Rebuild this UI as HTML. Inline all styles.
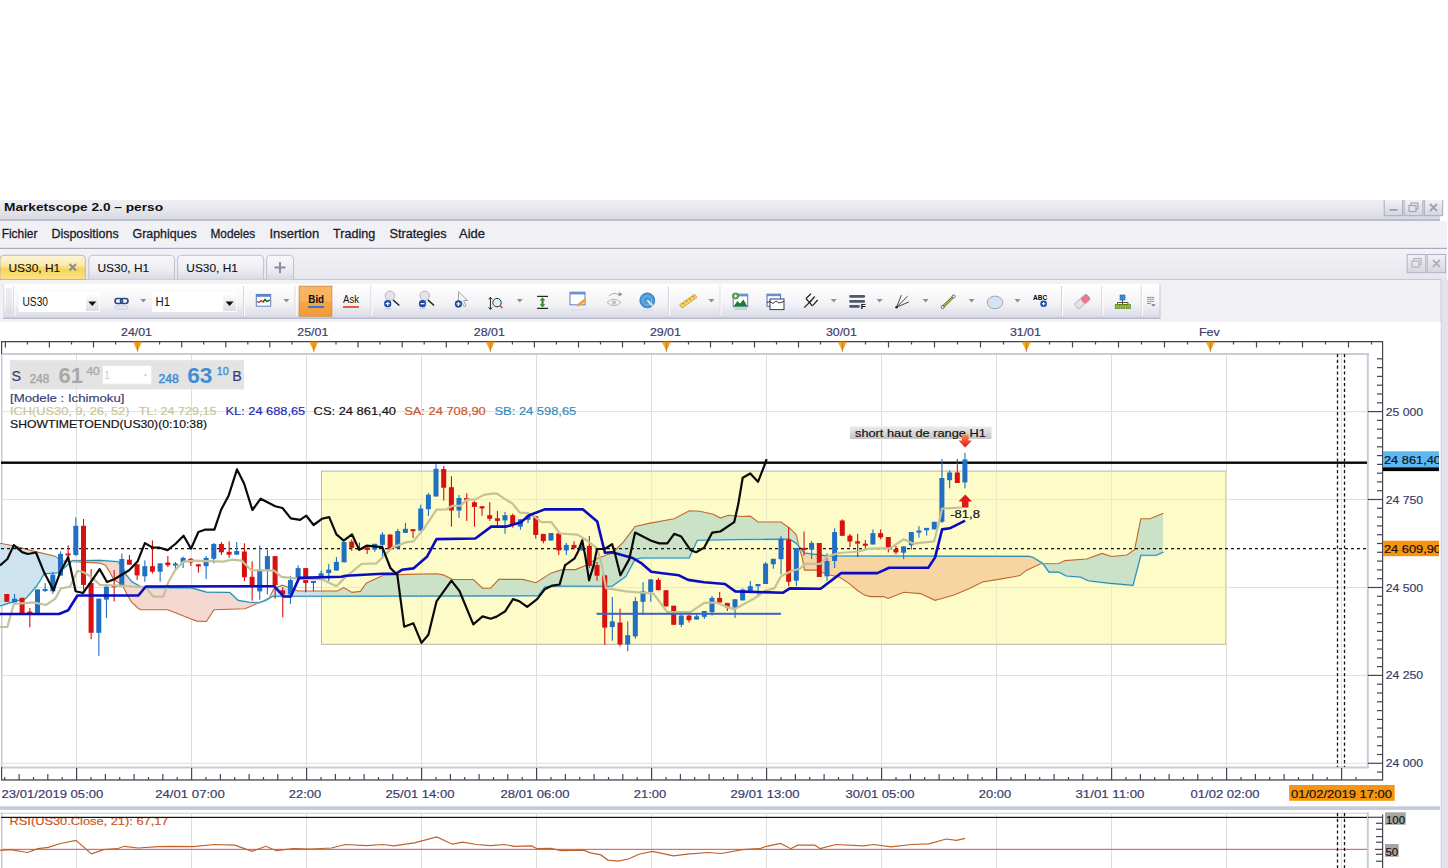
<!DOCTYPE html>
<html><head><meta charset="utf-8"><style>
html,body{margin:0;padding:0;width:1448px;height:868px;overflow:hidden;background:#fff}
svg{display:block}
text{font-family:"Liberation Sans",sans-serif}
</style></head><body>
<svg width="1448" height="868" viewBox="0 0 1448 868" shape-rendering="geometricPrecision">
<defs>
<linearGradient id="gTitle" x1="0" y1="0" x2="0" y2="1"><stop offset="0" stop-color="#efeff3"/><stop offset="0.5" stop-color="#e6e6ec"/><stop offset="1" stop-color="#d6d7e1"/></linearGradient>
<linearGradient id="gTabRow" x1="0" y1="0" x2="0" y2="1"><stop offset="0" stop-color="#f2f2f6"/><stop offset="1" stop-color="#e6e6ee"/></linearGradient>
<linearGradient id="gTab" x1="0" y1="0" x2="0" y2="1"><stop offset="0" stop-color="#f8f8fb"/><stop offset="0.6" stop-color="#ececf2"/><stop offset="1" stop-color="#d8d9e3"/></linearGradient>
<linearGradient id="gTabA" x1="0" y1="0" x2="0" y2="1"><stop offset="0" stop-color="#fdf6de"/><stop offset="0.4" stop-color="#fbeaa8"/><stop offset="0.58" stop-color="#f7d458"/><stop offset="1" stop-color="#fbe38a"/></linearGradient>
<linearGradient id="gTool" x1="0" y1="0" x2="0" y2="1"><stop offset="0" stop-color="#ffffff"/><stop offset="0.55" stop-color="#f4f4f8"/><stop offset="1" stop-color="#d9dae4"/></linearGradient>
<linearGradient id="gBtn" x1="0" y1="0" x2="0" y2="1"><stop offset="0" stop-color="#f2f2f6"/><stop offset="1" stop-color="#d4d5df"/></linearGradient>
<linearGradient id="gBid" x1="0" y1="0" x2="0" y2="1"><stop offset="0" stop-color="#f7b25a"/><stop offset="1" stop-color="#f29a35"/></linearGradient>
<linearGradient id="gDrop" x1="0" y1="0" x2="0" y2="1"><stop offset="0" stop-color="#ffffff"/><stop offset="1" stop-color="#dcdce4"/></linearGradient>
</defs>
<rect x="0" y="0" width="1448" height="868" fill="#ffffff"/>
<rect x="0" y="200" width="1440" height="20" fill="url(#gTitle)"/>
<rect x="0" y="219.5" width="1440" height="1.2" fill="#9fa1b3"/>
<text x="4" y="211" font-size="11.5" fill="#111" font-weight="bold" text-anchor="start" textLength="159" lengthAdjust="spacingAndGlyphs" >Marketscope 2.0 – perso</text>
<rect x="1384.2" y="200" width="18.399999999999864" height="15.699999999999989" fill="url(#gBtn)"/>
<path d="M1384.2,200 L1384.2,215.7 L1402.6,215.7 L1402.6,200" fill="none" stroke="#a9abbb" stroke-width="1"/>
<rect x="1389.4" y="209" width="8" height="1.8" fill="#9fa1b1"/>
<rect x="1404.1" y="200" width="18.800000000000182" height="15.699999999999989" fill="url(#gBtn)"/>
<path d="M1404.1,200 L1404.1,215.7 L1422.9,215.7 L1422.9,200" fill="none" stroke="#a9abbb" stroke-width="1"/>
<rect x="1411.0" y="203" width="7" height="6" fill="none" stroke="#9fa1b1" stroke-width="1.1"/><rect x="1409.0" y="205.5" width="7" height="6" fill="#e2e2ea" stroke="#9fa1b1" stroke-width="1.1"/>
<rect x="1424.3" y="200" width="18.40000000000009" height="15.699999999999989" fill="url(#gBtn)"/>
<path d="M1424.3,200 L1424.3,215.7 L1442.7,215.7 L1442.7,200" fill="none" stroke="#a9abbb" stroke-width="1"/>
<path d="M1430.0,204 L1437.0,211 M1437.0,204 L1430.0,211" stroke="#9fa1b1" stroke-width="1.9"/>
<rect x="0" y="221" width="1447" height="27" fill="#f0f0f5"/>
<rect x="0" y="247.8" width="1447" height="1.2" fill="#a9abbb"/>
<text x="1.7" y="237.5" font-size="12.5" fill="#1a1a2a" font-weight="normal" text-anchor="start" textLength="35.8" lengthAdjust="spacingAndGlyphs" stroke="#1a1a2a" stroke-width="0.28" >Fichier</text>
<text x="51.4" y="237.5" font-size="12.5" fill="#1a1a2a" font-weight="normal" text-anchor="start" textLength="67.3" lengthAdjust="spacingAndGlyphs" stroke="#1a1a2a" stroke-width="0.28" >Dispositions</text>
<text x="132.6" y="237.5" font-size="12.5" fill="#1a1a2a" font-weight="normal" text-anchor="start" textLength="64.0" lengthAdjust="spacingAndGlyphs" stroke="#1a1a2a" stroke-width="0.28" >Graphiques</text>
<text x="210.5" y="237.5" font-size="12.5" fill="#1a1a2a" font-weight="normal" text-anchor="start" textLength="44.7" lengthAdjust="spacingAndGlyphs" stroke="#1a1a2a" stroke-width="0.28" >Modeles</text>
<text x="269.5" y="237.5" font-size="12.5" fill="#1a1a2a" font-weight="normal" text-anchor="start" textLength="49.7" lengthAdjust="spacingAndGlyphs" stroke="#1a1a2a" stroke-width="0.28" >Insertion</text>
<text x="333" y="237.5" font-size="12.5" fill="#1a1a2a" font-weight="normal" text-anchor="start" textLength="42.2" lengthAdjust="spacingAndGlyphs" stroke="#1a1a2a" stroke-width="0.28" >Trading</text>
<text x="389.5" y="237.5" font-size="12.5" fill="#1a1a2a" font-weight="normal" text-anchor="start" textLength="57.0" lengthAdjust="spacingAndGlyphs" stroke="#1a1a2a" stroke-width="0.28" >Strategies</text>
<text x="459" y="237.5" font-size="12.5" fill="#1a1a2a" font-weight="normal" text-anchor="start" textLength="26" lengthAdjust="spacingAndGlyphs" stroke="#1a1a2a" stroke-width="0.28" >Aide</text>
<rect x="0" y="249" width="1447" height="31" fill="url(#gTabRow)"/>
<rect x="0" y="279" width="1441" height="1" fill="#c4c6d2"/>
<rect x="1407.2" y="254.5" width="18.59999999999991" height="18.2" fill="url(#gBtn)" stroke="#b0b2c0" stroke-width="1"/>
<rect x="1414.0" y="258.5" width="7" height="6" fill="none" stroke="#aeb0bc" stroke-width="1.1"/><rect x="1412.0" y="261" width="7" height="6" fill="#e4e4ec" stroke="#aeb0bc" stroke-width="1.1"/>
<rect x="1427.2" y="254.5" width="18.399999999999864" height="18.2" fill="url(#gBtn)" stroke="#b0b2c0" stroke-width="1"/>
<path d="M1432.9,260 L1439.9,267 M1439.9,260 L1432.9,267" stroke="#aeb0bc" stroke-width="1.8"/>
<path d="M0,279.5 L0,259 Q0,255.3 4,255.3 L81,255.3 Q85.3,255.3 85.3,259 L85.3,279.5 Z" fill="url(#gTabA)" stroke="#b4b2ae" stroke-width="0.9"/>
<text x="8.5" y="272" font-size="11.5" fill="#111" font-weight="normal" text-anchor="start" textLength="51.6" lengthAdjust="spacingAndGlyphs" stroke="#111" stroke-width="0.12">US30, H1</text>
<path d="M69.5,264 L76,270.5 M76,264 L69.5,270.5" stroke="#8c8c8c" stroke-width="2"/>
<path d="M88.8,279.5 L88.8,259 Q88.8,255.3 92.8,255.3 L170.5,255.3 Q174.5,255.3 174.5,259 L174.5,279.5" fill="url(#gTab)" stroke="#bfc1cf" stroke-width="1"/>
<text x="97.5" y="272" font-size="11.5" fill="#111" font-weight="normal" text-anchor="start" textLength="51.6" lengthAdjust="spacingAndGlyphs" stroke="#111" stroke-width="0.12">US30, H1</text>
<path d="M177.6,279.5 L177.6,259 Q177.6,255.3 181.6,255.3 L259.6,255.3 Q263.6,255.3 263.6,259 L263.6,279.5" fill="url(#gTab)" stroke="#bfc1cf" stroke-width="1"/>
<text x="186.29999999999998" y="272" font-size="11.5" fill="#111" font-weight="normal" text-anchor="start" textLength="51.6" lengthAdjust="spacingAndGlyphs" stroke="#111" stroke-width="0.12">US30, H1</text>
<path d="M266.6,279.5 L266.6,259 Q266.6,255.3 270.6,255.3 L289.5,255.3 Q293.5,255.3 293.5,259 L293.5,279.5" fill="url(#gTab)" stroke="#bfc1cf" stroke-width="1"/>
<path d="M280,262 L280,273 M274.5,267.5 L285.5,267.5" stroke="#8a8c9c" stroke-width="2"/>
<rect x="0" y="280" width="1441" height="42" fill="#f0f0f5"/>
<rect x="1441" y="280" width="7" height="588" fill="#e2e3eb"/>
<rect x="1440.5" y="280" width="1" height="588" fill="#c8cad6"/>
<rect x="3" y="283.8" width="1157.3" height="34.5" fill="url(#gTool)" rx="1"/>
<rect x="3" y="317.5" width="1157.3" height="1.5" fill="#b9bbca"/>
<rect x="3" y="283.8" width="1" height="34" fill="#dcdde6"/>
<rect x="1159.5" y="283.8" width="1" height="34" fill="#c8cad6"/>
<rect x="6.5" y="288" width="0.8" height="26" fill="#d5d6de"/>
<rect x="8.5" y="288" width="0.8" height="26" fill="#d5d6de"/>
<rect x="10.5" y="288" width="0.8" height="26" fill="#d5d6de"/>
<rect x="13.3" y="286" width="1" height="30" fill="#d2d3dc"/><rect x="14.3" y="286" width="1" height="30" fill="#ffffff"/>
<rect x="18.7" y="292" width="81.1" height="20" fill="#ffffff"/>
<rect x="86" y="293" width="12.8" height="18" fill="url(#gDrop)"/>
<path d="M88.3,301.5 L96.3,301.5 L92.3,306 Z" fill="#111"/>
<text x="22.5" y="305.5" font-size="12" fill="#111" textLength="25.5" lengthAdjust="spacingAndGlyphs">US30</text>
<rect x="115" y="298.5" width="7.5" height="5" rx="2.5" fill="none" stroke="#2a4a88" stroke-width="1.6"/>
<rect x="120.5" y="298.5" width="7.5" height="5" rx="2.5" fill="none" stroke="#2a4a88" stroke-width="1.6"/>
<rect x="115" y="306" width="13" height="3" rx="1.5" fill="none" stroke="#c8cad4" stroke-width="1"/>
<path d="M140.3,299.1 L146.3,299.1 L143.3,302.4 Z" fill="#8e8e98"/>
<rect x="152" y="292" width="84.6" height="20" fill="#ffffff"/>
<rect x="223.2" y="293" width="12.8" height="18" fill="url(#gDrop)"/>
<path d="M225.6,301.5 L233.6,301.5 L229.6,306 Z" fill="#111"/>
<text x="155.5" y="305.5" font-size="12" fill="#111" textLength="14.5" lengthAdjust="spacingAndGlyphs">H1</text>
<rect x="243.0" y="286" width="1" height="30" fill="#d2d3dc"/><rect x="244.0" y="286" width="1" height="30" fill="#ffffff"/>
<rect x="256.3" y="294.4" width="14.4" height="11.8" fill="#ffffff" stroke="#5a7ec0" stroke-width="1"/>
<rect x="256.3" y="294.4" width="14.4" height="2.4" fill="#5a82c8"/>
<polyline points="257,301.5 259,302.5 261,300.5 263,302 265,299.5 267,301.5 270,300" fill="none" stroke="#c03020" stroke-width="1.3"/>
<polyline points="263,302 265,299.5 267,301.5 270,300" fill="none" stroke="#207030" stroke-width="1.3"/>
<rect x="259" y="308.5" width="1.5" height="1.2" fill="#d8d8de"/><rect x="267" y="308.5" width="1.5" height="1.2" fill="#d8d8de"/>
<path d="M283.4,299.1 L289.4,299.1 L286.4,302.4 Z" fill="#8e8e98"/>
<rect x="294.6" y="286" width="1" height="30" fill="#d2d3dc"/><rect x="295.6" y="286" width="1" height="30" fill="#ffffff"/>
<rect x="299.2" y="286.2" width="32.6" height="30" fill="url(#gBid)" stroke="#c89050" stroke-width="1"/>
<rect x="299.7" y="286.7" width="31.6" height="14.5" fill="#fbb768" opacity="0.7"/>
<text x="308.3" y="302.7" font-size="11.5" fill="#111" font-weight="bold" textLength="15.8" lengthAdjust="spacingAndGlyphs">Bid</text>
<rect x="308.2" y="306" width="15.8" height="2" fill="#2a78d8"/>
<text x="343" y="302.7" font-size="11.5" fill="#111" textLength="16" lengthAdjust="spacingAndGlyphs">Ask</text>
<rect x="343" y="306" width="16" height="2" fill="#e86030"/>
<rect x="370.5" y="286" width="1" height="30" fill="#d2d3dc"/><rect x="371.5" y="286" width="1" height="30" fill="#ffffff"/>
<circle cx="389.9" cy="295.8" r="4.8" fill="#e4e4e8" stroke="#b8b8c0" stroke-width="1"/>
<line x1="393.2" y1="300" x2="399.29999999999995" y2="305.5" stroke="#222" stroke-width="1.6"/>
<circle cx="387.7" cy="303.7" r="3.6" fill="#1a4aa0"/>
<path d="M385.7,303.7 L389.7,303.7 M387.7,301.7 L387.7,305.7" stroke="#fff" stroke-width="1.2"/>
<rect x="384.9" y="307.5" width="6" height="2" fill="#b8c4e0" opacity="0.6"/>
<circle cx="424.7" cy="295.8" r="4.8" fill="#e4e4e8" stroke="#b8b8c0" stroke-width="1"/>
<line x1="428.0" y1="300" x2="434.09999999999997" y2="305.5" stroke="#222" stroke-width="1.6"/>
<circle cx="422.5" cy="303.7" r="3.6" fill="#1a4aa0"/>
<path d="M420.5,303.7 L424.5,303.7" stroke="#fff" stroke-width="1.3"/>
<rect x="419.7" y="307.5" width="6" height="2" fill="#b8c4e0" opacity="0.6"/>
<path d="M458.5,291.7 L458.5,304 L461.5,301.5 L464,306.5 L466,305.5 L463.5,300.5 L467.8,300.5 Z" fill="#f4f4f6" stroke="#9a9aa4" stroke-width="0.9"/>
<circle cx="458.4" cy="303.9" r="3.6" fill="#1a4aa0"/><path d="M456.4,303.9 L460.4,303.9 M458.4,301.9 L458.4,305.9" stroke="#fff" stroke-width="1.2"/>
<path d="M490.4,297.5 L490.4,309.2 M488.6,299.3 L490.4,297.3 L492.2,299.3 M488.6,307.4 L490.4,309.4 L492.2,307.4" stroke="#222" stroke-width="1" fill="none"/>
<circle cx="497" cy="302.6" r="4.2" fill="#d8f0f8" stroke="#333" stroke-width="1"/>
<line x1="499.8" y1="305.5" x2="502.3" y2="308" stroke="#d07020" stroke-width="1.8"/>
<path d="M516.7,299.1 L522.7,299.1 L519.7,302.4 Z" fill="#8e8e98"/>
<rect x="537.1" y="295.8" width="10.9" height="1.2" fill="#222"/><rect x="537.1" y="307.8" width="10.9" height="1.2" fill="#222"/>
<path d="M542.5,297.2 L545.3,300.5 L543.6,300.5 L543.6,304.2 L545.3,304.2 L542.5,307.5 L539.7,304.2 L541.4,304.2 L541.4,300.5 L539.7,300.5 Z" fill="#3a8a2a"/>
<rect x="570" y="292.2" width="15" height="12.6" fill="#ffffff" stroke="#5a7ec0" stroke-width="1"/>
<rect x="570" y="292.2" width="15" height="2.2" fill="#6a8ed0"/>
<path d="M584.5,298.5 L586.5,300.5 L580,306 L577,306.5 L577.5,304 Z" fill="#f0a828"/>
<rect x="571" y="309" width="13" height="2" fill="#d8dcec" opacity="0.7"/>
<path d="M607,302.4 Q614,296 621,302.4 Q614,308.8 607,302.4 Z" fill="none" stroke="#b4b4b8" stroke-width="1"/>
<circle cx="614" cy="302.4" r="2.2" fill="#c4c4c8"/>
<path d="M609,296 Q614,291.5 619.5,295" fill="none" stroke="#a8a8ac" stroke-width="1"/>
<path d="M619,292 L622.5,294.5 L618.5,296.5 Z" fill="#909094"/>
<circle cx="647.3" cy="300.4" r="7.4" fill="#4a98d8" stroke="#3a78b8" stroke-width="1"/>
<circle cx="647.3" cy="300.4" r="4.5" fill="none" stroke="#8cc4ec" stroke-width="0.8"/>
<path d="M647.3,300.4 L652.5,305.5" stroke="#d8ecfa" stroke-width="2"/>
<rect x="642" y="309.5" width="11" height="1.5" fill="#c8def0" opacity="0.7"/>
<rect x="667.9" y="286" width="1" height="30" fill="#d2d3dc"/><rect x="668.9" y="286" width="1" height="30" fill="#ffffff"/>
<path d="M679.5,304.8 L694.5,294.2 L697,297.5 L682,308 Z" fill="#f5d060" stroke="#c8a030" stroke-width="0.8"/>
<line x1="683.0" y1="303.0" x2="683.9" y2="304.3" stroke="#6a5020" stroke-width="0.8"/>
<line x1="686.2" y1="300.7" x2="687.1" y2="302.0" stroke="#6a5020" stroke-width="0.8"/>
<line x1="689.4" y1="298.4" x2="690.3" y2="299.7" stroke="#6a5020" stroke-width="0.8"/>
<line x1="692.6" y1="296.1" x2="693.5" y2="297.4" stroke="#6a5020" stroke-width="0.8"/>
<path d="M708.4,299.1 L714.4,299.1 L711.4,302.4 Z" fill="#8e8e98"/>
<rect x="719.6" y="286" width="1" height="30" fill="#d2d3dc"/><rect x="720.6" y="286" width="1" height="30" fill="#ffffff"/>
<rect x="733.2" y="294.2" width="14.5" height="12.5" fill="#ffffff" stroke="#5a7ec0" stroke-width="1"/>
<rect x="733.2" y="294.2" width="14.5" height="2.2" fill="#6a8ed0"/>
<path d="M733.7,306.2 L737.5,301 L740,303.5 L743.5,299.5 L747.2,306.2 Z" fill="#1f7a2a"/>
<circle cx="735.6" cy="296" r="3" fill="#60b040" stroke="#2a7a2a" stroke-width="0.8"/><path d="M734,296 L737.2,296 M735.6,294.4 L735.6,297.6" stroke="#fff" stroke-width="1"/>
<rect x="734" y="308" width="13" height="2" fill="#9ac8a0" opacity="0.5"/>
<rect x="767" y="294.2" width="13.6" height="12" fill="#ffffff" stroke="#4a6aa8" stroke-width="1"/>
<rect x="767" y="294.2" width="13.6" height="2" fill="#6a8ed0"/>
<rect x="770" y="299" width="14" height="10.6" fill="#ffffff" stroke="#2a3a70" stroke-width="1"/>
<polyline points="767,302.5 770,301.5 773,303.5 776,301 779,303 784,301.5" fill="none" stroke="#222" stroke-width="0.9"/>
<path d="M804.2,307.7 L811.9,300" stroke="#222" stroke-width="1.2"/>
<path d="M806,298.5 L811,293.7 M809.5,302.4 L814.8,296.5 M812.4,305.8 L817.7,300" stroke="#222" stroke-width="1.2" fill="none"/>
<path d="M806,298.5 L812.4,305.8" stroke="#222" stroke-width="1.2"/>
<path d="M830.7,299.1 L836.7,299.1 L833.7,302.4 Z" fill="#8e8e98"/>
<rect x="849.2" y="295.09999999999997" width="15.9" height="2.6" rx="1.2" fill="#4c5a6a"/>
<rect x="849.2" y="300.09999999999997" width="15.9" height="2.6" rx="1.2" fill="#4c5a6a"/>
<rect x="849.2" y="305.09999999999997" width="10.6" height="2.6" rx="1.2" fill="#4c5a6a"/>
<text x="860.7" y="309.3" font-size="8" font-weight="bold" fill="#000">F</text>
<path d="M876.6,299.1 L882.6,299.1 L879.6,302.4 Z" fill="#8e8e98"/>
<path d="M896.5,307.2 L901.4,295.1 M896.5,307.2 L907.7,296.1 M896.5,307.2 L909.1,301.9" stroke="#333" stroke-width="0.9" fill="none"/>
<circle cx="896.5" cy="307.2" r="1.2" fill="#222"/>
<path d="M922.6,299.1 L928.6,299.1 L925.6,302.4 Z" fill="#8e8e98"/>
<line x1="942.6" y1="307.2" x2="953.7" y2="296.4" stroke="#4a5a20" stroke-width="2.6"/>
<line x1="942.6" y1="307.2" x2="953.7" y2="296.4" stroke="#a8c838" stroke-width="1.4"/>
<circle cx="942.6" cy="307.2" r="1.5" fill="#fff" stroke="#444" stroke-width="0.8"/><circle cx="953.7" cy="296.4" r="1.5" fill="#fff" stroke="#444" stroke-width="0.8"/>
<path d="M968.6,299.1 L974.6,299.1 L971.6,302.4 Z" fill="#8e8e98"/>
<ellipse cx="995" cy="302.4" rx="7.8" ry="6.3" fill="#d6e4f2" stroke="#9aaabb" stroke-width="1"/>
<path d="M1014.5,299.1 L1020.5,299.1 L1017.5,302.4 Z" fill="#8e8e98"/>
<text x="1033" y="300" font-size="8" font-weight="bold" fill="#000" textLength="14.2" lengthAdjust="spacingAndGlyphs">ABC</text>
<circle cx="1043.6" cy="303.8" r="3.3" fill="#1a4aa0"/><path d="M1041.8,303.8 L1045.4,303.8 M1043.6,302 L1043.6,305.6" stroke="#fff" stroke-width="1.1"/>
<rect x="1061.0" y="286" width="1" height="30" fill="#d2d3dc"/><rect x="1062.0" y="286" width="1" height="30" fill="#ffffff"/>
<g transform="rotate(-40 1082.4 301.5)"><rect x="1074.4" y="298" width="16" height="7" rx="2" fill="#e4e4e6" stroke="#a8a8ac" stroke-width="0.8"/><rect x="1082.4" y="298" width="8" height="7" rx="2" fill="#e87a90"/></g>
<rect x="1101.3" y="286" width="1" height="30" fill="#d2d3dc"/><rect x="1102.3" y="286" width="1" height="30" fill="#ffffff"/>
<rect x="1120" y="295" width="5" height="5" fill="#3a88d8" stroke="#2a68b0" stroke-width="0.6"/>
<path d="M1122.5,300 L1122.5,304.5 M1117.5,304.5 L1128,304.5 M1117.5,302.5 L1117.5,304.5 M1128,302.5 L1128,304.5" stroke="#3a4a20" stroke-width="0.9" fill="none"/>
<path d="M1117.5,302.5 L1128,302.5" stroke="#3a4a20" stroke-width="0.9"/>
<rect x="1115.2" y="304.5" width="4.2" height="4.2" fill="#8ab828" stroke="#5a7a18" stroke-width="0.6"/>
<rect x="1120.8" y="304.5" width="4.2" height="4.2" fill="#8ab828" stroke="#5a7a18" stroke-width="0.6"/>
<rect x="1126.1" y="304.5" width="4.2" height="4.2" fill="#8ab828" stroke="#5a7a18" stroke-width="0.6"/>
<rect x="1140.8" y="286" width="1" height="30" fill="#d2d3dc"/><rect x="1141.8" y="286" width="1" height="30" fill="#ffffff"/>
<rect x="1147" y="296.90000000000003" width="7.2" height="0.9" fill="#8a8a96"/>
<rect x="1147" y="298.8" width="7.2" height="0.9" fill="#8a8a96"/>
<rect x="1147" y="300.90000000000003" width="7.2" height="0.9" fill="#8a8a96"/>
<rect x="1147" y="303.0" width="4" height="0.9" fill="#8a8a96"/>
<path d="M1151.2,304.3 L1155.6,304.3 L1153.4,306.5 Z" fill="#6a6a76"/>
<rect x="0" y="322" width="1440.5" height="546" fill="#ffffff"/>
<rect x="1" y="341" width="1382" height="1.3" fill="#454550"/>
<rect x="1" y="341" width="1.2" height="13.5" fill="#454550"/>
<rect x="1382" y="341" width="1.2" height="439.5" fill="#454550"/>
<rect x="115.0" y="341.5" width="1.2" height="3" fill="#454550"/>
<rect x="92.9" y="341.5" width="1.2" height="6" fill="#454550"/>
<rect x="70.9" y="341.5" width="1.2" height="3" fill="#454550"/>
<rect x="48.8" y="341.5" width="1.2" height="6" fill="#454550"/>
<rect x="26.8" y="341.5" width="1.2" height="3" fill="#454550"/>
<rect x="4.8" y="341.5" width="1.2" height="6" fill="#454550"/>
<rect x="159.0" y="341.5" width="1.2" height="3" fill="#454550"/>
<rect x="181.1" y="341.5" width="1.2" height="6" fill="#454550"/>
<rect x="203.1" y="341.5" width="1.2" height="3" fill="#454550"/>
<rect x="225.2" y="341.5" width="1.2" height="6" fill="#454550"/>
<rect x="247.2" y="341.5" width="1.2" height="3" fill="#454550"/>
<rect x="269.2" y="341.5" width="1.2" height="6" fill="#454550"/>
<rect x="291.3" y="341.5" width="1.2" height="3" fill="#454550"/>
<rect x="335.4" y="341.5" width="1.2" height="3" fill="#454550"/>
<rect x="357.4" y="341.5" width="1.2" height="6" fill="#454550"/>
<rect x="379.5" y="341.5" width="1.2" height="3" fill="#454550"/>
<rect x="401.6" y="341.5" width="1.2" height="6" fill="#454550"/>
<rect x="423.6" y="341.5" width="1.2" height="3" fill="#454550"/>
<rect x="445.7" y="341.5" width="1.2" height="6" fill="#454550"/>
<rect x="467.7" y="341.5" width="1.2" height="3" fill="#454550"/>
<rect x="511.8" y="341.5" width="1.2" height="3" fill="#454550"/>
<rect x="533.8" y="341.5" width="1.2" height="6" fill="#454550"/>
<rect x="555.8" y="341.5" width="1.2" height="3" fill="#454550"/>
<rect x="577.9" y="341.5" width="1.2" height="6" fill="#454550"/>
<rect x="599.9" y="341.5" width="1.2" height="3" fill="#454550"/>
<rect x="621.9" y="341.5" width="1.2" height="6" fill="#454550"/>
<rect x="643.9" y="341.5" width="1.2" height="3" fill="#454550"/>
<rect x="687.9" y="341.5" width="1.2" height="3" fill="#454550"/>
<rect x="709.9" y="341.5" width="1.2" height="6" fill="#454550"/>
<rect x="731.9" y="341.5" width="1.2" height="3" fill="#454550"/>
<rect x="753.9" y="341.5" width="1.2" height="6" fill="#454550"/>
<rect x="775.9" y="341.5" width="1.2" height="3" fill="#454550"/>
<rect x="797.9" y="341.5" width="1.2" height="6" fill="#454550"/>
<rect x="819.9" y="341.5" width="1.2" height="3" fill="#454550"/>
<rect x="864.9" y="341.5" width="1.2" height="3" fill="#454550"/>
<rect x="887.9" y="341.5" width="1.2" height="6" fill="#454550"/>
<rect x="910.9" y="341.5" width="1.2" height="3" fill="#454550"/>
<rect x="933.9" y="341.5" width="1.2" height="6" fill="#454550"/>
<rect x="956.9" y="341.5" width="1.2" height="3" fill="#454550"/>
<rect x="979.9" y="341.5" width="1.2" height="6" fill="#454550"/>
<rect x="1002.9" y="341.5" width="1.2" height="3" fill="#454550"/>
<rect x="1048.9" y="341.5" width="1.2" height="3" fill="#454550"/>
<rect x="1071.9" y="341.5" width="1.2" height="6" fill="#454550"/>
<rect x="1094.9" y="341.5" width="1.2" height="3" fill="#454550"/>
<rect x="1117.9" y="341.5" width="1.2" height="6" fill="#454550"/>
<rect x="1140.9" y="341.5" width="1.2" height="3" fill="#454550"/>
<rect x="1163.9" y="341.5" width="1.2" height="6" fill="#454550"/>
<rect x="1186.9" y="341.5" width="1.2" height="3" fill="#454550"/>
<rect x="1232.9" y="341.5" width="1.2" height="3" fill="#454550"/>
<rect x="1255.9" y="341.5" width="1.2" height="6" fill="#454550"/>
<rect x="1278.9" y="341.5" width="1.2" height="3" fill="#454550"/>
<rect x="1301.9" y="341.5" width="1.2" height="6" fill="#454550"/>
<rect x="1324.9" y="341.5" width="1.2" height="3" fill="#454550"/>
<rect x="1347.9" y="341.5" width="1.2" height="6" fill="#454550"/>
<rect x="1370.9" y="341.5" width="1.2" height="3" fill="#454550"/>
<path d="M133.0,341.8 L142.0,341.8 L137.5,351.5 Z" fill="#f5a21c"/>
<rect x="137.1" y="342" width="0.9" height="10" fill="#a06818" opacity="0.6"/>
<text x="136.5" y="335.6" font-size="11.5" fill="#3a3a6a" font-weight="normal" text-anchor="middle" textLength="31.0" lengthAdjust="spacingAndGlyphs" stroke="#3a3a6a" stroke-width="0.18" >24/01</text>
<path d="M309.3,341.8 L318.3,341.8 L313.8,351.5 Z" fill="#f5a21c"/>
<rect x="313.4" y="342" width="0.9" height="10" fill="#a06818" opacity="0.6"/>
<text x="312.8" y="335.6" font-size="11.5" fill="#3a3a6a" font-weight="normal" text-anchor="middle" textLength="31.0" lengthAdjust="spacingAndGlyphs" stroke="#3a3a6a" stroke-width="0.18" >25/01</text>
<path d="M485.8,341.8 L494.8,341.8 L490.3,351.5 Z" fill="#f5a21c"/>
<rect x="489.9" y="342" width="0.9" height="10" fill="#a06818" opacity="0.6"/>
<text x="489.3" y="335.6" font-size="11.5" fill="#3a3a6a" font-weight="normal" text-anchor="middle" textLength="31.0" lengthAdjust="spacingAndGlyphs" stroke="#3a3a6a" stroke-width="0.18" >28/01</text>
<path d="M661.9,341.8 L670.9,341.8 L666.4,351.5 Z" fill="#f5a21c"/>
<rect x="666.0" y="342" width="0.9" height="10" fill="#a06818" opacity="0.6"/>
<text x="665.4" y="335.6" font-size="11.5" fill="#3a3a6a" font-weight="normal" text-anchor="middle" textLength="31.0" lengthAdjust="spacingAndGlyphs" stroke="#3a3a6a" stroke-width="0.18" >29/01</text>
<path d="M837.9,341.8 L846.9,341.8 L842.4,351.5 Z" fill="#f5a21c"/>
<rect x="842.0" y="342" width="0.9" height="10" fill="#a06818" opacity="0.6"/>
<text x="841.4" y="335.6" font-size="11.5" fill="#3a3a6a" font-weight="normal" text-anchor="middle" textLength="31.0" lengthAdjust="spacingAndGlyphs" stroke="#3a3a6a" stroke-width="0.18" >30/01</text>
<path d="M1021.9,341.8 L1030.9,341.8 L1026.4,351.5 Z" fill="#f5a21c"/>
<rect x="1026.0" y="342" width="0.9" height="10" fill="#a06818" opacity="0.6"/>
<text x="1025.4" y="335.6" font-size="11.5" fill="#3a3a6a" font-weight="normal" text-anchor="middle" textLength="31.0" lengthAdjust="spacingAndGlyphs" stroke="#3a3a6a" stroke-width="0.18" >31/01</text>
<path d="M1205.9,341.8 L1214.9,341.8 L1210.4,351.5 Z" fill="#f5a21c"/>
<rect x="1210.0" y="342" width="0.9" height="10" fill="#a06818" opacity="0.6"/>
<text x="1209.4" y="335.6" font-size="11.5" fill="#3a3a6a" font-weight="normal" text-anchor="middle" textLength="21.0" lengthAdjust="spacingAndGlyphs" stroke="#3a3a6a" stroke-width="0.18" >Fev</text>
<rect x="76.0" y="354" width="1" height="413" fill="#dedede"/>
<rect x="191.0" y="354" width="1" height="413" fill="#dedede"/>
<rect x="306.0" y="354" width="1" height="413" fill="#dedede"/>
<rect x="421.0" y="354" width="1" height="413" fill="#dedede"/>
<rect x="536.0" y="354" width="1" height="413" fill="#dedede"/>
<rect x="651.0" y="354" width="1" height="413" fill="#dedede"/>
<rect x="766.0" y="354" width="1" height="413" fill="#dedede"/>
<rect x="881.0" y="354" width="1" height="413" fill="#dedede"/>
<rect x="996.0" y="354" width="1" height="413" fill="#dedede"/>
<rect x="1111.0" y="354" width="1" height="413" fill="#dedede"/>
<rect x="1226.0" y="354" width="1" height="413" fill="#dedede"/>
<rect x="1341.0" y="354" width="1" height="413" fill="#dedede"/>
<rect x="1" y="411.1" width="1366.5" height="1" fill="#dedede"/>
<rect x="1" y="499.0" width="1366.5" height="1" fill="#dedede"/>
<rect x="1" y="587.0" width="1366.5" height="1" fill="#dedede"/>
<rect x="1" y="674.9" width="1366.5" height="1" fill="#dedede"/>
<rect x="1" y="762.8" width="1366.5" height="1" fill="#dedede"/>
<rect x="321.5" y="471.1" width="904.4" height="173.2" fill="#fdfbc8" stroke="#b6b6b0" stroke-width="1"/>
<rect x="421.0" y="471.6" width="1" height="172.2" fill="#ebe8c4" opacity="0.9"/>
<rect x="536.0" y="471.6" width="1" height="172.2" fill="#ebe8c4" opacity="0.9"/>
<rect x="651.0" y="471.6" width="1" height="172.2" fill="#ebe8c4" opacity="0.9"/>
<rect x="766.0" y="471.6" width="1" height="172.2" fill="#ebe8c4" opacity="0.9"/>
<rect x="881.0" y="471.6" width="1" height="172.2" fill="#ebe8c4" opacity="0.9"/>
<rect x="996.0" y="471.6" width="1" height="172.2" fill="#ebe8c4" opacity="0.9"/>
<rect x="1111.0" y="471.6" width="1" height="172.2" fill="#ebe8c4" opacity="0.9"/>
<rect x="1226.0" y="471.6" width="1" height="172.2" fill="#ebe8c4" opacity="0.9"/>
<rect x="322" y="499.0" width="903.4" height="1" fill="#ebe8c4" opacity="0.9"/>
<rect x="322" y="587.0" width="903.4" height="1" fill="#ebe8c4" opacity="0.9"/>
<rect x="2" y="353" width="1367" height="2" fill="#c9ccd6"/>
<rect x="1366.8" y="353" width="2" height="415" fill="#c9ccd6"/>
<rect x="2" y="766.5" width="1367" height="2" fill="#c9ccd6"/>
<rect x="1" y="354" width="1.5" height="413" fill="#c9ccd6"/>
<clipPath id="cpY"><rect x="321.5" y="471.1" width="904.4" height="173.2"/></clipPath>
<mask id="mW"><rect x="0" y="322" width="1448" height="546" fill="#fff"/><rect x="321.5" y="471.1" width="904.4" height="173.2" fill="#000"/></mask>
<g mask="url(#mW)">
<polygon points="0.0,543.3 0.5,543.4 1.0,543.5 1.5,543.6 2.0,543.7 2.5,543.8 3.0,543.8 3.5,543.9 4.0,544.0 4.5,544.1 5.0,544.2 5.5,544.3 6.0,544.4 6.5,544.5 7.0,544.6 7.5,544.7 8.0,544.8 8.5,544.9 9.0,544.9 9.5,545.0 10.0,545.1 10.5,545.2 11.0,545.3 11.5,545.4 12.0,545.5 12.5,545.6 13.0,545.7 13.5,545.8 14.0,545.9 14.5,545.9 15.0,546.1 15.5,546.2 16.0,546.3 16.5,546.5 17.0,546.6 17.5,546.8 18.0,546.9 18.5,547.0 19.0,547.2 19.5,547.3 20.0,547.4 20.5,547.6 21.0,547.7 21.5,547.9 22.0,548.0 22.5,548.1 23.0,548.3 23.5,548.4 24.0,548.6 24.5,548.7 25.0,548.8 25.5,549.0 26.0,549.1 26.5,549.3 27.0,549.4 27.5,549.5 28.0,549.7 28.5,549.8 29.0,550.0 29.5,550.1 30.0,550.2 30.5,550.4 31.0,550.5 31.5,550.6 32.0,550.8 32.5,550.9 33.0,551.0 33.5,551.1 34.0,551.2 34.5,551.3 35.0,551.5 35.5,551.6 36.0,551.7 36.5,551.8 37.0,551.9 37.5,552.0 38.0,552.2 38.5,552.3 39.0,552.4 39.5,552.5 40.0,552.6 40.5,552.7 41.0,552.9 41.5,553.0 42.0,553.1 42.5,553.2 43.0,553.3 43.5,553.4 44.0,553.6 44.5,553.7 45.0,553.8 45.5,553.9 46.0,554.0 46.5,554.1 47.0,554.3 47.5,554.4 48.0,554.5 48.5,554.6 49.0,554.7 49.5,554.8 50.0,555.0 50.5,555.1 51.0,555.2 51.5,555.3 52.0,555.4 52.5,555.5 53.0,555.7 53.5,555.8 54.0,555.9 54.5,556.0 55.0,556.1 55.5,556.4 56.0,556.8 56.5,557.2 57.0,557.6 57.5,558.0 58.0,558.5 58.5,558.9 59.0,559.3 59.5,559.7 60.0,560.1 60.5,560.5 61.0,560.8 61.5,560.8 62.0,560.9 62.5,560.9 63.0,561.0 63.5,561.0 64.0,561.0 64.5,561.1 65.0,561.1 65.5,561.1 66.0,561.2 66.5,561.2 67.0,561.2 67.5,561.3 68.0,561.3 68.5,561.3 69.0,561.4 69.5,561.4 70.0,561.4 70.5,561.5 71.0,561.5 71.5,561.5 71.5,561.3 71.0,561.7 70.5,562.2 70.0,562.6 69.5,563.1 69.0,563.6 68.5,564.0 68.0,564.5 67.5,565.0 67.0,565.4 66.5,565.9 66.0,566.3 65.5,566.8 65.0,567.3 64.5,567.7 64.0,568.2 63.5,568.6 63.0,569.1 62.5,569.6 62.0,570.0 61.5,570.5 61.0,571.0 60.5,571.4 60.0,571.9 59.5,572.3 59.0,572.8 58.5,572.8 58.0,572.9 57.5,572.9 57.0,572.9 56.5,573.0 56.0,573.0 55.5,573.0 55.0,573.0 54.5,573.1 54.0,573.1 53.5,573.1 53.0,573.2 52.5,573.2 52.0,573.2 51.5,573.3 51.0,573.3 50.5,573.3 50.0,573.4 49.5,573.4 49.0,573.4 48.5,573.4 48.0,573.5 47.5,573.5 47.0,573.5 46.5,573.6 46.0,573.6 45.5,573.6 45.0,573.7 44.5,573.7 44.0,574.2 43.5,575.0 43.0,575.8 42.5,576.6 42.0,577.4 41.5,578.2 41.0,579.1 40.5,579.9 40.0,580.7 39.5,581.5 39.0,582.3 38.5,583.1 38.0,583.9 37.5,584.7 37.0,585.5 36.5,586.2 36.0,586.7 35.5,587.3 35.0,587.9 34.5,588.5 34.0,589.1 33.5,589.7 33.0,590.2 32.5,590.8 32.0,591.4 31.5,592.0 31.0,592.6 30.5,593.1 30.0,593.7 29.5,594.3 29.0,594.9 28.5,595.5 28.0,596.0 27.5,596.6 27.0,597.2 26.5,597.8 26.0,598.4 25.5,598.7 25.0,598.8 24.5,598.9 24.0,599.1 23.5,599.2 23.0,599.3 22.5,599.4 22.0,599.6 21.5,599.7 21.0,599.8 20.5,600.0 20.0,600.1 19.5,600.2 19.0,600.3 18.5,600.5 18.0,600.6 17.5,600.7 17.0,600.9 16.5,601.0 16.0,601.1 15.5,601.2 15.0,601.4 14.5,601.5 14.0,601.6 13.5,601.8 13.0,601.9 12.5,602.0 12.0,602.1 11.5,602.3 11.0,602.4 10.5,602.6 10.0,602.7 9.5,602.9 9.0,603.1 8.5,603.2 8.0,603.4 7.5,603.5 7.0,603.7 6.5,603.9 6.0,604.0 5.5,604.2 5.0,604.4 4.5,604.5 4.0,604.7 3.5,604.9 3.0,605.0 2.5,605.2 2.0,605.3 1.5,605.5 1.0,605.7 0.5,605.8 0.0,606.0" fill="#cde4f0"/>
<polygon points="71.5,561.5 72.0,561.6 72.5,561.6 73.0,561.6 73.5,561.7 74.0,561.7 74.5,561.7 75.0,561.8 75.5,561.8 76.0,561.8 76.5,561.8 77.0,561.9 77.5,561.9 78.0,561.9 78.5,562.0 79.0,562.0 79.5,562.0 80.0,562.0 80.5,562.1 81.0,562.1 81.5,562.1 82.0,562.1 82.5,562.2 83.0,562.2 83.5,562.2 84.0,562.2 84.5,562.3 85.0,562.3 85.5,562.3 86.0,562.4 86.5,562.4 87.0,562.4 87.5,562.4 88.0,562.5 88.5,562.5 89.0,562.5 89.5,562.5 90.0,562.6 90.5,562.6 91.0,562.6 91.5,562.6 92.0,562.7 92.5,562.7 93.0,562.7 93.5,562.8 94.0,562.8 94.5,562.8 95.0,562.8 95.5,562.9 96.0,562.9 96.5,562.9 97.0,562.9 97.5,563.0 98.0,563.0 98.5,563.0 99.0,563.0 99.5,563.1 100.0,563.1 100.5,563.3 101.0,563.5 101.5,563.7 102.0,563.9 102.5,564.1 103.0,564.2 103.5,564.4 104.0,564.6 104.5,564.8 105.0,565.0 105.5,565.2 106.0,566.0 106.5,566.8 107.0,567.7 107.5,568.5 108.0,569.3 108.5,570.1 109.0,571.0 109.5,571.8 110.0,572.7 110.5,573.6 111.0,574.5 111.5,575.4 112.0,576.4 112.5,577.3 113.0,578.2 113.5,579.1 114.0,579.8 114.5,580.1 115.0,580.4 115.5,580.8 116.0,581.1 116.5,581.4 117.0,581.7 117.5,582.0 118.0,582.3 118.5,582.6 119.0,582.9 119.5,583.3 120.0,583.8 120.5,584.3 121.0,584.8 121.5,585.3 122.0,585.8 122.5,586.3 123.0,586.8 123.5,587.3 124.0,588.3 124.5,589.3 125.0,590.3 125.5,591.3 126.0,592.4 126.5,593.4 127.0,594.4 127.5,595.4 128.0,596.3 128.5,597.1 129.0,597.9 129.5,598.7 130.0,599.5 130.5,600.4 131.0,601.2 131.5,602.0 132.0,602.7 132.5,603.1 133.0,603.6 133.5,604.0 134.0,604.5 134.5,604.9 135.0,605.4 135.5,605.8 136.0,606.3 136.5,606.7 137.0,607.2 137.5,607.6 138.0,608.1 138.5,608.5 139.0,608.8 139.5,609.0 140.0,609.2 140.5,609.4 141.0,609.6 141.5,609.7 142.0,609.7 142.5,609.7 143.0,609.7 143.5,609.7 144.0,609.7 144.5,609.7 145.0,609.7 145.5,609.7 146.0,609.7 146.5,609.7 147.0,609.7 147.5,609.7 148.0,609.7 148.5,609.7 149.0,609.7 149.5,609.7 150.0,609.7 150.5,609.7 151.0,609.7 151.5,609.7 152.0,609.7 152.5,609.7 153.0,609.7 153.5,609.7 154.0,609.7 154.5,609.7 155.0,609.7 155.5,609.7 156.0,609.7 156.5,609.7 157.0,609.7 157.5,609.7 158.0,609.7 158.5,609.7 159.0,609.7 159.5,609.7 160.0,609.7 160.5,609.7 161.0,609.7 161.5,609.7 162.0,609.7 162.5,609.7 163.0,609.7 163.5,609.7 164.0,609.7 164.5,609.7 165.0,609.7 165.5,609.7 166.0,609.7 166.5,609.7 167.0,609.7 167.5,609.7 168.0,609.8 168.5,610.0 169.0,610.2 169.5,610.4 170.0,610.6 170.5,610.8 171.0,611.0 171.5,611.2 172.0,611.4 172.5,611.6 173.0,611.8 173.5,612.0 174.0,612.2 174.5,612.4 175.0,612.6 175.5,612.8 176.0,613.0 176.5,613.2 177.0,613.4 177.5,613.6 178.0,613.8 178.5,614.0 179.0,614.2 179.5,614.4 180.0,614.6 180.5,614.8 181.0,615.0 181.5,615.1 182.0,615.3 182.5,615.5 183.0,615.7 183.5,615.9 184.0,616.1 184.5,616.3 185.0,616.5 185.5,616.7 186.0,616.9 186.5,617.1 187.0,617.3 187.5,617.5 188.0,617.7 188.5,617.9 189.0,618.1 189.5,618.3 190.0,618.5 190.5,618.7 191.0,618.9 191.5,619.1 192.0,619.3 192.5,619.5 193.0,619.7 193.5,619.8 194.0,620.0 194.5,620.2 195.0,620.4 195.5,620.6 196.0,620.8 196.5,621.0 197.0,621.1 197.5,621.1 198.0,621.2 198.5,621.2 199.0,621.2 199.5,621.2 200.0,621.2 200.5,621.3 201.0,621.3 201.5,621.3 202.0,621.3 202.5,621.3 203.0,621.4 203.5,621.4 204.0,621.4 204.5,621.4 205.0,621.4 205.5,621.5 206.0,621.5 206.5,621.3 207.0,620.6 207.5,619.8 208.0,619.0 208.5,618.2 209.0,617.5 209.5,616.7 210.0,615.9 210.5,615.1 211.0,614.4 211.5,613.6 212.0,612.8 212.5,612.0 213.0,611.3 213.5,610.5 214.0,609.7 214.5,609.7 215.0,609.7 215.5,609.7 216.0,609.6 216.5,609.6 217.0,609.6 217.5,609.6 218.0,609.6 218.5,609.6 219.0,609.5 219.5,609.5 220.0,609.5 220.5,609.5 221.0,609.5 221.5,609.5 222.0,609.4 222.5,609.4 223.0,609.4 223.5,609.4 224.0,609.4 224.5,609.4 225.0,609.3 225.5,609.3 226.0,609.3 226.5,609.3 227.0,609.3 227.5,609.3 228.0,609.2 228.5,609.2 229.0,609.2 229.5,609.2 230.0,609.2 230.5,609.2 231.0,609.2 231.5,609.1 232.0,609.1 232.5,609.1 233.0,609.1 233.5,609.1 234.0,609.1 234.5,609.0 235.0,609.0 235.5,609.0 236.0,609.0 236.5,609.0 237.0,609.0 237.5,608.9 238.0,608.9 238.5,608.9 239.0,608.9 239.5,608.9 240.0,608.9 240.5,608.8 241.0,608.8 241.5,608.8 242.0,608.8 242.5,608.8 243.0,608.8 243.5,608.7 244.0,608.7 244.5,608.7 245.0,608.7 245.5,608.5 246.0,608.3 246.5,608.1 247.0,607.8 247.5,607.6 248.0,607.4 248.5,607.2 249.0,607.0 249.5,606.8 250.0,606.5 250.5,606.3 251.0,606.1 251.5,605.9 252.0,605.7 252.5,605.5 253.0,605.2 253.5,605.0 254.0,604.8 254.5,604.6 255.0,604.4 255.5,604.2 256.0,603.9 256.5,603.7 257.0,603.5 257.5,603.3 258.0,603.1 258.5,602.9 259.0,602.7 259.0,602.7 258.5,602.8 258.0,602.8 257.5,602.7 257.0,602.7 256.5,602.7 256.0,602.6 255.5,602.6 255.0,602.6 254.5,602.5 254.0,602.5 253.5,602.5 253.0,602.4 252.5,602.4 252.0,602.4 251.5,602.3 251.0,602.3 250.5,602.3 250.0,602.2 249.5,602.2 249.0,602.2 248.5,602.1 248.0,602.0 247.5,601.9 247.0,601.8 246.5,601.8 246.0,601.7 245.5,601.6 245.0,601.5 244.5,601.4 244.0,601.4 243.5,601.3 243.0,601.2 242.5,601.1 242.0,601.0 241.5,601.0 241.0,600.9 240.5,600.8 240.0,600.7 239.5,600.6 239.0,600.5 238.5,600.5 238.0,600.3 237.5,599.8 237.0,599.4 236.5,598.9 236.0,598.4 235.5,597.9 235.0,597.4 234.5,597.0 234.0,596.5 233.5,596.0 233.0,595.5 232.5,595.1 232.0,594.6 231.5,594.1 231.0,593.6 230.5,593.2 230.0,592.7 229.5,592.5 229.0,592.5 228.5,592.5 228.0,592.5 227.5,592.5 227.0,592.5 226.5,592.4 226.0,592.4 225.5,592.4 225.0,592.4 224.5,592.4 224.0,592.4 223.5,592.4 223.0,592.4 222.5,592.4 222.0,592.4 221.5,592.4 221.0,592.3 220.5,592.3 220.0,592.3 219.5,592.3 219.0,592.3 218.5,592.3 218.0,592.3 217.5,592.3 217.0,592.3 216.5,592.3 216.0,592.3 215.5,592.3 215.0,592.2 214.5,592.2 214.0,592.2 213.5,592.2 213.0,592.2 212.5,592.2 212.0,592.2 211.5,592.2 211.0,592.2 210.5,592.2 210.0,592.2 209.5,592.2 209.0,592.1 208.5,592.1 208.0,592.1 207.5,592.1 207.0,592.1 206.5,592.1 206.0,592.0 205.5,591.8 205.0,591.7 204.5,591.6 204.0,591.4 203.5,591.3 203.0,591.2 202.5,591.0 202.0,590.9 201.5,590.7 201.0,590.6 200.5,590.5 200.0,590.3 199.5,590.2 199.0,590.0 198.5,589.9 198.0,589.8 197.5,589.6 197.0,589.5 196.5,589.3 196.0,589.2 195.5,589.1 195.0,589.0 194.5,588.8 194.0,588.7 193.5,588.6 193.0,588.5 192.5,588.3 192.0,588.2 191.5,588.1 191.0,588.0 190.5,588.0 190.0,588.0 189.5,588.0 189.0,588.0 188.5,588.0 188.0,588.0 187.5,588.0 187.0,588.0 186.5,588.0 186.0,588.0 185.5,587.9 185.0,587.9 184.5,587.9 184.0,587.9 183.5,587.9 183.0,587.9 182.5,587.9 182.0,587.9 181.5,587.9 181.0,587.9 180.5,587.9 180.0,587.9 179.5,587.9 179.0,587.9 178.5,587.9 178.0,587.9 177.5,587.9 177.0,587.9 176.5,587.9 176.0,587.9 175.5,587.9 175.0,587.9 174.5,587.8 174.0,587.8 173.5,587.8 173.0,587.8 172.5,587.8 172.0,587.8 171.5,587.8 171.0,587.8 170.5,587.8 170.0,587.8 169.5,587.8 169.0,587.8 168.5,587.8 168.0,587.8 167.5,587.8 167.0,587.8 166.5,587.8 166.0,587.8 165.5,587.8 165.0,587.8 164.5,587.8 164.0,587.8 163.5,587.7 163.0,587.7 162.5,587.7 162.0,587.7 161.5,587.7 161.0,587.7 160.5,587.7 160.0,587.7 159.5,587.7 159.0,587.7 158.5,587.7 158.0,587.7 157.5,587.7 157.0,587.7 156.5,587.7 156.0,587.7 155.5,587.7 155.0,587.7 154.5,587.7 154.0,587.7 153.5,587.7 153.0,587.7 152.5,587.6 152.0,587.6 151.5,587.6 151.0,587.6 150.5,587.6 150.0,587.6 149.5,587.6 149.0,587.6 148.5,587.6 148.0,587.6 147.5,587.6 147.0,587.6 146.5,587.5 146.0,587.4 145.5,587.3 145.0,587.2 144.5,587.1 144.0,587.0 143.5,586.9 143.0,586.8 142.5,586.7 142.0,586.6 141.5,586.5 141.0,586.4 140.5,586.3 140.0,586.2 139.5,585.9 139.0,585.7 138.5,585.4 138.0,585.1 137.5,584.9 137.0,584.6 136.5,584.3 136.0,584.1 135.5,583.8 135.0,583.5 134.5,583.2 134.0,583.0 133.5,582.7 133.0,582.4 132.5,582.2 132.0,581.9 131.5,581.4 131.0,580.8 130.5,580.2 130.0,579.6 129.5,579.0 129.0,578.3 128.5,577.7 128.0,577.1 127.5,576.5 127.0,575.9 126.5,575.3 126.0,574.5 125.5,573.5 125.0,572.5 124.5,571.5 124.0,570.4 123.5,569.4 123.0,568.4 122.5,567.4 122.0,566.5 121.5,565.9 121.0,565.3 120.5,564.7 120.0,564.1 119.5,563.5 119.0,562.9 118.5,562.3 118.0,561.7 117.5,561.7 117.0,561.6 116.5,561.6 116.0,561.6 115.5,561.5 115.0,561.5 114.5,561.4 114.0,561.4 113.5,561.4 113.0,561.3 112.5,561.3 112.0,561.3 111.5,561.2 111.0,561.2 110.5,561.2 110.0,561.1 109.5,561.1 109.0,561.0 108.5,561.0 108.0,561.0 107.5,560.9 107.0,560.9 106.5,560.9 106.0,560.8 105.5,560.8 105.0,560.8 104.5,560.7 104.0,560.7 103.5,560.7 103.0,560.6 102.5,560.6 102.0,560.5 101.5,560.5 101.0,560.5 100.5,560.4 100.0,560.4 99.5,560.4 99.0,560.4 98.5,560.4 98.0,560.4 97.5,560.4 97.0,560.4 96.5,560.4 96.0,560.5 95.5,560.5 95.0,560.5 94.5,560.5 94.0,560.5 93.5,560.5 93.0,560.5 92.5,560.5 92.0,560.5 91.5,560.5 91.0,560.5 90.5,560.5 90.0,560.5 89.5,560.5 89.0,560.6 88.5,560.6 88.0,560.6 87.5,560.6 87.0,560.6 86.5,560.6 86.0,560.6 85.5,560.6 85.0,560.6 84.5,560.6 84.0,560.6 83.5,560.6 83.0,560.6 82.5,560.6 82.0,560.7 81.5,560.7 81.0,560.7 80.5,560.7 80.0,560.7 79.5,560.7 79.0,560.7 78.5,560.7 78.0,560.7 77.5,560.7 77.0,560.7 76.5,560.7 76.0,560.7 75.5,560.8 75.0,560.8 74.5,560.8 74.0,560.8 73.5,560.8 73.0,560.8 72.5,560.8 72.0,560.8 71.5,561.3" fill="#f5d8cf"/>
<polygon points="259.0,602.7 259.5,602.5 260.0,602.3 260.5,602.1 261.0,601.9 261.5,601.7 262.0,601.5 262.5,601.3 263.0,601.1 263.5,600.8 264.0,600.6 264.5,600.3 265.0,600.0 265.5,599.7 266.0,599.5 266.5,599.2 267.0,598.9 267.5,598.6 268.0,598.4 268.5,598.1 269.0,597.8 269.5,597.1 270.0,596.2 270.5,595.3 271.0,594.3 271.5,593.4 272.0,592.5 272.5,591.5 273.0,590.6 273.5,589.6 274.0,588.7 274.5,588.5 275.0,588.3 275.5,588.1 276.0,587.9 276.5,587.6 277.0,587.4 277.5,587.2 278.0,587.0 278.5,586.8 279.0,586.6 279.5,586.4 280.0,586.2 280.5,586.0 281.0,585.7 281.5,585.5 282.0,585.3 282.5,585.3 283.0,585.4 283.5,585.6 284.0,585.8 284.5,585.9 285.0,586.1 285.5,586.3 286.0,586.4 286.5,586.6 287.0,586.8 287.5,587.0 288.0,587.1 288.5,587.3 289.0,587.5 289.5,587.6 290.0,587.8 290.5,588.0 291.0,588.2 291.5,588.4 292.0,588.6 292.5,588.8 293.0,589.0 293.5,589.2 294.0,589.4 294.5,589.6 295.0,589.8 295.5,590.0 296.0,590.2 296.5,590.4 297.0,590.6 297.5,590.8 298.0,591.0 298.5,591.0 299.0,591.0 299.5,591.0 300.0,591.0 300.5,591.0 301.0,591.0 301.5,591.0 302.0,591.0 302.5,591.0 303.0,591.0 303.5,591.0 304.0,591.0 304.5,591.0 305.0,591.0 305.5,591.0 306.0,591.0 306.5,591.0 307.0,591.0 307.5,591.0 308.0,591.0 308.5,591.0 309.0,591.0 309.5,591.0 310.0,591.0 310.5,591.0 311.0,591.0 311.5,591.0 312.0,591.0 312.5,591.0 313.0,591.0 313.5,591.0 314.0,591.0 314.5,591.0 315.0,591.0 315.5,591.0 316.0,591.0 316.5,591.0 317.0,591.0 317.5,591.0 318.0,591.0 318.5,591.0 319.0,591.0 319.5,591.0 320.0,591.0 320.5,591.0 321.0,591.0 321.5,591.0 322.0,591.0 322.5,591.0 323.0,591.0 323.5,591.0 324.0,591.0 324.5,591.0 325.0,591.0 325.5,591.0 326.0,591.0 326.5,591.0 327.0,591.0 327.5,591.0 328.0,591.0 328.5,591.0 329.0,591.0 329.5,591.0 330.0,591.0 330.5,591.0 331.0,591.0 331.5,591.0 332.0,591.0 332.5,591.0 333.0,591.0 333.5,591.0 334.0,591.0 334.5,591.0 335.0,591.0 335.5,591.0 336.0,591.0 336.5,591.0 337.0,591.0 337.5,590.9 338.0,590.7 338.5,590.4 339.0,590.1 339.5,589.9 340.0,589.6 340.5,589.3 341.0,589.1 341.5,588.8 342.0,588.5 342.5,588.2 343.0,588.0 343.5,587.7 344.0,587.8 344.5,588.1 345.0,588.4 345.5,588.6 346.0,588.9 346.5,589.2 347.0,589.5 347.5,589.8 348.0,590.1 348.5,590.4 349.0,590.7 349.5,591.0 350.0,591.2 350.5,591.5 351.0,591.8 351.5,592.1 352.0,592.4 352.5,592.3 353.0,592.3 353.5,592.2 354.0,592.2 354.5,592.1 355.0,592.0 355.5,592.0 356.0,591.9 356.5,591.9 357.0,591.8 357.5,591.7 358.0,591.7 358.5,591.6 359.0,591.6 359.5,591.5 360.0,591.4 360.5,591.1 361.0,590.5 361.5,589.8 362.0,589.1 362.5,588.4 363.0,587.7 363.5,587.1 364.0,586.4 364.5,585.7 365.0,585.0 365.5,584.4 366.0,583.7 366.5,583.0 367.0,582.8 367.5,582.5 368.0,582.3 368.5,582.1 369.0,581.9 369.5,581.6 370.0,581.4 370.5,581.2 371.0,581.0 371.5,580.7 372.0,580.5 372.5,580.3 373.0,580.0 373.5,579.8 374.0,579.6 374.5,579.4 375.0,579.1 375.5,578.9 376.0,578.7 376.5,578.4 377.0,578.2 377.5,578.0 378.0,577.8 378.5,577.5 379.0,577.3 379.5,577.1 380.0,576.9 380.5,576.6 381.0,576.4 381.5,576.2 382.0,575.9 382.5,575.7 383.0,575.5 383.5,575.3 384.0,575.3 384.5,575.3 385.0,575.2 385.5,575.2 386.0,575.2 386.5,575.2 387.0,575.2 387.5,575.1 388.0,575.1 388.5,575.1 389.0,575.1 389.5,575.1 390.0,575.0 390.5,575.0 391.0,575.0 391.5,575.0 392.0,575.0 392.5,574.9 393.0,574.9 393.5,574.9 394.0,574.9 394.5,574.9 395.0,574.8 395.5,574.8 396.0,574.8 396.5,574.8 397.0,574.8 397.5,574.8 398.0,574.7 398.5,574.7 399.0,574.7 399.5,574.7 400.0,574.7 400.5,574.6 401.0,574.6 401.5,574.6 402.0,574.6 402.5,574.6 403.0,574.5 403.5,574.5 404.0,574.5 404.5,574.5 405.0,574.5 405.5,574.4 406.0,574.4 406.5,574.4 407.0,574.4 407.5,574.4 408.0,574.4 408.5,574.4 409.0,574.3 409.5,574.3 410.0,574.3 410.5,574.3 411.0,574.3 411.5,574.3 412.0,574.3 412.5,574.3 413.0,574.2 413.5,574.2 414.0,574.2 414.5,574.2 415.0,574.2 415.5,574.2 416.0,574.2 416.5,574.2 417.0,574.2 417.5,574.1 418.0,574.1 418.5,574.1 419.0,574.1 419.5,574.1 420.0,574.1 420.5,574.1 421.0,574.1 421.5,574.0 422.0,574.0 422.5,574.0 423.0,574.0 423.5,574.0 424.0,574.0 424.5,574.0 425.0,574.0 425.5,574.0 426.0,573.9 426.5,573.9 427.0,573.9 427.5,573.9 428.0,573.9 428.5,573.9 429.0,573.9 429.5,573.9 430.0,573.9 430.5,573.8 431.0,573.8 431.5,573.8 432.0,573.8 432.5,573.8 433.0,573.8 433.5,573.8 434.0,573.8 434.5,573.7 435.0,573.7 435.5,573.7 436.0,573.7 436.5,573.7 437.0,573.8 437.5,573.9 438.0,574.0 438.5,574.0 439.0,574.1 439.5,574.2 440.0,574.3 440.5,574.4 441.0,574.5 441.5,574.6 442.0,574.7 442.5,574.7 443.0,574.8 443.5,575.0 444.0,575.2 444.5,575.5 445.0,575.7 445.5,576.0 446.0,576.2 446.5,576.5 447.0,576.7 447.5,577.0 448.0,577.2 448.5,577.5 449.0,577.7 449.5,578.0 450.0,578.2 450.5,578.5 451.0,578.7 451.5,579.0 452.0,579.2 452.5,579.5 453.0,579.5 453.5,579.5 454.0,579.5 454.5,579.5 455.0,579.5 455.5,579.5 456.0,579.5 456.5,579.5 457.0,579.5 457.5,579.5 458.0,579.5 458.5,579.5 459.0,579.5 459.5,579.5 460.0,579.5 460.5,579.5 461.0,579.5 461.5,579.5 462.0,579.5 462.5,579.5 463.0,579.5 463.5,579.5 464.0,579.5 464.5,579.5 465.0,579.5 465.5,579.5 466.0,579.5 466.5,579.5 467.0,579.5 467.5,579.5 468.0,579.5 468.5,579.5 469.0,579.5 469.5,579.5 470.0,579.5 470.5,579.5 471.0,579.5 471.5,579.5 472.0,579.5 472.5,579.5 473.0,579.5 473.5,579.7 474.0,580.2 474.5,580.6 475.0,581.1 475.5,581.6 476.0,582.0 476.5,582.5 477.0,583.0 477.5,583.4 478.0,583.9 478.5,584.4 479.0,584.8 479.5,585.3 480.0,585.8 480.5,586.2 481.0,586.7 481.5,587.2 482.0,587.6 482.5,588.1 483.0,588.2 483.5,588.2 484.0,588.2 484.5,588.2 485.0,588.2 485.5,588.2 486.0,588.2 486.5,588.2 487.0,588.2 487.5,588.2 488.0,588.2 488.5,588.2 489.0,588.2 489.5,588.2 490.0,588.2 490.5,588.2 491.0,587.8 491.5,587.2 492.0,586.7 492.5,586.2 493.0,585.6 493.5,585.1 494.0,584.6 494.5,584.0 495.0,583.5 495.5,582.9 496.0,582.4 496.5,581.9 497.0,581.3 497.5,580.8 498.0,580.3 498.5,579.7 499.0,579.4 499.5,579.4 500.0,579.4 500.5,579.4 501.0,579.4 501.5,579.4 502.0,579.4 502.5,579.4 503.0,579.4 503.5,579.4 504.0,579.4 504.5,579.4 505.0,579.4 505.5,579.4 506.0,579.4 506.5,579.4 507.0,579.4 507.5,579.4 508.0,579.4 508.5,579.4 509.0,579.4 509.5,579.4 510.0,579.4 510.5,579.4 511.0,579.4 511.5,579.4 512.0,579.4 512.5,579.4 513.0,579.4 513.5,579.4 514.0,579.4 514.5,579.4 515.0,579.4 515.5,579.4 516.0,579.4 516.5,579.4 517.0,579.4 517.5,579.4 518.0,579.4 518.5,579.4 519.0,579.4 519.5,579.4 520.0,579.4 520.5,579.4 521.0,579.4 521.5,579.4 522.0,579.4 522.5,579.4 523.0,579.5 523.5,579.6 524.0,579.7 524.5,579.8 525.0,580.0 525.5,580.1 526.0,580.2 526.5,580.3 527.0,580.5 527.5,580.6 528.0,580.7 528.5,580.8 529.0,581.0 529.5,581.1 530.0,581.2 530.5,581.3 531.0,581.5 531.5,581.6 532.0,581.7 532.5,581.8 533.0,582.0 533.5,582.1 534.0,582.2 534.5,582.3 535.0,582.5 535.5,582.6 536.0,582.7 536.5,582.4 537.0,582.1 537.5,581.7 538.0,581.4 538.5,581.1 539.0,580.8 539.5,580.5 540.0,580.1 540.5,579.8 541.0,579.5 541.5,579.2 542.0,578.9 542.5,578.5 543.0,578.2 543.5,577.9 544.0,577.6 544.5,577.3 545.0,576.9 545.5,576.6 546.0,576.3 546.5,576.0 547.0,575.7 547.5,575.3 548.0,575.0 548.5,574.7 549.0,574.4 549.5,574.1 550.0,573.7 550.5,573.4 551.0,573.1 551.5,572.8 552.0,572.7 552.5,572.5 553.0,572.4 553.5,572.2 554.0,572.1 554.5,571.9 555.0,571.8 555.5,571.6 556.0,571.5 556.5,571.3 557.0,571.2 557.5,571.0 558.0,570.9 558.5,570.7 559.0,570.6 559.5,570.4 560.0,570.3 560.5,570.1 561.0,570.0 561.5,569.8 562.0,569.7 562.5,569.6 563.0,569.6 563.5,569.6 564.0,569.6 564.5,569.6 565.0,569.6 565.5,569.6 566.0,569.6 566.5,569.6 567.0,569.6 567.5,569.6 568.0,569.6 568.5,569.6 569.0,569.6 569.5,569.6 570.0,569.6 570.5,569.6 571.0,569.6 571.5,569.6 572.0,569.6 572.5,569.6 573.0,569.6 573.5,569.6 574.0,569.6 574.5,569.6 575.0,569.6 575.5,569.6 576.0,569.4 576.5,569.2 577.0,569.0 577.5,568.8 578.0,568.6 578.5,568.3 579.0,568.1 579.5,567.9 580.0,567.7 580.5,567.5 581.0,567.3 581.5,567.1 582.0,566.9 582.5,566.7 583.0,566.5 583.5,566.3 584.0,566.1 584.5,565.9 585.0,565.7 585.5,565.5 586.0,565.3 586.5,565.1 587.0,564.8 587.5,564.5 588.0,564.2 588.5,563.9 589.0,563.6 589.5,563.3 590.0,563.0 590.5,562.7 591.0,562.4 591.5,562.1 592.0,561.7 592.5,561.4 593.0,561.1 593.5,560.8 594.0,560.5 594.5,560.2 595.0,559.9 595.5,559.6 596.0,559.3 596.5,559.0 597.0,558.7 597.5,558.5 598.0,558.3 598.5,558.1 599.0,557.9 599.5,557.7 600.0,557.5 600.5,557.3 601.0,557.1 601.5,556.9 602.0,556.7 602.5,556.5 603.0,556.3 603.5,556.1 604.0,555.9 604.5,555.7 605.0,555.6 605.5,555.4 606.0,555.2 606.5,555.0 607.0,554.8 607.5,554.6 608.0,554.4 608.5,554.2 609.0,554.1 609.5,554.0 610.0,553.9 610.5,553.8 611.0,553.6 611.5,553.5 612.0,553.4 612.5,552.9 613.0,552.4 613.5,551.9 614.0,551.4 614.5,550.9 615.0,550.4 615.5,549.9 616.0,549.4 616.5,548.9 617.0,548.4 617.5,547.9 618.0,547.3 618.5,546.8 619.0,546.3 619.5,545.8 620.0,545.3 620.5,544.8 621.0,544.3 621.5,543.8 622.0,543.3 622.5,542.8 623.0,542.3 623.5,541.8 624.0,541.1 624.5,540.5 625.0,539.8 625.5,539.1 626.0,538.5 626.5,537.8 627.0,537.2 627.5,536.5 628.0,535.8 628.5,535.2 629.0,534.5 629.5,533.8 630.0,533.2 630.5,532.5 631.0,531.8 631.5,531.2 632.0,530.5 632.5,529.9 633.0,529.2 633.5,528.5 634.0,527.9 634.5,527.2 635.0,526.5 635.5,526.3 636.0,526.2 636.5,526.1 637.0,526.0 637.5,525.9 638.0,525.8 638.5,525.7 639.0,525.6 639.5,525.4 640.0,525.3 640.5,525.2 641.0,525.1 641.5,525.0 642.0,524.9 642.5,524.8 643.0,524.7 643.5,524.6 644.0,524.5 644.5,524.4 645.0,524.2 645.5,524.1 646.0,524.0 646.5,523.9 647.0,523.8 647.5,523.7 648.0,523.6 648.5,523.5 649.0,523.4 649.5,523.3 650.0,523.2 650.5,523.1 651.0,523.0 651.5,522.9 652.0,522.8 652.5,522.7 653.0,522.7 653.5,522.6 654.0,522.5 654.5,522.4 655.0,522.3 655.5,522.2 656.0,522.1 656.5,522.0 657.0,521.9 657.5,521.8 658.0,521.7 658.5,521.7 659.0,521.6 659.5,521.5 660.0,521.4 660.5,521.3 661.0,521.2 661.5,521.1 662.0,521.0 662.5,520.9 663.0,520.8 663.5,520.7 664.0,520.7 664.5,520.6 665.0,520.5 665.5,520.4 666.0,520.3 666.5,520.2 667.0,520.1 667.5,520.0 668.0,519.9 668.5,519.8 669.0,519.7 669.5,519.7 670.0,519.6 670.5,519.5 671.0,519.4 671.5,519.3 672.0,519.2 672.5,519.1 673.0,519.0 673.5,518.9 674.0,518.8 674.5,518.6 675.0,518.4 675.5,518.1 676.0,517.8 676.5,517.6 677.0,517.3 677.5,517.0 678.0,516.7 678.5,516.5 679.0,516.2 679.5,515.9 680.0,515.7 680.5,515.4 681.0,515.1 681.5,514.9 682.0,514.6 682.5,514.3 683.0,514.0 683.5,513.8 684.0,513.5 684.5,513.2 685.0,513.0 685.5,512.7 686.0,512.4 686.5,512.2 687.0,511.9 687.5,511.6 688.0,511.3 688.5,511.1 689.0,510.8 689.5,510.7 690.0,510.7 690.5,510.8 691.0,510.8 691.5,510.8 692.0,510.8 692.5,510.9 693.0,510.9 693.5,510.9 694.0,510.9 694.5,511.0 695.0,511.0 695.5,511.0 696.0,511.0 696.5,511.1 697.0,511.1 697.5,511.1 698.0,511.1 698.5,511.1 699.0,511.2 699.5,511.2 700.0,511.3 700.5,511.4 701.0,511.5 701.5,511.6 702.0,511.7 702.5,511.8 703.0,511.9 703.5,512.0 704.0,512.2 704.5,512.3 705.0,512.4 705.5,512.5 706.0,512.6 706.5,512.7 707.0,512.8 707.5,512.9 708.0,513.0 708.5,513.1 709.0,513.2 709.5,513.4 710.0,513.5 710.5,513.6 711.0,513.7 711.5,513.8 712.0,513.9 712.5,514.0 713.0,514.1 713.5,514.3 714.0,514.5 714.5,514.8 715.0,515.1 715.5,515.4 716.0,515.7 716.5,516.0 717.0,516.2 717.5,516.5 718.0,516.8 718.5,517.1 719.0,517.4 719.5,517.6 720.0,517.9 720.5,518.0 721.0,517.9 721.5,517.7 722.0,517.5 722.5,517.3 723.0,517.2 723.5,517.0 724.0,516.8 724.5,516.6 725.0,516.5 725.5,516.3 726.0,516.1 726.5,516.0 727.0,515.8 727.5,515.6 728.0,515.4 728.5,515.3 729.0,515.4 729.5,515.4 730.0,515.4 730.5,515.5 731.0,515.5 731.5,515.6 732.0,515.6 732.5,515.7 733.0,515.7 733.5,515.8 734.0,515.8 734.5,515.8 735.0,515.9 735.5,515.9 736.0,516.0 736.5,516.0 737.0,516.1 737.5,516.1 738.0,516.1 738.5,516.2 739.0,516.2 739.5,516.3 740.0,516.3 740.5,516.4 741.0,516.4 741.5,516.5 742.0,516.5 742.5,516.5 743.0,516.5 743.5,516.4 744.0,516.4 744.5,516.4 745.0,516.4 745.5,516.3 746.0,516.3 746.5,516.3 747.0,516.3 747.5,516.2 748.0,516.2 748.5,516.2 749.0,516.2 749.5,516.1 750.0,516.1 750.5,516.3 751.0,516.6 751.5,517.0 752.0,517.4 752.5,517.8 753.0,518.2 753.5,518.6 754.0,518.9 754.5,519.3 755.0,519.7 755.5,520.1 756.0,520.5 756.5,520.9 757.0,521.2 757.5,521.6 758.0,522.0 758.5,522.0 759.0,522.0 759.5,522.0 760.0,522.0 760.5,522.0 761.0,522.0 761.5,522.0 762.0,522.0 762.5,522.0 763.0,522.0 763.5,522.0 764.0,522.0 764.5,522.0 765.0,522.0 765.5,522.0 766.0,522.0 766.5,522.0 767.0,522.0 767.5,522.0 768.0,522.0 768.5,522.0 769.0,522.0 769.5,522.0 770.0,522.0 770.5,522.0 771.0,522.0 771.5,522.0 772.0,522.0 772.5,522.0 773.0,522.0 773.5,522.0 774.0,522.0 774.5,522.0 775.0,522.0 775.5,522.0 776.0,522.0 776.5,522.0 777.0,522.0 777.5,522.0 778.0,522.0 778.5,522.0 779.0,522.0 779.5,522.0 780.0,522.0 780.5,522.0 781.0,522.0 781.5,522.4 782.0,522.7 782.5,523.1 783.0,523.4 783.5,523.8 784.0,524.1 784.5,524.5 785.0,524.9 785.5,525.2 786.0,525.6 786.5,525.9 787.0,526.3 787.5,526.6 788.0,527.0 788.5,527.3 789.0,527.7 789.5,528.1 790.0,528.5 790.5,529.0 791.0,529.5 791.5,530.0 792.0,530.5 792.5,531.0 793.0,531.5 793.5,531.9 794.0,532.4 794.5,532.9 795.0,533.4 795.5,533.9 796.0,534.4 796.5,535.6 797.0,537.8 797.5,540.0 798.0,542.2 798.5,544.4 799.0,546.6 799.0,546.5 798.5,545.9 798.0,545.4 797.5,544.8 797.0,544.3 796.5,543.7 796.0,543.3 795.5,543.0 795.0,542.6 794.5,542.3 794.0,542.0 793.5,541.6 793.0,541.3 792.5,541.0 792.0,540.6 791.5,540.3 791.0,540.0 790.5,539.6 790.0,539.3 789.5,539.1 789.0,539.1 788.5,539.1 788.0,539.1 787.5,539.1 787.0,539.1 786.5,539.1 786.0,539.1 785.5,539.1 785.0,539.1 784.5,539.1 784.0,539.1 783.5,539.2 783.0,539.2 782.5,539.2 782.0,539.2 781.5,539.2 781.0,539.2 780.5,539.2 780.0,539.2 779.5,539.2 779.0,539.2 778.5,539.2 778.0,539.2 777.5,539.2 777.0,539.2 776.5,539.2 776.0,539.2 775.5,539.2 775.0,539.2 774.5,539.2 774.0,539.2 773.5,539.2 773.0,539.2 772.5,539.2 772.0,539.2 771.5,539.3 771.0,539.3 770.5,539.3 770.0,539.3 769.5,539.3 769.0,539.3 768.5,539.3 768.0,539.3 767.5,539.3 767.0,539.3 766.5,539.3 766.0,539.3 765.5,539.3 765.0,539.3 764.5,539.3 764.0,539.3 763.5,539.3 763.0,539.3 762.5,539.3 762.0,539.3 761.5,539.3 761.0,539.3 760.5,539.3 760.0,539.3 759.5,539.4 759.0,539.4 758.5,539.4 758.0,539.4 757.5,539.4 757.0,539.4 756.5,539.4 756.0,539.4 755.5,539.4 755.0,539.4 754.5,539.4 754.0,539.4 753.5,539.4 753.0,539.4 752.5,539.4 752.0,539.4 751.5,539.4 751.0,539.4 750.5,539.4 750.0,539.4 749.5,539.4 749.0,539.4 748.5,539.4 748.0,539.4 747.5,539.5 747.0,539.5 746.5,539.5 746.0,539.5 745.5,539.5 745.0,539.5 744.5,539.5 744.0,539.5 743.5,539.5 743.0,539.5 742.5,539.5 742.0,539.5 741.5,539.5 741.0,539.5 740.5,539.5 740.0,539.5 739.5,539.5 739.0,539.5 738.5,539.6 738.0,539.6 737.5,539.6 737.0,539.6 736.5,539.6 736.0,539.6 735.5,539.6 735.0,539.6 734.5,539.6 734.0,539.6 733.5,539.6 733.0,539.6 732.5,539.6 732.0,539.7 731.5,539.7 731.0,539.7 730.5,539.7 730.0,539.7 729.5,539.7 729.0,539.7 728.5,539.7 728.0,539.7 727.5,539.7 727.0,539.7 726.5,539.7 726.0,539.8 725.5,539.8 725.0,539.8 724.5,539.8 724.0,539.8 723.5,539.8 723.0,539.8 722.5,539.8 722.0,539.8 721.5,539.8 721.0,539.8 720.5,539.8 720.0,539.8 719.5,539.9 719.0,539.9 718.5,539.9 718.0,539.9 717.5,539.9 717.0,539.9 716.5,539.9 716.0,539.9 715.5,539.9 715.0,539.9 714.5,539.9 714.0,539.9 713.5,539.9 713.0,540.0 712.5,540.0 712.0,540.0 711.5,540.0 711.0,540.0 710.5,540.0 710.0,540.0 709.5,540.0 709.0,540.0 708.5,540.0 708.0,540.0 707.5,540.0 707.0,540.0 706.5,540.1 706.0,540.1 705.5,540.1 705.0,540.1 704.5,540.1 704.0,540.1 703.5,540.1 703.0,540.1 702.5,540.1 702.0,540.1 701.5,540.1 701.0,540.1 700.5,540.1 700.0,540.2 699.5,540.2 699.0,540.2 698.5,540.2 698.0,540.2 697.5,540.2 697.0,540.9 696.5,542.0 696.0,543.1 695.5,544.2 695.0,545.3 694.5,546.4 694.0,547.5 693.5,548.6 693.0,549.6 692.5,550.7 692.0,551.8 691.5,552.9 691.0,554.0 690.5,555.1 690.0,556.2 689.5,557.3 689.0,558.0 688.5,558.0 688.0,558.0 687.5,558.0 687.0,558.0 686.5,558.0 686.0,558.0 685.5,558.0 685.0,558.0 684.5,558.0 684.0,558.0 683.5,558.0 683.0,558.0 682.5,558.0 682.0,558.0 681.5,558.0 681.0,558.0 680.5,558.0 680.0,558.0 679.5,558.0 679.0,558.0 678.5,558.0 678.0,558.0 677.5,558.0 677.0,558.0 676.5,558.0 676.0,558.0 675.5,558.0 675.0,558.0 674.5,558.0 674.0,558.0 673.5,558.0 673.0,558.0 672.5,558.0 672.0,558.0 671.5,558.0 671.0,558.0 670.5,558.0 670.0,558.0 669.5,558.0 669.0,558.0 668.5,558.0 668.0,558.0 667.5,558.0 667.0,558.0 666.5,558.0 666.0,558.0 665.5,558.0 665.0,558.0 664.5,558.0 664.0,558.0 663.5,558.0 663.0,558.0 662.5,558.0 662.0,558.0 661.5,558.0 661.0,558.0 660.5,558.0 660.0,558.0 659.5,558.0 659.0,558.0 658.5,558.0 658.0,558.0 657.5,558.0 657.0,558.0 656.5,558.0 656.0,558.0 655.5,558.0 655.0,558.0 654.5,558.0 654.0,558.0 653.5,558.0 653.0,558.0 652.5,558.0 652.0,558.0 651.5,558.0 651.0,558.0 650.5,558.0 650.0,558.0 649.5,558.0 649.0,558.0 648.5,558.0 648.0,558.0 647.5,558.0 647.0,558.0 646.5,558.0 646.0,558.0 645.5,558.0 645.0,558.0 644.5,558.0 644.0,558.0 643.5,558.0 643.0,558.0 642.5,558.0 642.0,558.0 641.5,558.1 641.0,558.2 640.5,558.2 640.0,558.3 639.5,558.4 639.0,558.5 638.5,558.6 638.0,558.6 637.5,558.7 637.0,558.8 636.5,558.9 636.0,559.0 635.5,559.0 635.0,559.3 634.5,560.2 634.0,561.1 633.5,562.1 633.0,563.0 632.5,563.9 632.0,564.9 631.5,565.8 631.0,566.7 630.5,567.7 630.0,568.6 629.5,569.5 629.0,570.4 628.5,571.4 628.0,572.3 627.5,573.2 627.0,574.2 626.5,575.1 626.0,576.0 625.5,576.6 625.0,577.0 624.5,577.3 624.0,577.7 623.5,578.1 623.0,578.4 622.5,578.8 622.0,579.1 621.5,579.5 621.0,579.9 620.5,580.2 620.0,580.6 619.5,581.0 619.0,581.3 618.5,581.7 618.0,582.0 617.5,582.4 617.0,582.8 616.5,583.1 616.0,583.5 615.5,583.8 615.0,584.2 614.5,584.6 614.0,584.9 613.5,585.3 613.0,585.6 612.5,586.0 612.0,586.3 611.5,586.3 611.0,586.3 610.5,586.3 610.0,586.3 609.5,586.3 609.0,586.3 608.5,586.3 608.0,586.3 607.5,586.3 607.0,586.3 606.5,586.3 606.0,586.3 605.5,586.3 605.0,586.3 604.5,586.3 604.0,586.3 603.5,586.3 603.0,586.3 602.5,586.3 602.0,586.3 601.5,586.2 601.0,586.2 600.5,586.2 600.0,586.2 599.5,586.2 599.0,586.2 598.5,586.2 598.0,586.2 597.5,586.2 597.0,586.2 596.5,586.2 596.0,586.2 595.5,586.2 595.0,586.2 594.5,586.2 594.0,586.2 593.5,586.2 593.0,586.2 592.5,586.2 592.0,586.2 591.5,586.2 591.0,586.2 590.5,586.2 590.0,586.2 589.5,586.2 589.0,586.2 588.5,586.2 588.0,586.2 587.5,586.2 587.0,586.2 586.5,586.2 586.0,586.2 585.5,586.2 585.0,586.2 584.5,586.2 584.0,586.2 583.5,586.2 583.0,586.2 582.5,586.2 582.0,586.2 581.5,586.1 581.0,586.1 580.5,586.1 580.0,586.1 579.5,586.1 579.0,586.1 578.5,586.1 578.0,586.1 577.5,586.1 577.0,586.1 576.5,586.1 576.0,586.1 575.5,586.1 575.0,586.1 574.5,586.1 574.0,586.1 573.5,586.1 573.0,586.1 572.5,586.1 572.0,586.1 571.5,586.1 571.0,586.1 570.5,586.1 570.0,586.1 569.5,586.1 569.0,586.1 568.5,586.1 568.0,586.1 567.5,586.1 567.0,586.1 566.5,586.1 566.0,586.1 565.5,586.1 565.0,586.1 564.5,586.1 564.0,586.1 563.5,586.1 563.0,586.1 562.5,586.1 562.0,586.1 561.5,586.1 561.0,586.0 560.5,586.0 560.0,586.0 559.5,586.0 559.0,586.0 558.5,586.0 558.0,586.0 557.5,586.0 557.0,586.0 556.5,586.0 556.0,586.0 555.5,586.0 555.0,586.0 554.5,586.0 554.0,586.0 553.5,586.0 553.0,586.0 552.5,586.0 552.0,586.0 551.5,586.0 551.0,586.0 550.5,586.1 550.0,586.2 549.5,586.3 549.0,586.4 548.5,586.5 548.0,586.5 547.5,586.6 547.0,586.7 546.5,586.8 546.0,586.9 545.5,587.0 545.0,587.1 544.5,587.4 544.0,588.0 543.5,588.7 543.0,589.4 542.5,590.0 542.0,590.7 541.5,591.4 541.0,592.1 540.5,592.7 540.0,593.4 539.5,594.1 539.0,594.7 538.5,595.4 538.0,595.8 537.5,595.8 537.0,595.8 536.5,595.8 536.0,595.8 535.5,595.8 535.0,595.8 534.5,595.8 534.0,595.8 533.5,595.8 533.0,595.8 532.5,595.8 532.0,595.8 531.5,595.8 531.0,595.8 530.5,595.8 530.0,595.8 529.5,595.8 529.0,595.8 528.5,595.8 528.0,595.8 527.5,595.8 527.0,595.8 526.5,595.8 526.0,595.8 525.5,595.8 525.0,595.8 524.5,595.8 524.0,595.8 523.5,595.8 523.0,595.8 522.5,595.8 522.0,595.8 521.5,595.8 521.0,595.8 520.5,595.8 520.0,595.8 519.5,595.8 519.0,595.8 518.5,595.8 518.0,595.8 517.5,595.8 517.0,595.8 516.5,595.8 516.0,595.8 515.5,595.8 515.0,595.8 514.5,595.8 514.0,595.8 513.5,595.8 513.0,595.8 512.5,595.8 512.0,595.8 511.5,595.8 511.0,595.8 510.5,595.8 510.0,595.9 509.5,595.9 509.0,595.9 508.5,595.9 508.0,595.9 507.5,595.9 507.0,595.9 506.5,595.9 506.0,595.9 505.5,595.9 505.0,595.9 504.5,595.9 504.0,595.9 503.5,595.9 503.0,595.9 502.5,595.9 502.0,595.9 501.5,595.9 501.0,595.9 500.5,595.9 500.0,595.9 499.5,595.9 499.0,595.9 498.5,595.9 498.0,595.9 497.5,595.9 497.0,595.9 496.5,595.9 496.0,595.9 495.5,595.9 495.0,595.9 494.5,595.9 494.0,595.9 493.5,595.9 493.0,595.9 492.5,595.9 492.0,595.9 491.5,595.9 491.0,595.9 490.5,595.9 490.0,595.9 489.5,595.9 489.0,595.9 488.5,595.9 488.0,595.9 487.5,595.9 487.0,595.9 486.5,595.9 486.0,595.9 485.5,595.9 485.0,595.9 484.5,595.9 484.0,595.9 483.5,595.9 483.0,595.9 482.5,595.9 482.0,595.9 481.5,595.9 481.0,595.9 480.5,595.9 480.0,595.9 479.5,595.9 479.0,595.9 478.5,595.9 478.0,595.9 477.5,595.9 477.0,595.9 476.5,595.9 476.0,595.9 475.5,595.9 475.0,595.9 474.5,595.9 474.0,595.9 473.5,595.9 473.0,595.9 472.5,595.9 472.0,595.9 471.5,595.9 471.0,595.9 470.5,595.9 470.0,595.9 469.5,595.9 469.0,595.9 468.5,595.9 468.0,595.9 467.5,595.9 467.0,595.9 466.5,595.9 466.0,595.9 465.5,595.9 465.0,595.9 464.5,595.9 464.0,595.9 463.5,595.9 463.0,595.9 462.5,595.9 462.0,595.9 461.5,595.9 461.0,595.9 460.5,595.9 460.0,595.9 459.5,595.9 459.0,595.9 458.5,595.9 458.0,595.9 457.5,595.9 457.0,595.9 456.5,595.9 456.0,595.9 455.5,595.9 455.0,595.9 454.5,595.9 454.0,596.0 453.5,596.0 453.0,596.0 452.5,596.0 452.0,596.0 451.5,596.0 451.0,596.0 450.5,596.0 450.0,596.0 449.5,596.0 449.0,596.0 448.5,596.0 448.0,596.0 447.5,596.0 447.0,596.0 446.5,596.0 446.0,596.0 445.5,596.0 445.0,596.0 444.5,596.0 444.0,596.0 443.5,596.0 443.0,596.0 442.5,596.0 442.0,596.0 441.5,596.0 441.0,596.0 440.5,596.0 440.0,596.0 439.5,596.0 439.0,596.0 438.5,596.0 438.0,596.0 437.5,596.0 437.0,596.0 436.5,596.0 436.0,596.0 435.5,596.0 435.0,596.0 434.5,596.0 434.0,596.0 433.5,596.0 433.0,596.0 432.5,596.0 432.0,596.0 431.5,596.0 431.0,596.0 430.5,596.0 430.0,596.0 429.5,596.0 429.0,596.0 428.5,596.0 428.0,596.0 427.5,596.0 427.0,596.0 426.5,596.0 426.0,596.0 425.5,596.0 425.0,596.0 424.5,596.0 424.0,596.0 423.5,596.0 423.0,596.0 422.5,596.0 422.0,596.0 421.5,596.0 421.0,596.0 420.5,596.0 420.0,596.0 419.5,596.0 419.0,596.0 418.5,596.0 418.0,596.0 417.5,596.0 417.0,596.0 416.5,596.0 416.0,596.0 415.5,596.0 415.0,596.0 414.5,596.0 414.0,596.0 413.5,596.0 413.0,596.0 412.5,596.0 412.0,596.0 411.5,596.0 411.0,596.0 410.5,596.0 410.0,596.0 409.5,596.0 409.0,596.0 408.5,596.0 408.0,596.0 407.5,596.0 407.0,596.0 406.5,596.0 406.0,596.0 405.5,596.0 405.0,596.0 404.5,596.0 404.0,596.0 403.5,596.0 403.0,596.0 402.5,596.0 402.0,596.0 401.5,596.0 401.0,596.0 400.5,596.0 400.0,596.0 399.5,596.0 399.0,596.0 398.5,596.0 398.0,596.1 397.5,596.1 397.0,596.1 396.5,596.1 396.0,596.1 395.5,596.1 395.0,596.1 394.5,596.1 394.0,596.1 393.5,596.1 393.0,596.1 392.5,596.1 392.0,596.1 391.5,596.1 391.0,596.1 390.5,596.1 390.0,596.1 389.5,596.1 389.0,596.1 388.5,596.1 388.0,596.1 387.5,596.1 387.0,596.1 386.5,596.1 386.0,596.1 385.5,596.1 385.0,596.1 384.5,596.1 384.0,596.1 383.5,596.1 383.0,596.1 382.5,596.1 382.0,596.1 381.5,596.1 381.0,596.1 380.5,596.1 380.0,596.1 379.5,596.1 379.0,596.1 378.5,596.1 378.0,596.1 377.5,596.1 377.0,596.1 376.5,596.1 376.0,596.1 375.5,596.1 375.0,596.1 374.5,596.1 374.0,596.1 373.5,596.1 373.0,596.1 372.5,596.1 372.0,596.1 371.5,596.1 371.0,596.1 370.5,596.1 370.0,596.1 369.5,596.1 369.0,596.1 368.5,596.1 368.0,596.1 367.5,596.1 367.0,596.1 366.5,596.1 366.0,596.1 365.5,596.1 365.0,596.1 364.5,596.1 364.0,596.1 363.5,596.1 363.0,596.1 362.5,596.1 362.0,596.1 361.5,596.1 361.0,596.1 360.5,596.1 360.0,596.1 359.5,596.1 359.0,596.1 358.5,596.1 358.0,596.1 357.5,596.1 357.0,596.1 356.5,596.1 356.0,596.1 355.5,596.1 355.0,596.1 354.5,596.1 354.0,596.1 353.5,596.1 353.0,596.1 352.5,596.1 352.0,596.1 351.5,596.1 351.0,596.1 350.5,596.1 350.0,596.1 349.5,596.1 349.0,596.1 348.5,596.1 348.0,596.1 347.5,596.1 347.0,596.1 346.5,596.1 346.0,596.1 345.5,596.2 345.0,596.2 344.5,596.2 344.0,596.2 343.5,596.2 343.0,596.2 342.5,596.2 342.0,596.2 341.5,596.2 341.0,596.2 340.5,596.2 340.0,596.2 339.5,596.2 339.0,596.2 338.5,596.2 338.0,596.2 337.5,596.2 337.0,596.2 336.5,596.2 336.0,596.2 335.5,596.2 335.0,596.2 334.5,596.2 334.0,596.2 333.5,596.2 333.0,596.2 332.5,596.2 332.0,596.2 331.5,596.2 331.0,596.2 330.5,596.2 330.0,596.2 329.5,596.2 329.0,596.2 328.5,596.2 328.0,596.2 327.5,596.2 327.0,596.2 326.5,596.2 326.0,596.2 325.5,596.2 325.0,596.2 324.5,596.2 324.0,596.2 323.5,596.2 323.0,596.2 322.5,596.2 322.0,596.2 321.5,596.2 321.0,596.2 320.5,596.2 320.0,596.2 319.5,596.2 319.0,596.2 318.5,596.2 318.0,596.2 317.5,596.2 317.0,596.2 316.5,596.2 316.0,596.2 315.5,596.2 315.0,596.2 314.5,596.2 314.0,596.2 313.5,596.2 313.0,596.2 312.5,596.2 312.0,596.2 311.5,596.2 311.0,596.2 310.5,596.2 310.0,596.2 309.5,596.2 309.0,596.2 308.5,596.2 308.0,596.2 307.5,596.2 307.0,596.2 306.5,596.2 306.0,596.2 305.5,596.2 305.0,596.2 304.5,596.2 304.0,596.2 303.5,596.2 303.0,596.2 302.5,596.2 302.0,596.2 301.5,596.2 301.0,596.2 300.5,596.2 300.0,596.2 299.5,596.2 299.0,596.2 298.5,596.2 298.0,596.2 297.5,596.2 297.0,596.3 296.5,596.3 296.0,596.3 295.5,596.3 295.0,596.3 294.5,596.3 294.0,596.3 293.5,596.3 293.0,596.3 292.5,596.3 292.0,596.3 291.5,596.3 291.0,596.3 290.5,596.3 290.0,596.3 289.5,596.3 289.0,596.3 288.5,596.3 288.0,596.3 287.5,596.3 287.0,596.3 286.5,596.3 286.0,596.3 285.5,596.3 285.0,596.3 284.5,596.3 284.0,596.3 283.5,596.3 283.0,596.3 282.5,596.3 282.0,596.3 281.5,596.3 281.0,596.3 280.5,596.3 280.0,596.3 279.5,596.3 279.0,596.3 278.5,596.3 278.0,596.3 277.5,596.3 277.0,596.3 276.5,596.3 276.0,596.3 275.5,596.3 275.0,596.3 274.5,596.3 274.0,596.3 273.5,596.3 273.0,596.3 272.5,596.4 272.0,596.7 271.5,597.0 271.0,597.3 270.5,597.6 270.0,597.9 269.5,598.2 269.0,598.5 268.5,598.8 268.0,599.1 267.5,599.3 267.0,599.6 266.5,599.9 266.0,600.2 265.5,600.5 265.0,600.6 264.5,600.8 264.0,601.0 263.5,601.2 263.0,601.3 262.5,601.5 262.0,601.7 261.5,601.9 261.0,602.0 260.5,602.2 260.0,602.4 259.5,602.6 259.0,602.7" fill="#cde4f0"/>
<polygon points="799.0,546.6 799.5,548.8 800.0,551.0 800.5,552.4 801.0,553.7 801.5,555.0 802.0,556.4 802.5,559.3 803.0,562.1 803.5,565.0 804.0,567.8 804.5,570.1 805.0,570.1 805.5,570.1 806.0,570.1 806.5,570.1 807.0,570.1 807.5,570.1 808.0,570.1 808.5,570.1 809.0,570.1 809.5,570.1 810.0,570.1 810.5,570.1 811.0,570.1 811.5,570.1 812.0,570.1 812.5,570.1 813.0,570.1 813.5,570.1 814.0,570.1 814.5,570.1 815.0,570.1 815.5,570.1 816.0,570.1 816.5,570.2 817.0,570.4 817.5,570.6 818.0,570.8 818.5,571.0 819.0,571.3 819.5,571.5 820.0,571.7 820.5,571.9 821.0,572.1 821.5,572.3 822.0,572.5 822.5,572.7 823.0,572.9 823.5,573.1 824.0,573.3 824.5,573.4 825.0,573.6 825.5,573.7 826.0,573.9 826.5,574.1 827.0,574.2 827.5,574.4 828.0,574.5 828.5,574.7 829.0,574.9 829.5,575.0 830.0,575.1 830.5,575.2 831.0,575.3 831.5,575.4 832.0,575.5 832.5,575.6 833.0,575.7 833.5,575.8 834.0,575.9 834.5,576.0 835.0,576.1 835.5,576.2 836.0,576.3 836.5,576.4 837.0,576.6 837.5,576.7 838.0,576.8 838.5,576.9 839.0,577.0 839.5,577.2 840.0,577.5 840.5,577.8 841.0,578.2 841.5,578.5 842.0,578.8 842.5,579.2 843.0,579.5 843.5,579.8 844.0,580.1 844.5,580.5 845.0,580.8 845.5,581.1 846.0,581.4 846.5,581.8 847.0,582.1 847.5,582.4 848.0,582.7 848.5,583.1 849.0,583.4 849.5,583.8 850.0,584.2 850.5,584.6 851.0,585.1 851.5,585.5 852.0,585.9 852.5,586.3 853.0,586.7 853.5,587.1 854.0,587.5 854.5,588.0 855.0,588.4 855.5,588.8 856.0,589.2 856.5,589.6 857.0,590.0 857.5,590.5 858.0,590.8 858.5,591.2 859.0,591.5 859.5,591.8 860.0,592.1 860.5,592.4 861.0,592.8 861.5,593.1 862.0,593.4 862.5,593.7 863.0,594.1 863.5,594.4 864.0,594.7 864.5,595.0 865.0,595.2 865.5,595.3 866.0,595.5 866.5,595.6 867.0,595.7 867.5,595.8 868.0,596.0 868.5,596.1 869.0,596.2 869.5,596.3 870.0,596.5 870.5,596.6 871.0,596.6 871.5,596.6 872.0,596.6 872.5,596.6 873.0,596.6 873.5,596.6 874.0,596.6 874.5,596.6 875.0,596.6 875.5,596.6 876.0,596.6 876.5,596.6 877.0,596.6 877.5,596.6 878.0,596.6 878.5,596.6 879.0,596.6 879.5,596.6 880.0,596.6 880.5,596.6 881.0,596.6 881.5,596.6 882.0,596.6 882.5,596.6 883.0,596.6 883.5,596.7 884.0,596.9 884.5,597.1 885.0,597.3 885.5,597.5 886.0,597.7 886.5,597.9 887.0,598.1 887.5,598.3 888.0,598.5 888.5,598.3 889.0,598.1 889.5,597.9 890.0,597.7 890.5,597.5 891.0,597.3 891.5,597.1 892.0,596.9 892.5,596.7 893.0,596.5 893.5,596.3 894.0,596.1 894.5,595.9 895.0,595.7 895.5,595.5 896.0,595.3 896.5,595.1 897.0,594.9 897.5,594.7 898.0,594.5 898.5,594.3 899.0,594.1 899.5,593.9 900.0,593.7 900.5,593.5 901.0,593.3 901.5,593.1 902.0,592.9 902.5,592.7 903.0,592.5 903.5,592.3 904.0,592.2 904.5,592.3 905.0,592.3 905.5,592.3 906.0,592.4 906.5,592.4 907.0,592.5 907.5,592.5 908.0,592.6 908.5,592.6 909.0,592.6 909.5,592.7 910.0,592.7 910.5,592.8 911.0,592.8 911.5,592.8 912.0,592.9 912.5,592.9 913.0,593.0 913.5,593.0 914.0,593.1 914.5,593.1 915.0,593.1 915.5,593.2 916.0,593.2 916.5,593.3 917.0,593.3 917.5,593.4 918.0,593.4 918.5,593.4 919.0,593.5 919.5,593.5 920.0,593.6 920.5,593.6 921.0,593.9 921.5,594.1 922.0,594.3 922.5,594.6 923.0,594.8 923.5,595.0 924.0,595.2 924.5,595.5 925.0,595.7 925.5,595.9 926.0,596.2 926.5,596.4 927.0,596.6 927.5,596.8 928.0,597.1 928.5,597.3 929.0,597.5 929.5,597.7 930.0,598.0 930.5,598.2 931.0,598.4 931.5,598.7 932.0,598.9 932.5,599.1 933.0,599.3 933.5,599.6 934.0,599.8 934.5,600.0 935.0,600.3 935.5,600.2 936.0,600.1 936.5,599.9 937.0,599.8 937.5,599.7 938.0,599.5 938.5,599.4 939.0,599.3 939.5,599.1 940.0,599.0 940.5,598.9 941.0,598.7 941.5,598.6 942.0,598.4 942.5,598.3 943.0,598.2 943.5,598.0 944.0,597.9 944.5,597.8 945.0,597.6 945.5,597.5 946.0,597.3 946.5,597.2 947.0,597.1 947.5,596.9 948.0,596.8 948.5,596.6 949.0,596.5 949.5,596.4 950.0,596.2 950.5,596.1 951.0,596.0 951.5,595.8 952.0,595.7 952.5,595.5 953.0,595.4 953.5,595.3 954.0,595.1 954.5,594.9 955.0,594.7 955.5,594.5 956.0,594.3 956.5,594.1 957.0,593.8 957.5,593.6 958.0,593.4 958.5,593.2 959.0,593.0 959.5,592.8 960.0,592.6 960.5,592.3 961.0,592.1 961.5,591.9 962.0,591.7 962.5,591.5 963.0,591.3 963.5,591.0 964.0,590.8 964.5,590.6 965.0,590.4 965.5,590.2 966.0,590.0 966.5,589.8 967.0,589.5 967.5,589.3 968.0,589.1 968.5,588.9 969.0,588.7 969.5,588.5 970.0,588.2 970.5,588.0 971.0,587.7 971.5,587.5 972.0,587.2 972.5,587.0 973.0,586.7 973.5,586.5 974.0,586.2 974.5,586.0 975.0,585.7 975.5,585.5 976.0,585.2 976.5,585.0 977.0,584.8 977.5,584.5 978.0,584.3 978.5,584.0 979.0,583.8 979.5,583.5 980.0,583.3 980.5,583.0 981.0,582.8 981.5,582.5 982.0,582.3 982.5,582.0 983.0,581.9 983.5,581.9 984.0,581.8 984.5,581.7 985.0,581.6 985.5,581.5 986.0,581.4 986.5,581.4 987.0,581.3 987.5,581.2 988.0,581.1 988.5,581.0 989.0,580.9 989.5,580.9 990.0,580.8 990.5,580.7 991.0,580.6 991.5,580.5 992.0,580.4 992.5,580.4 993.0,580.3 993.5,580.2 994.0,580.1 994.5,580.0 995.0,579.9 995.5,579.9 996.0,579.8 996.5,579.7 997.0,579.6 997.5,579.5 998.0,579.4 998.5,579.4 999.0,579.3 999.5,579.2 1000.0,579.1 1000.5,579.0 1001.0,578.9 1001.5,578.8 1002.0,578.8 1002.5,578.7 1003.0,578.6 1003.5,578.5 1004.0,578.4 1004.5,578.3 1005.0,578.2 1005.5,578.1 1006.0,578.1 1006.5,578.0 1007.0,577.9 1007.5,577.8 1008.0,577.7 1008.5,577.6 1009.0,577.5 1009.5,577.4 1010.0,577.4 1010.5,577.3 1011.0,577.2 1011.5,577.1 1012.0,577.0 1012.5,576.9 1013.0,576.8 1013.5,576.7 1014.0,576.6 1014.5,576.6 1015.0,576.5 1015.5,576.4 1016.0,576.3 1016.5,576.2 1017.0,576.1 1017.5,576.0 1018.0,576.0 1018.5,575.9 1019.0,575.8 1019.5,575.7 1020.0,575.6 1020.5,575.2 1021.0,574.8 1021.5,574.3 1022.0,573.9 1022.5,573.5 1023.0,573.1 1023.5,572.7 1024.0,572.2 1024.5,571.8 1025.0,571.4 1025.5,571.0 1026.0,570.6 1026.5,570.3 1027.0,570.0 1027.5,569.8 1028.0,569.6 1028.5,569.4 1029.0,569.1 1029.5,568.9 1030.0,568.7 1030.5,568.4 1031.0,568.2 1031.5,568.0 1032.0,567.8 1032.5,567.5 1033.0,567.3 1033.5,567.1 1034.0,566.8 1034.5,566.6 1035.0,566.4 1035.5,566.2 1036.0,565.9 1036.5,565.7 1037.0,565.5 1037.5,565.3 1038.0,565.0 1038.5,564.8 1039.0,564.6 1039.5,564.3 1040.0,564.1 1040.5,563.9 1041.0,563.8 1041.5,563.8 1042.0,563.8 1042.5,563.8 1043.0,563.8 1043.0,563.8 1042.5,563.3 1042.0,563.0 1041.5,562.7 1041.0,562.4 1040.5,562.1 1040.0,561.8 1039.5,561.5 1039.0,561.1 1038.5,560.8 1038.0,560.5 1037.5,560.2 1037.0,559.9 1036.5,559.6 1036.0,559.3 1035.5,559.0 1035.0,558.7 1034.5,558.4 1034.0,558.0 1033.5,557.7 1033.0,557.4 1032.5,557.2 1032.0,557.1 1031.5,557.0 1031.0,556.9 1030.5,556.8 1030.0,556.7 1029.5,556.6 1029.0,556.5 1028.5,556.4 1028.0,556.4 1027.5,556.4 1027.0,556.4 1026.5,556.4 1026.0,556.4 1025.5,556.4 1025.0,556.4 1024.5,556.4 1024.0,556.4 1023.5,556.4 1023.0,556.4 1022.5,556.4 1022.0,556.4 1021.5,556.4 1021.0,556.4 1020.5,556.4 1020.0,556.4 1019.5,556.4 1019.0,556.4 1018.5,556.4 1018.0,556.4 1017.5,556.4 1017.0,556.4 1016.5,556.4 1016.0,556.4 1015.5,556.4 1015.0,556.4 1014.5,556.4 1014.0,556.4 1013.5,556.4 1013.0,556.4 1012.5,556.4 1012.0,556.4 1011.5,556.4 1011.0,556.4 1010.5,556.4 1010.0,556.4 1009.5,556.4 1009.0,556.4 1008.5,556.4 1008.0,556.3 1007.5,556.3 1007.0,556.3 1006.5,556.3 1006.0,556.3 1005.5,556.3 1005.0,556.3 1004.5,556.3 1004.0,556.3 1003.5,556.3 1003.0,556.3 1002.5,556.3 1002.0,556.3 1001.5,556.3 1001.0,556.3 1000.5,556.3 1000.0,556.3 999.5,556.3 999.0,556.3 998.5,556.3 998.0,556.3 997.5,556.3 997.0,556.3 996.5,556.3 996.0,556.3 995.5,556.3 995.0,556.3 994.5,556.3 994.0,556.3 993.5,556.3 993.0,556.3 992.5,556.3 992.0,556.3 991.5,556.3 991.0,556.3 990.5,556.3 990.0,556.3 989.5,556.3 989.0,556.3 988.5,556.3 988.0,556.3 987.5,556.3 987.0,556.3 986.5,556.3 986.0,556.3 985.5,556.3 985.0,556.3 984.5,556.3 984.0,556.3 983.5,556.3 983.0,556.3 982.5,556.3 982.0,556.3 981.5,556.3 981.0,556.3 980.5,556.3 980.0,556.3 979.5,556.3 979.0,556.3 978.5,556.3 978.0,556.3 977.5,556.3 977.0,556.3 976.5,556.3 976.0,556.3 975.5,556.3 975.0,556.3 974.5,556.3 974.0,556.3 973.5,556.3 973.0,556.3 972.5,556.3 972.0,556.3 971.5,556.3 971.0,556.3 970.5,556.3 970.0,556.3 969.5,556.3 969.0,556.3 968.5,556.3 968.0,556.3 967.5,556.2 967.0,556.2 966.5,556.2 966.0,556.2 965.5,556.2 965.0,556.2 964.5,556.2 964.0,556.2 963.5,556.2 963.0,556.2 962.5,556.2 962.0,556.2 961.5,556.2 961.0,556.2 960.5,556.2 960.0,556.2 959.5,556.2 959.0,556.2 958.5,556.2 958.0,556.2 957.5,556.2 957.0,556.2 956.5,556.2 956.0,556.2 955.5,556.2 955.0,556.2 954.5,556.2 954.0,556.2 953.5,556.2 953.0,556.2 952.5,556.2 952.0,556.2 951.5,556.2 951.0,556.2 950.5,556.2 950.0,556.2 949.5,556.2 949.0,556.2 948.5,556.2 948.0,556.2 947.5,556.2 947.0,556.2 946.5,556.2 946.0,556.2 945.5,556.2 945.0,556.2 944.5,556.2 944.0,556.2 943.5,556.2 943.0,556.2 942.5,556.2 942.0,556.2 941.5,556.2 941.0,556.2 940.5,556.2 940.0,556.2 939.5,556.2 939.0,556.2 938.5,556.2 938.0,556.2 937.5,556.2 937.0,556.2 936.5,556.2 936.0,556.2 935.5,556.2 935.0,556.2 934.5,556.2 934.0,556.2 933.5,556.2 933.0,556.2 932.5,556.2 932.0,556.2 931.5,556.2 931.0,556.2 930.5,556.2 930.0,556.2 929.5,556.2 929.0,556.2 928.5,556.2 928.0,556.2 927.5,556.1 927.0,556.1 926.5,556.1 926.0,556.1 925.5,556.1 925.0,556.1 924.5,556.1 924.0,556.1 923.5,556.1 923.0,556.1 922.5,556.1 922.0,556.1 921.5,556.1 921.0,556.1 920.5,556.1 920.0,556.1 919.5,556.1 919.0,556.1 918.5,556.1 918.0,556.1 917.5,556.1 917.0,556.1 916.5,556.1 916.0,556.1 915.5,556.1 915.0,556.1 914.5,556.1 914.0,556.1 913.5,556.1 913.0,556.1 912.5,556.1 912.0,556.1 911.5,556.1 911.0,556.1 910.5,556.1 910.0,556.1 909.5,556.1 909.0,556.1 908.5,556.1 908.0,556.1 907.5,556.1 907.0,556.1 906.5,556.1 906.0,556.1 905.5,556.1 905.0,556.1 904.5,556.1 904.0,556.1 903.5,556.1 903.0,556.1 902.5,556.1 902.0,556.1 901.5,556.1 901.0,556.1 900.5,556.1 900.0,556.1 899.5,556.1 899.0,556.1 898.5,556.1 898.0,556.1 897.5,556.1 897.0,556.1 896.5,556.1 896.0,556.1 895.5,556.1 895.0,556.1 894.5,556.1 894.0,556.1 893.5,556.1 893.0,556.1 892.5,556.1 892.0,556.1 891.5,556.1 891.0,556.1 890.5,556.1 890.0,556.1 889.5,556.1 889.0,556.1 888.5,556.1 888.0,556.1 887.5,556.1 887.0,556.0 886.5,556.0 886.0,556.0 885.5,556.0 885.0,556.0 884.5,556.0 884.0,556.0 883.5,556.0 883.0,556.0 882.5,556.0 882.0,556.0 881.5,556.0 881.0,556.0 880.5,556.0 880.0,556.0 879.5,556.0 879.0,556.0 878.5,556.0 878.0,556.0 877.5,556.0 877.0,556.0 876.5,556.0 876.0,556.0 875.5,556.0 875.0,556.0 874.5,556.0 874.0,556.0 873.5,556.0 873.0,556.0 872.5,556.0 872.0,556.0 871.5,556.0 871.0,556.0 870.5,556.0 870.0,556.0 869.5,556.0 869.0,556.0 868.5,556.0 868.0,556.0 867.5,556.0 867.0,556.0 866.5,556.0 866.0,556.0 865.5,556.0 865.0,556.0 864.5,556.0 864.0,556.0 863.5,556.0 863.0,556.0 862.5,556.0 862.0,556.0 861.5,556.0 861.0,556.0 860.5,556.0 860.0,556.0 859.5,556.0 859.0,556.0 858.5,556.0 858.0,556.0 857.5,556.0 857.0,556.0 856.5,556.0 856.0,556.0 855.5,556.0 855.0,556.0 854.5,556.0 854.0,556.0 853.5,556.0 853.0,556.0 852.5,556.0 852.0,556.0 851.5,556.0 851.0,556.0 850.5,556.0 850.0,556.0 849.5,556.0 849.0,556.0 848.5,556.0 848.0,556.0 847.5,556.0 847.0,556.0 846.5,555.9 846.0,555.9 845.5,555.9 845.0,555.9 844.5,555.9 844.0,555.9 843.5,555.9 843.0,555.9 842.5,555.9 842.0,555.9 841.5,555.9 841.0,555.9 840.5,555.9 840.0,555.9 839.5,555.9 839.0,555.9 838.5,555.9 838.0,555.9 837.5,555.9 837.0,555.9 836.5,555.9 836.0,555.9 835.5,555.9 835.0,555.9 834.5,555.9 834.0,555.9 833.5,555.9 833.0,555.9 832.5,555.9 832.0,555.9 831.5,555.9 831.0,555.9 830.5,555.9 830.0,555.9 829.5,555.9 829.0,555.9 828.5,555.9 828.0,555.9 827.5,555.9 827.0,555.9 826.5,555.9 826.0,555.8 825.5,555.8 825.0,555.7 824.5,555.6 824.0,555.6 823.5,555.5 823.0,555.5 822.5,555.4 822.0,555.3 821.5,555.3 821.0,555.2 820.5,555.1 820.0,555.1 819.5,555.0 819.0,554.9 818.5,554.9 818.0,554.8 817.5,554.7 817.0,554.7 816.5,554.6 816.0,554.5 815.5,554.5 815.0,554.4 814.5,554.3 814.0,554.3 813.5,554.2 813.0,554.1 812.5,554.1 812.0,554.0 811.5,553.9 811.0,553.9 810.5,553.8 810.0,553.7 809.5,553.7 809.0,553.6 808.5,553.5 808.0,553.5 807.5,553.4 807.0,553.3 806.5,553.3 806.0,553.2 805.5,553.1 805.0,553.1 804.5,553.0 804.0,552.5 803.5,551.9 803.0,551.3 802.5,550.7 802.0,550.1 801.5,549.4 801.0,548.8 800.5,548.2 800.0,547.6 799.5,547.0 799.0,546.5" fill="#f5d8cf"/>
<polygon points="1043.0,563.8 1043.5,563.8 1044.0,563.7 1044.5,563.7 1045.0,563.7 1045.5,563.7 1046.0,563.7 1046.5,563.7 1047.0,563.7 1047.5,563.7 1048.0,563.7 1048.5,563.7 1049.0,563.7 1049.5,563.7 1050.0,563.6 1050.5,563.6 1051.0,563.6 1051.5,563.6 1052.0,563.6 1052.5,563.6 1053.0,563.6 1053.5,563.6 1054.0,563.6 1054.5,563.6 1055.0,563.6 1055.5,563.6 1056.0,563.5 1056.5,563.5 1057.0,563.5 1057.5,563.5 1058.0,563.5 1058.5,563.5 1059.0,563.4 1059.5,563.1 1060.0,562.9 1060.5,562.7 1061.0,562.4 1061.5,562.2 1062.0,562.0 1062.5,561.8 1063.0,561.5 1063.5,561.3 1064.0,561.1 1064.5,560.8 1065.0,560.6 1065.5,560.6 1066.0,560.5 1066.5,560.5 1067.0,560.5 1067.5,560.4 1068.0,560.4 1068.5,560.3 1069.0,560.3 1069.5,560.3 1070.0,560.2 1070.5,560.2 1071.0,560.2 1071.5,560.1 1072.0,560.1 1072.5,560.0 1073.0,560.0 1073.5,560.0 1074.0,559.9 1074.5,559.9 1075.0,559.9 1075.5,559.8 1076.0,559.8 1076.5,559.7 1077.0,559.7 1077.5,559.7 1078.0,559.6 1078.5,559.6 1079.0,559.6 1079.5,559.5 1080.0,559.5 1080.5,559.5 1081.0,559.4 1081.5,559.4 1082.0,559.3 1082.5,559.3 1083.0,559.3 1083.5,559.2 1084.0,559.2 1084.5,559.2 1085.0,559.1 1085.5,559.1 1086.0,559.0 1086.5,559.0 1087.0,558.9 1087.5,558.7 1088.0,558.5 1088.5,558.3 1089.0,558.1 1089.5,558.0 1090.0,557.8 1090.5,557.6 1091.0,557.4 1091.5,557.2 1092.0,557.0 1092.5,556.9 1093.0,556.7 1093.5,556.5 1094.0,556.3 1094.5,556.1 1095.0,556.0 1095.5,555.8 1096.0,555.6 1096.5,555.4 1097.0,555.2 1097.5,555.1 1098.0,554.9 1098.5,554.7 1099.0,554.5 1099.5,554.3 1100.0,554.2 1100.5,554.0 1101.0,553.8 1101.5,553.6 1102.0,553.4 1102.5,553.5 1103.0,553.7 1103.5,553.9 1104.0,554.0 1104.5,554.2 1105.0,554.4 1105.5,554.5 1106.0,554.7 1106.5,554.9 1107.0,555.0 1107.5,555.2 1108.0,555.4 1108.5,555.5 1109.0,555.7 1109.5,555.9 1110.0,556.0 1110.5,556.2 1111.0,556.4 1111.5,556.5 1112.0,556.4 1112.5,556.4 1113.0,556.3 1113.5,556.3 1114.0,556.2 1114.5,556.2 1115.0,556.2 1115.5,556.1 1116.0,556.1 1116.5,556.0 1117.0,556.0 1117.5,555.9 1118.0,555.9 1118.5,555.8 1119.0,555.8 1119.5,555.7 1120.0,555.7 1120.5,555.6 1121.0,555.6 1121.5,555.5 1122.0,555.5 1122.5,555.4 1123.0,555.4 1123.5,555.3 1124.0,555.3 1124.5,555.2 1125.0,555.2 1125.5,555.1 1126.0,555.1 1126.5,555.0 1127.0,554.9 1127.5,554.6 1128.0,554.2 1128.5,553.9 1129.0,553.6 1129.5,553.2 1130.0,552.9 1130.5,552.5 1131.0,552.2 1131.5,551.8 1132.0,551.5 1132.5,551.1 1133.0,550.8 1133.5,550.5 1134.0,550.1 1134.5,549.8 1135.0,547.7 1135.5,545.2 1136.0,542.7 1136.5,540.2 1137.0,537.7 1137.5,535.2 1138.0,532.8 1138.5,530.3 1139.0,527.8 1139.5,525.3 1140.0,522.8 1140.5,520.3 1141.0,518.8 1141.5,518.8 1142.0,518.8 1142.5,518.8 1143.0,518.8 1143.5,518.8 1144.0,518.8 1144.5,518.8 1145.0,518.8 1145.5,518.8 1146.0,518.8 1146.5,518.8 1147.0,518.8 1147.5,518.8 1148.0,518.8 1148.5,518.8 1149.0,518.8 1149.5,518.8 1150.0,518.8 1150.5,518.6 1151.0,518.4 1151.5,518.2 1152.0,518.0 1152.5,517.8 1153.0,517.6 1153.5,517.4 1154.0,517.2 1154.5,516.9 1155.0,516.7 1155.5,516.5 1156.0,516.3 1156.5,516.1 1157.0,515.9 1157.5,515.7 1158.0,515.5 1158.5,515.3 1159.0,515.1 1159.5,514.8 1160.0,514.6 1160.5,514.4 1161.0,514.2 1161.5,514.0 1162.0,513.8 1162.5,513.6 1163.0,513.4 1163.0,552.1 1162.5,552.3 1162.0,552.6 1161.5,552.8 1161.0,553.0 1160.5,553.3 1160.0,553.5 1159.5,553.7 1159.0,554.0 1158.5,554.2 1158.0,554.4 1157.5,554.7 1157.0,554.9 1156.5,555.2 1156.0,555.3 1155.5,555.3 1155.0,555.3 1154.5,555.3 1154.0,555.3 1153.5,555.3 1153.0,555.3 1152.5,555.3 1152.0,555.3 1151.5,555.3 1151.0,555.3 1150.5,555.3 1150.0,555.3 1149.5,555.3 1149.0,555.3 1148.5,555.3 1148.0,555.3 1147.5,555.3 1147.0,555.3 1146.5,555.3 1146.0,555.3 1145.5,555.3 1145.0,555.3 1144.5,555.3 1144.0,555.3 1143.5,555.3 1143.0,555.3 1142.5,555.3 1142.0,555.3 1141.5,555.3 1141.0,555.3 1140.5,556.5 1140.0,558.4 1139.5,560.3 1139.0,562.2 1138.5,564.1 1138.0,566.1 1137.5,568.0 1137.0,569.9 1136.5,571.8 1136.0,573.8 1135.5,575.7 1135.0,577.6 1134.5,579.5 1134.0,581.5 1133.5,583.4 1133.0,585.3 1132.5,585.3 1132.0,585.2 1131.5,585.2 1131.0,585.1 1130.5,585.1 1130.0,585.0 1129.5,585.0 1129.0,584.9 1128.5,584.9 1128.0,584.9 1127.5,584.8 1127.0,584.8 1126.5,584.7 1126.0,584.7 1125.5,584.6 1125.0,584.6 1124.5,584.5 1124.0,584.5 1123.5,584.5 1123.0,584.4 1122.5,584.4 1122.0,584.3 1121.5,584.3 1121.0,584.2 1120.5,584.2 1120.0,584.1 1119.5,584.1 1119.0,584.1 1118.5,584.0 1118.0,584.0 1117.5,583.9 1117.0,583.9 1116.5,583.8 1116.0,583.8 1115.5,583.7 1115.0,583.7 1114.5,583.7 1114.0,583.6 1113.5,583.6 1113.0,583.5 1112.5,583.5 1112.0,583.4 1111.5,583.4 1111.0,583.3 1110.5,583.3 1110.0,583.3 1109.5,583.2 1109.0,583.2 1108.5,583.1 1108.0,583.1 1107.5,583.0 1107.0,582.9 1106.5,582.9 1106.0,582.8 1105.5,582.8 1105.0,582.7 1104.5,582.6 1104.0,582.6 1103.5,582.5 1103.0,582.5 1102.5,582.4 1102.0,582.3 1101.5,582.3 1101.0,582.2 1100.5,582.2 1100.0,582.1 1099.5,582.0 1099.0,582.0 1098.5,581.9 1098.0,581.9 1097.5,581.8 1097.0,581.8 1096.5,581.7 1096.0,581.6 1095.5,581.6 1095.0,581.5 1094.5,581.5 1094.0,581.4 1093.5,581.3 1093.0,581.3 1092.5,581.2 1092.0,581.2 1091.5,581.1 1091.0,581.0 1090.5,581.0 1090.0,580.9 1089.5,580.9 1089.0,580.8 1088.5,580.7 1088.0,580.6 1087.5,580.4 1087.0,580.1 1086.5,579.9 1086.0,579.7 1085.5,579.4 1085.0,579.2 1084.5,578.9 1084.0,578.7 1083.5,578.5 1083.0,578.2 1082.5,578.0 1082.0,577.8 1081.5,577.5 1081.0,577.3 1080.5,577.0 1080.0,577.0 1079.5,576.9 1079.0,576.9 1078.5,576.9 1078.0,576.8 1077.5,576.8 1077.0,576.8 1076.5,576.7 1076.0,576.7 1075.5,576.6 1075.0,576.6 1074.5,576.6 1074.0,576.5 1073.5,576.5 1073.0,576.5 1072.5,576.4 1072.0,576.4 1071.5,576.4 1071.0,576.3 1070.5,576.3 1070.0,576.3 1069.5,576.2 1069.0,576.2 1068.5,576.1 1068.0,576.1 1067.5,576.1 1067.0,576.0 1066.5,576.0 1066.0,575.8 1065.5,575.5 1065.0,575.2 1064.5,575.0 1064.0,574.8 1063.5,574.5 1063.0,574.2 1062.5,574.0 1062.0,573.8 1061.5,573.5 1061.0,573.2 1060.5,573.0 1060.0,572.8 1059.5,572.5 1059.0,572.2 1058.5,572.1 1058.0,572.1 1057.5,572.1 1057.0,572.1 1056.5,572.1 1056.0,572.1 1055.5,572.1 1055.0,572.1 1054.5,572.1 1054.0,572.1 1053.5,572.1 1053.0,572.1 1052.5,572.1 1052.0,572.1 1051.5,572.1 1051.0,572.1 1050.5,572.1 1050.0,572.1 1049.5,572.1 1049.0,572.1 1048.5,571.4 1048.0,570.7 1047.5,570.0 1047.0,569.3 1046.5,568.6 1046.0,567.9 1045.5,567.2 1045.0,566.6 1044.5,565.9 1044.0,565.2 1043.5,564.5 1043.0,563.8" fill="#cde4f0"/>
</g><g clip-path="url(#cpY)">
<polygon points="0.0,543.3 0.5,543.4 1.0,543.5 1.5,543.6 2.0,543.7 2.5,543.8 3.0,543.8 3.5,543.9 4.0,544.0 4.5,544.1 5.0,544.2 5.5,544.3 6.0,544.4 6.5,544.5 7.0,544.6 7.5,544.7 8.0,544.8 8.5,544.9 9.0,544.9 9.5,545.0 10.0,545.1 10.5,545.2 11.0,545.3 11.5,545.4 12.0,545.5 12.5,545.6 13.0,545.7 13.5,545.8 14.0,545.9 14.5,545.9 15.0,546.1 15.5,546.2 16.0,546.3 16.5,546.5 17.0,546.6 17.5,546.8 18.0,546.9 18.5,547.0 19.0,547.2 19.5,547.3 20.0,547.4 20.5,547.6 21.0,547.7 21.5,547.9 22.0,548.0 22.5,548.1 23.0,548.3 23.5,548.4 24.0,548.6 24.5,548.7 25.0,548.8 25.5,549.0 26.0,549.1 26.5,549.3 27.0,549.4 27.5,549.5 28.0,549.7 28.5,549.8 29.0,550.0 29.5,550.1 30.0,550.2 30.5,550.4 31.0,550.5 31.5,550.6 32.0,550.8 32.5,550.9 33.0,551.0 33.5,551.1 34.0,551.2 34.5,551.3 35.0,551.5 35.5,551.6 36.0,551.7 36.5,551.8 37.0,551.9 37.5,552.0 38.0,552.2 38.5,552.3 39.0,552.4 39.5,552.5 40.0,552.6 40.5,552.7 41.0,552.9 41.5,553.0 42.0,553.1 42.5,553.2 43.0,553.3 43.5,553.4 44.0,553.6 44.5,553.7 45.0,553.8 45.5,553.9 46.0,554.0 46.5,554.1 47.0,554.3 47.5,554.4 48.0,554.5 48.5,554.6 49.0,554.7 49.5,554.8 50.0,555.0 50.5,555.1 51.0,555.2 51.5,555.3 52.0,555.4 52.5,555.5 53.0,555.7 53.5,555.8 54.0,555.9 54.5,556.0 55.0,556.1 55.5,556.4 56.0,556.8 56.5,557.2 57.0,557.6 57.5,558.0 58.0,558.5 58.5,558.9 59.0,559.3 59.5,559.7 60.0,560.1 60.5,560.5 61.0,560.8 61.5,560.8 62.0,560.9 62.5,560.9 63.0,561.0 63.5,561.0 64.0,561.0 64.5,561.1 65.0,561.1 65.5,561.1 66.0,561.2 66.5,561.2 67.0,561.2 67.5,561.3 68.0,561.3 68.5,561.3 69.0,561.4 69.5,561.4 70.0,561.4 70.5,561.5 71.0,561.5 71.5,561.5 71.5,561.3 71.0,561.7 70.5,562.2 70.0,562.6 69.5,563.1 69.0,563.6 68.5,564.0 68.0,564.5 67.5,565.0 67.0,565.4 66.5,565.9 66.0,566.3 65.5,566.8 65.0,567.3 64.5,567.7 64.0,568.2 63.5,568.6 63.0,569.1 62.5,569.6 62.0,570.0 61.5,570.5 61.0,571.0 60.5,571.4 60.0,571.9 59.5,572.3 59.0,572.8 58.5,572.8 58.0,572.9 57.5,572.9 57.0,572.9 56.5,573.0 56.0,573.0 55.5,573.0 55.0,573.0 54.5,573.1 54.0,573.1 53.5,573.1 53.0,573.2 52.5,573.2 52.0,573.2 51.5,573.3 51.0,573.3 50.5,573.3 50.0,573.4 49.5,573.4 49.0,573.4 48.5,573.4 48.0,573.5 47.5,573.5 47.0,573.5 46.5,573.6 46.0,573.6 45.5,573.6 45.0,573.7 44.5,573.7 44.0,574.2 43.5,575.0 43.0,575.8 42.5,576.6 42.0,577.4 41.5,578.2 41.0,579.1 40.5,579.9 40.0,580.7 39.5,581.5 39.0,582.3 38.5,583.1 38.0,583.9 37.5,584.7 37.0,585.5 36.5,586.2 36.0,586.7 35.5,587.3 35.0,587.9 34.5,588.5 34.0,589.1 33.5,589.7 33.0,590.2 32.5,590.8 32.0,591.4 31.5,592.0 31.0,592.6 30.5,593.1 30.0,593.7 29.5,594.3 29.0,594.9 28.5,595.5 28.0,596.0 27.5,596.6 27.0,597.2 26.5,597.8 26.0,598.4 25.5,598.7 25.0,598.8 24.5,598.9 24.0,599.1 23.5,599.2 23.0,599.3 22.5,599.4 22.0,599.6 21.5,599.7 21.0,599.8 20.5,600.0 20.0,600.1 19.5,600.2 19.0,600.3 18.5,600.5 18.0,600.6 17.5,600.7 17.0,600.9 16.5,601.0 16.0,601.1 15.5,601.2 15.0,601.4 14.5,601.5 14.0,601.6 13.5,601.8 13.0,601.9 12.5,602.0 12.0,602.1 11.5,602.3 11.0,602.4 10.5,602.6 10.0,602.7 9.5,602.9 9.0,603.1 8.5,603.2 8.0,603.4 7.5,603.5 7.0,603.7 6.5,603.9 6.0,604.0 5.5,604.2 5.0,604.4 4.5,604.5 4.0,604.7 3.5,604.9 3.0,605.0 2.5,605.2 2.0,605.3 1.5,605.5 1.0,605.7 0.5,605.8 0.0,606.0" fill="#cce2c6"/>
<polygon points="71.5,561.5 72.0,561.6 72.5,561.6 73.0,561.6 73.5,561.7 74.0,561.7 74.5,561.7 75.0,561.8 75.5,561.8 76.0,561.8 76.5,561.8 77.0,561.9 77.5,561.9 78.0,561.9 78.5,562.0 79.0,562.0 79.5,562.0 80.0,562.0 80.5,562.1 81.0,562.1 81.5,562.1 82.0,562.1 82.5,562.2 83.0,562.2 83.5,562.2 84.0,562.2 84.5,562.3 85.0,562.3 85.5,562.3 86.0,562.4 86.5,562.4 87.0,562.4 87.5,562.4 88.0,562.5 88.5,562.5 89.0,562.5 89.5,562.5 90.0,562.6 90.5,562.6 91.0,562.6 91.5,562.6 92.0,562.7 92.5,562.7 93.0,562.7 93.5,562.8 94.0,562.8 94.5,562.8 95.0,562.8 95.5,562.9 96.0,562.9 96.5,562.9 97.0,562.9 97.5,563.0 98.0,563.0 98.5,563.0 99.0,563.0 99.5,563.1 100.0,563.1 100.5,563.3 101.0,563.5 101.5,563.7 102.0,563.9 102.5,564.1 103.0,564.2 103.5,564.4 104.0,564.6 104.5,564.8 105.0,565.0 105.5,565.2 106.0,566.0 106.5,566.8 107.0,567.7 107.5,568.5 108.0,569.3 108.5,570.1 109.0,571.0 109.5,571.8 110.0,572.7 110.5,573.6 111.0,574.5 111.5,575.4 112.0,576.4 112.5,577.3 113.0,578.2 113.5,579.1 114.0,579.8 114.5,580.1 115.0,580.4 115.5,580.8 116.0,581.1 116.5,581.4 117.0,581.7 117.5,582.0 118.0,582.3 118.5,582.6 119.0,582.9 119.5,583.3 120.0,583.8 120.5,584.3 121.0,584.8 121.5,585.3 122.0,585.8 122.5,586.3 123.0,586.8 123.5,587.3 124.0,588.3 124.5,589.3 125.0,590.3 125.5,591.3 126.0,592.4 126.5,593.4 127.0,594.4 127.5,595.4 128.0,596.3 128.5,597.1 129.0,597.9 129.5,598.7 130.0,599.5 130.5,600.4 131.0,601.2 131.5,602.0 132.0,602.7 132.5,603.1 133.0,603.6 133.5,604.0 134.0,604.5 134.5,604.9 135.0,605.4 135.5,605.8 136.0,606.3 136.5,606.7 137.0,607.2 137.5,607.6 138.0,608.1 138.5,608.5 139.0,608.8 139.5,609.0 140.0,609.2 140.5,609.4 141.0,609.6 141.5,609.7 142.0,609.7 142.5,609.7 143.0,609.7 143.5,609.7 144.0,609.7 144.5,609.7 145.0,609.7 145.5,609.7 146.0,609.7 146.5,609.7 147.0,609.7 147.5,609.7 148.0,609.7 148.5,609.7 149.0,609.7 149.5,609.7 150.0,609.7 150.5,609.7 151.0,609.7 151.5,609.7 152.0,609.7 152.5,609.7 153.0,609.7 153.5,609.7 154.0,609.7 154.5,609.7 155.0,609.7 155.5,609.7 156.0,609.7 156.5,609.7 157.0,609.7 157.5,609.7 158.0,609.7 158.5,609.7 159.0,609.7 159.5,609.7 160.0,609.7 160.5,609.7 161.0,609.7 161.5,609.7 162.0,609.7 162.5,609.7 163.0,609.7 163.5,609.7 164.0,609.7 164.5,609.7 165.0,609.7 165.5,609.7 166.0,609.7 166.5,609.7 167.0,609.7 167.5,609.7 168.0,609.8 168.5,610.0 169.0,610.2 169.5,610.4 170.0,610.6 170.5,610.8 171.0,611.0 171.5,611.2 172.0,611.4 172.5,611.6 173.0,611.8 173.5,612.0 174.0,612.2 174.5,612.4 175.0,612.6 175.5,612.8 176.0,613.0 176.5,613.2 177.0,613.4 177.5,613.6 178.0,613.8 178.5,614.0 179.0,614.2 179.5,614.4 180.0,614.6 180.5,614.8 181.0,615.0 181.5,615.1 182.0,615.3 182.5,615.5 183.0,615.7 183.5,615.9 184.0,616.1 184.5,616.3 185.0,616.5 185.5,616.7 186.0,616.9 186.5,617.1 187.0,617.3 187.5,617.5 188.0,617.7 188.5,617.9 189.0,618.1 189.5,618.3 190.0,618.5 190.5,618.7 191.0,618.9 191.5,619.1 192.0,619.3 192.5,619.5 193.0,619.7 193.5,619.8 194.0,620.0 194.5,620.2 195.0,620.4 195.5,620.6 196.0,620.8 196.5,621.0 197.0,621.1 197.5,621.1 198.0,621.2 198.5,621.2 199.0,621.2 199.5,621.2 200.0,621.2 200.5,621.3 201.0,621.3 201.5,621.3 202.0,621.3 202.5,621.3 203.0,621.4 203.5,621.4 204.0,621.4 204.5,621.4 205.0,621.4 205.5,621.5 206.0,621.5 206.5,621.3 207.0,620.6 207.5,619.8 208.0,619.0 208.5,618.2 209.0,617.5 209.5,616.7 210.0,615.9 210.5,615.1 211.0,614.4 211.5,613.6 212.0,612.8 212.5,612.0 213.0,611.3 213.5,610.5 214.0,609.7 214.5,609.7 215.0,609.7 215.5,609.7 216.0,609.6 216.5,609.6 217.0,609.6 217.5,609.6 218.0,609.6 218.5,609.6 219.0,609.5 219.5,609.5 220.0,609.5 220.5,609.5 221.0,609.5 221.5,609.5 222.0,609.4 222.5,609.4 223.0,609.4 223.5,609.4 224.0,609.4 224.5,609.4 225.0,609.3 225.5,609.3 226.0,609.3 226.5,609.3 227.0,609.3 227.5,609.3 228.0,609.2 228.5,609.2 229.0,609.2 229.5,609.2 230.0,609.2 230.5,609.2 231.0,609.2 231.5,609.1 232.0,609.1 232.5,609.1 233.0,609.1 233.5,609.1 234.0,609.1 234.5,609.0 235.0,609.0 235.5,609.0 236.0,609.0 236.5,609.0 237.0,609.0 237.5,608.9 238.0,608.9 238.5,608.9 239.0,608.9 239.5,608.9 240.0,608.9 240.5,608.8 241.0,608.8 241.5,608.8 242.0,608.8 242.5,608.8 243.0,608.8 243.5,608.7 244.0,608.7 244.5,608.7 245.0,608.7 245.5,608.5 246.0,608.3 246.5,608.1 247.0,607.8 247.5,607.6 248.0,607.4 248.5,607.2 249.0,607.0 249.5,606.8 250.0,606.5 250.5,606.3 251.0,606.1 251.5,605.9 252.0,605.7 252.5,605.5 253.0,605.2 253.5,605.0 254.0,604.8 254.5,604.6 255.0,604.4 255.5,604.2 256.0,603.9 256.5,603.7 257.0,603.5 257.5,603.3 258.0,603.1 258.5,602.9 259.0,602.7 259.0,602.7 258.5,602.8 258.0,602.8 257.5,602.7 257.0,602.7 256.5,602.7 256.0,602.6 255.5,602.6 255.0,602.6 254.5,602.5 254.0,602.5 253.5,602.5 253.0,602.4 252.5,602.4 252.0,602.4 251.5,602.3 251.0,602.3 250.5,602.3 250.0,602.2 249.5,602.2 249.0,602.2 248.5,602.1 248.0,602.0 247.5,601.9 247.0,601.8 246.5,601.8 246.0,601.7 245.5,601.6 245.0,601.5 244.5,601.4 244.0,601.4 243.5,601.3 243.0,601.2 242.5,601.1 242.0,601.0 241.5,601.0 241.0,600.9 240.5,600.8 240.0,600.7 239.5,600.6 239.0,600.5 238.5,600.5 238.0,600.3 237.5,599.8 237.0,599.4 236.5,598.9 236.0,598.4 235.5,597.9 235.0,597.4 234.5,597.0 234.0,596.5 233.5,596.0 233.0,595.5 232.5,595.1 232.0,594.6 231.5,594.1 231.0,593.6 230.5,593.2 230.0,592.7 229.5,592.5 229.0,592.5 228.5,592.5 228.0,592.5 227.5,592.5 227.0,592.5 226.5,592.4 226.0,592.4 225.5,592.4 225.0,592.4 224.5,592.4 224.0,592.4 223.5,592.4 223.0,592.4 222.5,592.4 222.0,592.4 221.5,592.4 221.0,592.3 220.5,592.3 220.0,592.3 219.5,592.3 219.0,592.3 218.5,592.3 218.0,592.3 217.5,592.3 217.0,592.3 216.5,592.3 216.0,592.3 215.5,592.3 215.0,592.2 214.5,592.2 214.0,592.2 213.5,592.2 213.0,592.2 212.5,592.2 212.0,592.2 211.5,592.2 211.0,592.2 210.5,592.2 210.0,592.2 209.5,592.2 209.0,592.1 208.5,592.1 208.0,592.1 207.5,592.1 207.0,592.1 206.5,592.1 206.0,592.0 205.5,591.8 205.0,591.7 204.5,591.6 204.0,591.4 203.5,591.3 203.0,591.2 202.5,591.0 202.0,590.9 201.5,590.7 201.0,590.6 200.5,590.5 200.0,590.3 199.5,590.2 199.0,590.0 198.5,589.9 198.0,589.8 197.5,589.6 197.0,589.5 196.5,589.3 196.0,589.2 195.5,589.1 195.0,589.0 194.5,588.8 194.0,588.7 193.5,588.6 193.0,588.5 192.5,588.3 192.0,588.2 191.5,588.1 191.0,588.0 190.5,588.0 190.0,588.0 189.5,588.0 189.0,588.0 188.5,588.0 188.0,588.0 187.5,588.0 187.0,588.0 186.5,588.0 186.0,588.0 185.5,587.9 185.0,587.9 184.5,587.9 184.0,587.9 183.5,587.9 183.0,587.9 182.5,587.9 182.0,587.9 181.5,587.9 181.0,587.9 180.5,587.9 180.0,587.9 179.5,587.9 179.0,587.9 178.5,587.9 178.0,587.9 177.5,587.9 177.0,587.9 176.5,587.9 176.0,587.9 175.5,587.9 175.0,587.9 174.5,587.8 174.0,587.8 173.5,587.8 173.0,587.8 172.5,587.8 172.0,587.8 171.5,587.8 171.0,587.8 170.5,587.8 170.0,587.8 169.5,587.8 169.0,587.8 168.5,587.8 168.0,587.8 167.5,587.8 167.0,587.8 166.5,587.8 166.0,587.8 165.5,587.8 165.0,587.8 164.5,587.8 164.0,587.8 163.5,587.7 163.0,587.7 162.5,587.7 162.0,587.7 161.5,587.7 161.0,587.7 160.5,587.7 160.0,587.7 159.5,587.7 159.0,587.7 158.5,587.7 158.0,587.7 157.5,587.7 157.0,587.7 156.5,587.7 156.0,587.7 155.5,587.7 155.0,587.7 154.5,587.7 154.0,587.7 153.5,587.7 153.0,587.7 152.5,587.6 152.0,587.6 151.5,587.6 151.0,587.6 150.5,587.6 150.0,587.6 149.5,587.6 149.0,587.6 148.5,587.6 148.0,587.6 147.5,587.6 147.0,587.6 146.5,587.5 146.0,587.4 145.5,587.3 145.0,587.2 144.5,587.1 144.0,587.0 143.5,586.9 143.0,586.8 142.5,586.7 142.0,586.6 141.5,586.5 141.0,586.4 140.5,586.3 140.0,586.2 139.5,585.9 139.0,585.7 138.5,585.4 138.0,585.1 137.5,584.9 137.0,584.6 136.5,584.3 136.0,584.1 135.5,583.8 135.0,583.5 134.5,583.2 134.0,583.0 133.5,582.7 133.0,582.4 132.5,582.2 132.0,581.9 131.5,581.4 131.0,580.8 130.5,580.2 130.0,579.6 129.5,579.0 129.0,578.3 128.5,577.7 128.0,577.1 127.5,576.5 127.0,575.9 126.5,575.3 126.0,574.5 125.5,573.5 125.0,572.5 124.5,571.5 124.0,570.4 123.5,569.4 123.0,568.4 122.5,567.4 122.0,566.5 121.5,565.9 121.0,565.3 120.5,564.7 120.0,564.1 119.5,563.5 119.0,562.9 118.5,562.3 118.0,561.7 117.5,561.7 117.0,561.6 116.5,561.6 116.0,561.6 115.5,561.5 115.0,561.5 114.5,561.4 114.0,561.4 113.5,561.4 113.0,561.3 112.5,561.3 112.0,561.3 111.5,561.2 111.0,561.2 110.5,561.2 110.0,561.1 109.5,561.1 109.0,561.0 108.5,561.0 108.0,561.0 107.5,560.9 107.0,560.9 106.5,560.9 106.0,560.8 105.5,560.8 105.0,560.8 104.5,560.7 104.0,560.7 103.5,560.7 103.0,560.6 102.5,560.6 102.0,560.5 101.5,560.5 101.0,560.5 100.5,560.4 100.0,560.4 99.5,560.4 99.0,560.4 98.5,560.4 98.0,560.4 97.5,560.4 97.0,560.4 96.5,560.4 96.0,560.5 95.5,560.5 95.0,560.5 94.5,560.5 94.0,560.5 93.5,560.5 93.0,560.5 92.5,560.5 92.0,560.5 91.5,560.5 91.0,560.5 90.5,560.5 90.0,560.5 89.5,560.5 89.0,560.6 88.5,560.6 88.0,560.6 87.5,560.6 87.0,560.6 86.5,560.6 86.0,560.6 85.5,560.6 85.0,560.6 84.5,560.6 84.0,560.6 83.5,560.6 83.0,560.6 82.5,560.6 82.0,560.7 81.5,560.7 81.0,560.7 80.5,560.7 80.0,560.7 79.5,560.7 79.0,560.7 78.5,560.7 78.0,560.7 77.5,560.7 77.0,560.7 76.5,560.7 76.0,560.7 75.5,560.8 75.0,560.8 74.5,560.8 74.0,560.8 73.5,560.8 73.0,560.8 72.5,560.8 72.0,560.8 71.5,561.3" fill="#f6d5a2"/>
<polygon points="259.0,602.7 259.5,602.5 260.0,602.3 260.5,602.1 261.0,601.9 261.5,601.7 262.0,601.5 262.5,601.3 263.0,601.1 263.5,600.8 264.0,600.6 264.5,600.3 265.0,600.0 265.5,599.7 266.0,599.5 266.5,599.2 267.0,598.9 267.5,598.6 268.0,598.4 268.5,598.1 269.0,597.8 269.5,597.1 270.0,596.2 270.5,595.3 271.0,594.3 271.5,593.4 272.0,592.5 272.5,591.5 273.0,590.6 273.5,589.6 274.0,588.7 274.5,588.5 275.0,588.3 275.5,588.1 276.0,587.9 276.5,587.6 277.0,587.4 277.5,587.2 278.0,587.0 278.5,586.8 279.0,586.6 279.5,586.4 280.0,586.2 280.5,586.0 281.0,585.7 281.5,585.5 282.0,585.3 282.5,585.3 283.0,585.4 283.5,585.6 284.0,585.8 284.5,585.9 285.0,586.1 285.5,586.3 286.0,586.4 286.5,586.6 287.0,586.8 287.5,587.0 288.0,587.1 288.5,587.3 289.0,587.5 289.5,587.6 290.0,587.8 290.5,588.0 291.0,588.2 291.5,588.4 292.0,588.6 292.5,588.8 293.0,589.0 293.5,589.2 294.0,589.4 294.5,589.6 295.0,589.8 295.5,590.0 296.0,590.2 296.5,590.4 297.0,590.6 297.5,590.8 298.0,591.0 298.5,591.0 299.0,591.0 299.5,591.0 300.0,591.0 300.5,591.0 301.0,591.0 301.5,591.0 302.0,591.0 302.5,591.0 303.0,591.0 303.5,591.0 304.0,591.0 304.5,591.0 305.0,591.0 305.5,591.0 306.0,591.0 306.5,591.0 307.0,591.0 307.5,591.0 308.0,591.0 308.5,591.0 309.0,591.0 309.5,591.0 310.0,591.0 310.5,591.0 311.0,591.0 311.5,591.0 312.0,591.0 312.5,591.0 313.0,591.0 313.5,591.0 314.0,591.0 314.5,591.0 315.0,591.0 315.5,591.0 316.0,591.0 316.5,591.0 317.0,591.0 317.5,591.0 318.0,591.0 318.5,591.0 319.0,591.0 319.5,591.0 320.0,591.0 320.5,591.0 321.0,591.0 321.5,591.0 322.0,591.0 322.5,591.0 323.0,591.0 323.5,591.0 324.0,591.0 324.5,591.0 325.0,591.0 325.5,591.0 326.0,591.0 326.5,591.0 327.0,591.0 327.5,591.0 328.0,591.0 328.5,591.0 329.0,591.0 329.5,591.0 330.0,591.0 330.5,591.0 331.0,591.0 331.5,591.0 332.0,591.0 332.5,591.0 333.0,591.0 333.5,591.0 334.0,591.0 334.5,591.0 335.0,591.0 335.5,591.0 336.0,591.0 336.5,591.0 337.0,591.0 337.5,590.9 338.0,590.7 338.5,590.4 339.0,590.1 339.5,589.9 340.0,589.6 340.5,589.3 341.0,589.1 341.5,588.8 342.0,588.5 342.5,588.2 343.0,588.0 343.5,587.7 344.0,587.8 344.5,588.1 345.0,588.4 345.5,588.6 346.0,588.9 346.5,589.2 347.0,589.5 347.5,589.8 348.0,590.1 348.5,590.4 349.0,590.7 349.5,591.0 350.0,591.2 350.5,591.5 351.0,591.8 351.5,592.1 352.0,592.4 352.5,592.3 353.0,592.3 353.5,592.2 354.0,592.2 354.5,592.1 355.0,592.0 355.5,592.0 356.0,591.9 356.5,591.9 357.0,591.8 357.5,591.7 358.0,591.7 358.5,591.6 359.0,591.6 359.5,591.5 360.0,591.4 360.5,591.1 361.0,590.5 361.5,589.8 362.0,589.1 362.5,588.4 363.0,587.7 363.5,587.1 364.0,586.4 364.5,585.7 365.0,585.0 365.5,584.4 366.0,583.7 366.5,583.0 367.0,582.8 367.5,582.5 368.0,582.3 368.5,582.1 369.0,581.9 369.5,581.6 370.0,581.4 370.5,581.2 371.0,581.0 371.5,580.7 372.0,580.5 372.5,580.3 373.0,580.0 373.5,579.8 374.0,579.6 374.5,579.4 375.0,579.1 375.5,578.9 376.0,578.7 376.5,578.4 377.0,578.2 377.5,578.0 378.0,577.8 378.5,577.5 379.0,577.3 379.5,577.1 380.0,576.9 380.5,576.6 381.0,576.4 381.5,576.2 382.0,575.9 382.5,575.7 383.0,575.5 383.5,575.3 384.0,575.3 384.5,575.3 385.0,575.2 385.5,575.2 386.0,575.2 386.5,575.2 387.0,575.2 387.5,575.1 388.0,575.1 388.5,575.1 389.0,575.1 389.5,575.1 390.0,575.0 390.5,575.0 391.0,575.0 391.5,575.0 392.0,575.0 392.5,574.9 393.0,574.9 393.5,574.9 394.0,574.9 394.5,574.9 395.0,574.8 395.5,574.8 396.0,574.8 396.5,574.8 397.0,574.8 397.5,574.8 398.0,574.7 398.5,574.7 399.0,574.7 399.5,574.7 400.0,574.7 400.5,574.6 401.0,574.6 401.5,574.6 402.0,574.6 402.5,574.6 403.0,574.5 403.5,574.5 404.0,574.5 404.5,574.5 405.0,574.5 405.5,574.4 406.0,574.4 406.5,574.4 407.0,574.4 407.5,574.4 408.0,574.4 408.5,574.4 409.0,574.3 409.5,574.3 410.0,574.3 410.5,574.3 411.0,574.3 411.5,574.3 412.0,574.3 412.5,574.3 413.0,574.2 413.5,574.2 414.0,574.2 414.5,574.2 415.0,574.2 415.5,574.2 416.0,574.2 416.5,574.2 417.0,574.2 417.5,574.1 418.0,574.1 418.5,574.1 419.0,574.1 419.5,574.1 420.0,574.1 420.5,574.1 421.0,574.1 421.5,574.0 422.0,574.0 422.5,574.0 423.0,574.0 423.5,574.0 424.0,574.0 424.5,574.0 425.0,574.0 425.5,574.0 426.0,573.9 426.5,573.9 427.0,573.9 427.5,573.9 428.0,573.9 428.5,573.9 429.0,573.9 429.5,573.9 430.0,573.9 430.5,573.8 431.0,573.8 431.5,573.8 432.0,573.8 432.5,573.8 433.0,573.8 433.5,573.8 434.0,573.8 434.5,573.7 435.0,573.7 435.5,573.7 436.0,573.7 436.5,573.7 437.0,573.8 437.5,573.9 438.0,574.0 438.5,574.0 439.0,574.1 439.5,574.2 440.0,574.3 440.5,574.4 441.0,574.5 441.5,574.6 442.0,574.7 442.5,574.7 443.0,574.8 443.5,575.0 444.0,575.2 444.5,575.5 445.0,575.7 445.5,576.0 446.0,576.2 446.5,576.5 447.0,576.7 447.5,577.0 448.0,577.2 448.5,577.5 449.0,577.7 449.5,578.0 450.0,578.2 450.5,578.5 451.0,578.7 451.5,579.0 452.0,579.2 452.5,579.5 453.0,579.5 453.5,579.5 454.0,579.5 454.5,579.5 455.0,579.5 455.5,579.5 456.0,579.5 456.5,579.5 457.0,579.5 457.5,579.5 458.0,579.5 458.5,579.5 459.0,579.5 459.5,579.5 460.0,579.5 460.5,579.5 461.0,579.5 461.5,579.5 462.0,579.5 462.5,579.5 463.0,579.5 463.5,579.5 464.0,579.5 464.5,579.5 465.0,579.5 465.5,579.5 466.0,579.5 466.5,579.5 467.0,579.5 467.5,579.5 468.0,579.5 468.5,579.5 469.0,579.5 469.5,579.5 470.0,579.5 470.5,579.5 471.0,579.5 471.5,579.5 472.0,579.5 472.5,579.5 473.0,579.5 473.5,579.7 474.0,580.2 474.5,580.6 475.0,581.1 475.5,581.6 476.0,582.0 476.5,582.5 477.0,583.0 477.5,583.4 478.0,583.9 478.5,584.4 479.0,584.8 479.5,585.3 480.0,585.8 480.5,586.2 481.0,586.7 481.5,587.2 482.0,587.6 482.5,588.1 483.0,588.2 483.5,588.2 484.0,588.2 484.5,588.2 485.0,588.2 485.5,588.2 486.0,588.2 486.5,588.2 487.0,588.2 487.5,588.2 488.0,588.2 488.5,588.2 489.0,588.2 489.5,588.2 490.0,588.2 490.5,588.2 491.0,587.8 491.5,587.2 492.0,586.7 492.5,586.2 493.0,585.6 493.5,585.1 494.0,584.6 494.5,584.0 495.0,583.5 495.5,582.9 496.0,582.4 496.5,581.9 497.0,581.3 497.5,580.8 498.0,580.3 498.5,579.7 499.0,579.4 499.5,579.4 500.0,579.4 500.5,579.4 501.0,579.4 501.5,579.4 502.0,579.4 502.5,579.4 503.0,579.4 503.5,579.4 504.0,579.4 504.5,579.4 505.0,579.4 505.5,579.4 506.0,579.4 506.5,579.4 507.0,579.4 507.5,579.4 508.0,579.4 508.5,579.4 509.0,579.4 509.5,579.4 510.0,579.4 510.5,579.4 511.0,579.4 511.5,579.4 512.0,579.4 512.5,579.4 513.0,579.4 513.5,579.4 514.0,579.4 514.5,579.4 515.0,579.4 515.5,579.4 516.0,579.4 516.5,579.4 517.0,579.4 517.5,579.4 518.0,579.4 518.5,579.4 519.0,579.4 519.5,579.4 520.0,579.4 520.5,579.4 521.0,579.4 521.5,579.4 522.0,579.4 522.5,579.4 523.0,579.5 523.5,579.6 524.0,579.7 524.5,579.8 525.0,580.0 525.5,580.1 526.0,580.2 526.5,580.3 527.0,580.5 527.5,580.6 528.0,580.7 528.5,580.8 529.0,581.0 529.5,581.1 530.0,581.2 530.5,581.3 531.0,581.5 531.5,581.6 532.0,581.7 532.5,581.8 533.0,582.0 533.5,582.1 534.0,582.2 534.5,582.3 535.0,582.5 535.5,582.6 536.0,582.7 536.5,582.4 537.0,582.1 537.5,581.7 538.0,581.4 538.5,581.1 539.0,580.8 539.5,580.5 540.0,580.1 540.5,579.8 541.0,579.5 541.5,579.2 542.0,578.9 542.5,578.5 543.0,578.2 543.5,577.9 544.0,577.6 544.5,577.3 545.0,576.9 545.5,576.6 546.0,576.3 546.5,576.0 547.0,575.7 547.5,575.3 548.0,575.0 548.5,574.7 549.0,574.4 549.5,574.1 550.0,573.7 550.5,573.4 551.0,573.1 551.5,572.8 552.0,572.7 552.5,572.5 553.0,572.4 553.5,572.2 554.0,572.1 554.5,571.9 555.0,571.8 555.5,571.6 556.0,571.5 556.5,571.3 557.0,571.2 557.5,571.0 558.0,570.9 558.5,570.7 559.0,570.6 559.5,570.4 560.0,570.3 560.5,570.1 561.0,570.0 561.5,569.8 562.0,569.7 562.5,569.6 563.0,569.6 563.5,569.6 564.0,569.6 564.5,569.6 565.0,569.6 565.5,569.6 566.0,569.6 566.5,569.6 567.0,569.6 567.5,569.6 568.0,569.6 568.5,569.6 569.0,569.6 569.5,569.6 570.0,569.6 570.5,569.6 571.0,569.6 571.5,569.6 572.0,569.6 572.5,569.6 573.0,569.6 573.5,569.6 574.0,569.6 574.5,569.6 575.0,569.6 575.5,569.6 576.0,569.4 576.5,569.2 577.0,569.0 577.5,568.8 578.0,568.6 578.5,568.3 579.0,568.1 579.5,567.9 580.0,567.7 580.5,567.5 581.0,567.3 581.5,567.1 582.0,566.9 582.5,566.7 583.0,566.5 583.5,566.3 584.0,566.1 584.5,565.9 585.0,565.7 585.5,565.5 586.0,565.3 586.5,565.1 587.0,564.8 587.5,564.5 588.0,564.2 588.5,563.9 589.0,563.6 589.5,563.3 590.0,563.0 590.5,562.7 591.0,562.4 591.5,562.1 592.0,561.7 592.5,561.4 593.0,561.1 593.5,560.8 594.0,560.5 594.5,560.2 595.0,559.9 595.5,559.6 596.0,559.3 596.5,559.0 597.0,558.7 597.5,558.5 598.0,558.3 598.5,558.1 599.0,557.9 599.5,557.7 600.0,557.5 600.5,557.3 601.0,557.1 601.5,556.9 602.0,556.7 602.5,556.5 603.0,556.3 603.5,556.1 604.0,555.9 604.5,555.7 605.0,555.6 605.5,555.4 606.0,555.2 606.5,555.0 607.0,554.8 607.5,554.6 608.0,554.4 608.5,554.2 609.0,554.1 609.5,554.0 610.0,553.9 610.5,553.8 611.0,553.6 611.5,553.5 612.0,553.4 612.5,552.9 613.0,552.4 613.5,551.9 614.0,551.4 614.5,550.9 615.0,550.4 615.5,549.9 616.0,549.4 616.5,548.9 617.0,548.4 617.5,547.9 618.0,547.3 618.5,546.8 619.0,546.3 619.5,545.8 620.0,545.3 620.5,544.8 621.0,544.3 621.5,543.8 622.0,543.3 622.5,542.8 623.0,542.3 623.5,541.8 624.0,541.1 624.5,540.5 625.0,539.8 625.5,539.1 626.0,538.5 626.5,537.8 627.0,537.2 627.5,536.5 628.0,535.8 628.5,535.2 629.0,534.5 629.5,533.8 630.0,533.2 630.5,532.5 631.0,531.8 631.5,531.2 632.0,530.5 632.5,529.9 633.0,529.2 633.5,528.5 634.0,527.9 634.5,527.2 635.0,526.5 635.5,526.3 636.0,526.2 636.5,526.1 637.0,526.0 637.5,525.9 638.0,525.8 638.5,525.7 639.0,525.6 639.5,525.4 640.0,525.3 640.5,525.2 641.0,525.1 641.5,525.0 642.0,524.9 642.5,524.8 643.0,524.7 643.5,524.6 644.0,524.5 644.5,524.4 645.0,524.2 645.5,524.1 646.0,524.0 646.5,523.9 647.0,523.8 647.5,523.7 648.0,523.6 648.5,523.5 649.0,523.4 649.5,523.3 650.0,523.2 650.5,523.1 651.0,523.0 651.5,522.9 652.0,522.8 652.5,522.7 653.0,522.7 653.5,522.6 654.0,522.5 654.5,522.4 655.0,522.3 655.5,522.2 656.0,522.1 656.5,522.0 657.0,521.9 657.5,521.8 658.0,521.7 658.5,521.7 659.0,521.6 659.5,521.5 660.0,521.4 660.5,521.3 661.0,521.2 661.5,521.1 662.0,521.0 662.5,520.9 663.0,520.8 663.5,520.7 664.0,520.7 664.5,520.6 665.0,520.5 665.5,520.4 666.0,520.3 666.5,520.2 667.0,520.1 667.5,520.0 668.0,519.9 668.5,519.8 669.0,519.7 669.5,519.7 670.0,519.6 670.5,519.5 671.0,519.4 671.5,519.3 672.0,519.2 672.5,519.1 673.0,519.0 673.5,518.9 674.0,518.8 674.5,518.6 675.0,518.4 675.5,518.1 676.0,517.8 676.5,517.6 677.0,517.3 677.5,517.0 678.0,516.7 678.5,516.5 679.0,516.2 679.5,515.9 680.0,515.7 680.5,515.4 681.0,515.1 681.5,514.9 682.0,514.6 682.5,514.3 683.0,514.0 683.5,513.8 684.0,513.5 684.5,513.2 685.0,513.0 685.5,512.7 686.0,512.4 686.5,512.2 687.0,511.9 687.5,511.6 688.0,511.3 688.5,511.1 689.0,510.8 689.5,510.7 690.0,510.7 690.5,510.8 691.0,510.8 691.5,510.8 692.0,510.8 692.5,510.9 693.0,510.9 693.5,510.9 694.0,510.9 694.5,511.0 695.0,511.0 695.5,511.0 696.0,511.0 696.5,511.1 697.0,511.1 697.5,511.1 698.0,511.1 698.5,511.1 699.0,511.2 699.5,511.2 700.0,511.3 700.5,511.4 701.0,511.5 701.5,511.6 702.0,511.7 702.5,511.8 703.0,511.9 703.5,512.0 704.0,512.2 704.5,512.3 705.0,512.4 705.5,512.5 706.0,512.6 706.5,512.7 707.0,512.8 707.5,512.9 708.0,513.0 708.5,513.1 709.0,513.2 709.5,513.4 710.0,513.5 710.5,513.6 711.0,513.7 711.5,513.8 712.0,513.9 712.5,514.0 713.0,514.1 713.5,514.3 714.0,514.5 714.5,514.8 715.0,515.1 715.5,515.4 716.0,515.7 716.5,516.0 717.0,516.2 717.5,516.5 718.0,516.8 718.5,517.1 719.0,517.4 719.5,517.6 720.0,517.9 720.5,518.0 721.0,517.9 721.5,517.7 722.0,517.5 722.5,517.3 723.0,517.2 723.5,517.0 724.0,516.8 724.5,516.6 725.0,516.5 725.5,516.3 726.0,516.1 726.5,516.0 727.0,515.8 727.5,515.6 728.0,515.4 728.5,515.3 729.0,515.4 729.5,515.4 730.0,515.4 730.5,515.5 731.0,515.5 731.5,515.6 732.0,515.6 732.5,515.7 733.0,515.7 733.5,515.8 734.0,515.8 734.5,515.8 735.0,515.9 735.5,515.9 736.0,516.0 736.5,516.0 737.0,516.1 737.5,516.1 738.0,516.1 738.5,516.2 739.0,516.2 739.5,516.3 740.0,516.3 740.5,516.4 741.0,516.4 741.5,516.5 742.0,516.5 742.5,516.5 743.0,516.5 743.5,516.4 744.0,516.4 744.5,516.4 745.0,516.4 745.5,516.3 746.0,516.3 746.5,516.3 747.0,516.3 747.5,516.2 748.0,516.2 748.5,516.2 749.0,516.2 749.5,516.1 750.0,516.1 750.5,516.3 751.0,516.6 751.5,517.0 752.0,517.4 752.5,517.8 753.0,518.2 753.5,518.6 754.0,518.9 754.5,519.3 755.0,519.7 755.5,520.1 756.0,520.5 756.5,520.9 757.0,521.2 757.5,521.6 758.0,522.0 758.5,522.0 759.0,522.0 759.5,522.0 760.0,522.0 760.5,522.0 761.0,522.0 761.5,522.0 762.0,522.0 762.5,522.0 763.0,522.0 763.5,522.0 764.0,522.0 764.5,522.0 765.0,522.0 765.5,522.0 766.0,522.0 766.5,522.0 767.0,522.0 767.5,522.0 768.0,522.0 768.5,522.0 769.0,522.0 769.5,522.0 770.0,522.0 770.5,522.0 771.0,522.0 771.5,522.0 772.0,522.0 772.5,522.0 773.0,522.0 773.5,522.0 774.0,522.0 774.5,522.0 775.0,522.0 775.5,522.0 776.0,522.0 776.5,522.0 777.0,522.0 777.5,522.0 778.0,522.0 778.5,522.0 779.0,522.0 779.5,522.0 780.0,522.0 780.5,522.0 781.0,522.0 781.5,522.4 782.0,522.7 782.5,523.1 783.0,523.4 783.5,523.8 784.0,524.1 784.5,524.5 785.0,524.9 785.5,525.2 786.0,525.6 786.5,525.9 787.0,526.3 787.5,526.6 788.0,527.0 788.5,527.3 789.0,527.7 789.5,528.1 790.0,528.5 790.5,529.0 791.0,529.5 791.5,530.0 792.0,530.5 792.5,531.0 793.0,531.5 793.5,531.9 794.0,532.4 794.5,532.9 795.0,533.4 795.5,533.9 796.0,534.4 796.5,535.6 797.0,537.8 797.5,540.0 798.0,542.2 798.5,544.4 799.0,546.6 799.0,546.5 798.5,545.9 798.0,545.4 797.5,544.8 797.0,544.3 796.5,543.7 796.0,543.3 795.5,543.0 795.0,542.6 794.5,542.3 794.0,542.0 793.5,541.6 793.0,541.3 792.5,541.0 792.0,540.6 791.5,540.3 791.0,540.0 790.5,539.6 790.0,539.3 789.5,539.1 789.0,539.1 788.5,539.1 788.0,539.1 787.5,539.1 787.0,539.1 786.5,539.1 786.0,539.1 785.5,539.1 785.0,539.1 784.5,539.1 784.0,539.1 783.5,539.2 783.0,539.2 782.5,539.2 782.0,539.2 781.5,539.2 781.0,539.2 780.5,539.2 780.0,539.2 779.5,539.2 779.0,539.2 778.5,539.2 778.0,539.2 777.5,539.2 777.0,539.2 776.5,539.2 776.0,539.2 775.5,539.2 775.0,539.2 774.5,539.2 774.0,539.2 773.5,539.2 773.0,539.2 772.5,539.2 772.0,539.2 771.5,539.3 771.0,539.3 770.5,539.3 770.0,539.3 769.5,539.3 769.0,539.3 768.5,539.3 768.0,539.3 767.5,539.3 767.0,539.3 766.5,539.3 766.0,539.3 765.5,539.3 765.0,539.3 764.5,539.3 764.0,539.3 763.5,539.3 763.0,539.3 762.5,539.3 762.0,539.3 761.5,539.3 761.0,539.3 760.5,539.3 760.0,539.3 759.5,539.4 759.0,539.4 758.5,539.4 758.0,539.4 757.5,539.4 757.0,539.4 756.5,539.4 756.0,539.4 755.5,539.4 755.0,539.4 754.5,539.4 754.0,539.4 753.5,539.4 753.0,539.4 752.5,539.4 752.0,539.4 751.5,539.4 751.0,539.4 750.5,539.4 750.0,539.4 749.5,539.4 749.0,539.4 748.5,539.4 748.0,539.4 747.5,539.5 747.0,539.5 746.5,539.5 746.0,539.5 745.5,539.5 745.0,539.5 744.5,539.5 744.0,539.5 743.5,539.5 743.0,539.5 742.5,539.5 742.0,539.5 741.5,539.5 741.0,539.5 740.5,539.5 740.0,539.5 739.5,539.5 739.0,539.5 738.5,539.6 738.0,539.6 737.5,539.6 737.0,539.6 736.5,539.6 736.0,539.6 735.5,539.6 735.0,539.6 734.5,539.6 734.0,539.6 733.5,539.6 733.0,539.6 732.5,539.6 732.0,539.7 731.5,539.7 731.0,539.7 730.5,539.7 730.0,539.7 729.5,539.7 729.0,539.7 728.5,539.7 728.0,539.7 727.5,539.7 727.0,539.7 726.5,539.7 726.0,539.8 725.5,539.8 725.0,539.8 724.5,539.8 724.0,539.8 723.5,539.8 723.0,539.8 722.5,539.8 722.0,539.8 721.5,539.8 721.0,539.8 720.5,539.8 720.0,539.8 719.5,539.9 719.0,539.9 718.5,539.9 718.0,539.9 717.5,539.9 717.0,539.9 716.5,539.9 716.0,539.9 715.5,539.9 715.0,539.9 714.5,539.9 714.0,539.9 713.5,539.9 713.0,540.0 712.5,540.0 712.0,540.0 711.5,540.0 711.0,540.0 710.5,540.0 710.0,540.0 709.5,540.0 709.0,540.0 708.5,540.0 708.0,540.0 707.5,540.0 707.0,540.0 706.5,540.1 706.0,540.1 705.5,540.1 705.0,540.1 704.5,540.1 704.0,540.1 703.5,540.1 703.0,540.1 702.5,540.1 702.0,540.1 701.5,540.1 701.0,540.1 700.5,540.1 700.0,540.2 699.5,540.2 699.0,540.2 698.5,540.2 698.0,540.2 697.5,540.2 697.0,540.9 696.5,542.0 696.0,543.1 695.5,544.2 695.0,545.3 694.5,546.4 694.0,547.5 693.5,548.6 693.0,549.6 692.5,550.7 692.0,551.8 691.5,552.9 691.0,554.0 690.5,555.1 690.0,556.2 689.5,557.3 689.0,558.0 688.5,558.0 688.0,558.0 687.5,558.0 687.0,558.0 686.5,558.0 686.0,558.0 685.5,558.0 685.0,558.0 684.5,558.0 684.0,558.0 683.5,558.0 683.0,558.0 682.5,558.0 682.0,558.0 681.5,558.0 681.0,558.0 680.5,558.0 680.0,558.0 679.5,558.0 679.0,558.0 678.5,558.0 678.0,558.0 677.5,558.0 677.0,558.0 676.5,558.0 676.0,558.0 675.5,558.0 675.0,558.0 674.5,558.0 674.0,558.0 673.5,558.0 673.0,558.0 672.5,558.0 672.0,558.0 671.5,558.0 671.0,558.0 670.5,558.0 670.0,558.0 669.5,558.0 669.0,558.0 668.5,558.0 668.0,558.0 667.5,558.0 667.0,558.0 666.5,558.0 666.0,558.0 665.5,558.0 665.0,558.0 664.5,558.0 664.0,558.0 663.5,558.0 663.0,558.0 662.5,558.0 662.0,558.0 661.5,558.0 661.0,558.0 660.5,558.0 660.0,558.0 659.5,558.0 659.0,558.0 658.5,558.0 658.0,558.0 657.5,558.0 657.0,558.0 656.5,558.0 656.0,558.0 655.5,558.0 655.0,558.0 654.5,558.0 654.0,558.0 653.5,558.0 653.0,558.0 652.5,558.0 652.0,558.0 651.5,558.0 651.0,558.0 650.5,558.0 650.0,558.0 649.5,558.0 649.0,558.0 648.5,558.0 648.0,558.0 647.5,558.0 647.0,558.0 646.5,558.0 646.0,558.0 645.5,558.0 645.0,558.0 644.5,558.0 644.0,558.0 643.5,558.0 643.0,558.0 642.5,558.0 642.0,558.0 641.5,558.1 641.0,558.2 640.5,558.2 640.0,558.3 639.5,558.4 639.0,558.5 638.5,558.6 638.0,558.6 637.5,558.7 637.0,558.8 636.5,558.9 636.0,559.0 635.5,559.0 635.0,559.3 634.5,560.2 634.0,561.1 633.5,562.1 633.0,563.0 632.5,563.9 632.0,564.9 631.5,565.8 631.0,566.7 630.5,567.7 630.0,568.6 629.5,569.5 629.0,570.4 628.5,571.4 628.0,572.3 627.5,573.2 627.0,574.2 626.5,575.1 626.0,576.0 625.5,576.6 625.0,577.0 624.5,577.3 624.0,577.7 623.5,578.1 623.0,578.4 622.5,578.8 622.0,579.1 621.5,579.5 621.0,579.9 620.5,580.2 620.0,580.6 619.5,581.0 619.0,581.3 618.5,581.7 618.0,582.0 617.5,582.4 617.0,582.8 616.5,583.1 616.0,583.5 615.5,583.8 615.0,584.2 614.5,584.6 614.0,584.9 613.5,585.3 613.0,585.6 612.5,586.0 612.0,586.3 611.5,586.3 611.0,586.3 610.5,586.3 610.0,586.3 609.5,586.3 609.0,586.3 608.5,586.3 608.0,586.3 607.5,586.3 607.0,586.3 606.5,586.3 606.0,586.3 605.5,586.3 605.0,586.3 604.5,586.3 604.0,586.3 603.5,586.3 603.0,586.3 602.5,586.3 602.0,586.3 601.5,586.2 601.0,586.2 600.5,586.2 600.0,586.2 599.5,586.2 599.0,586.2 598.5,586.2 598.0,586.2 597.5,586.2 597.0,586.2 596.5,586.2 596.0,586.2 595.5,586.2 595.0,586.2 594.5,586.2 594.0,586.2 593.5,586.2 593.0,586.2 592.5,586.2 592.0,586.2 591.5,586.2 591.0,586.2 590.5,586.2 590.0,586.2 589.5,586.2 589.0,586.2 588.5,586.2 588.0,586.2 587.5,586.2 587.0,586.2 586.5,586.2 586.0,586.2 585.5,586.2 585.0,586.2 584.5,586.2 584.0,586.2 583.5,586.2 583.0,586.2 582.5,586.2 582.0,586.2 581.5,586.1 581.0,586.1 580.5,586.1 580.0,586.1 579.5,586.1 579.0,586.1 578.5,586.1 578.0,586.1 577.5,586.1 577.0,586.1 576.5,586.1 576.0,586.1 575.5,586.1 575.0,586.1 574.5,586.1 574.0,586.1 573.5,586.1 573.0,586.1 572.5,586.1 572.0,586.1 571.5,586.1 571.0,586.1 570.5,586.1 570.0,586.1 569.5,586.1 569.0,586.1 568.5,586.1 568.0,586.1 567.5,586.1 567.0,586.1 566.5,586.1 566.0,586.1 565.5,586.1 565.0,586.1 564.5,586.1 564.0,586.1 563.5,586.1 563.0,586.1 562.5,586.1 562.0,586.1 561.5,586.1 561.0,586.0 560.5,586.0 560.0,586.0 559.5,586.0 559.0,586.0 558.5,586.0 558.0,586.0 557.5,586.0 557.0,586.0 556.5,586.0 556.0,586.0 555.5,586.0 555.0,586.0 554.5,586.0 554.0,586.0 553.5,586.0 553.0,586.0 552.5,586.0 552.0,586.0 551.5,586.0 551.0,586.0 550.5,586.1 550.0,586.2 549.5,586.3 549.0,586.4 548.5,586.5 548.0,586.5 547.5,586.6 547.0,586.7 546.5,586.8 546.0,586.9 545.5,587.0 545.0,587.1 544.5,587.4 544.0,588.0 543.5,588.7 543.0,589.4 542.5,590.0 542.0,590.7 541.5,591.4 541.0,592.1 540.5,592.7 540.0,593.4 539.5,594.1 539.0,594.7 538.5,595.4 538.0,595.8 537.5,595.8 537.0,595.8 536.5,595.8 536.0,595.8 535.5,595.8 535.0,595.8 534.5,595.8 534.0,595.8 533.5,595.8 533.0,595.8 532.5,595.8 532.0,595.8 531.5,595.8 531.0,595.8 530.5,595.8 530.0,595.8 529.5,595.8 529.0,595.8 528.5,595.8 528.0,595.8 527.5,595.8 527.0,595.8 526.5,595.8 526.0,595.8 525.5,595.8 525.0,595.8 524.5,595.8 524.0,595.8 523.5,595.8 523.0,595.8 522.5,595.8 522.0,595.8 521.5,595.8 521.0,595.8 520.5,595.8 520.0,595.8 519.5,595.8 519.0,595.8 518.5,595.8 518.0,595.8 517.5,595.8 517.0,595.8 516.5,595.8 516.0,595.8 515.5,595.8 515.0,595.8 514.5,595.8 514.0,595.8 513.5,595.8 513.0,595.8 512.5,595.8 512.0,595.8 511.5,595.8 511.0,595.8 510.5,595.8 510.0,595.9 509.5,595.9 509.0,595.9 508.5,595.9 508.0,595.9 507.5,595.9 507.0,595.9 506.5,595.9 506.0,595.9 505.5,595.9 505.0,595.9 504.5,595.9 504.0,595.9 503.5,595.9 503.0,595.9 502.5,595.9 502.0,595.9 501.5,595.9 501.0,595.9 500.5,595.9 500.0,595.9 499.5,595.9 499.0,595.9 498.5,595.9 498.0,595.9 497.5,595.9 497.0,595.9 496.5,595.9 496.0,595.9 495.5,595.9 495.0,595.9 494.5,595.9 494.0,595.9 493.5,595.9 493.0,595.9 492.5,595.9 492.0,595.9 491.5,595.9 491.0,595.9 490.5,595.9 490.0,595.9 489.5,595.9 489.0,595.9 488.5,595.9 488.0,595.9 487.5,595.9 487.0,595.9 486.5,595.9 486.0,595.9 485.5,595.9 485.0,595.9 484.5,595.9 484.0,595.9 483.5,595.9 483.0,595.9 482.5,595.9 482.0,595.9 481.5,595.9 481.0,595.9 480.5,595.9 480.0,595.9 479.5,595.9 479.0,595.9 478.5,595.9 478.0,595.9 477.5,595.9 477.0,595.9 476.5,595.9 476.0,595.9 475.5,595.9 475.0,595.9 474.5,595.9 474.0,595.9 473.5,595.9 473.0,595.9 472.5,595.9 472.0,595.9 471.5,595.9 471.0,595.9 470.5,595.9 470.0,595.9 469.5,595.9 469.0,595.9 468.5,595.9 468.0,595.9 467.5,595.9 467.0,595.9 466.5,595.9 466.0,595.9 465.5,595.9 465.0,595.9 464.5,595.9 464.0,595.9 463.5,595.9 463.0,595.9 462.5,595.9 462.0,595.9 461.5,595.9 461.0,595.9 460.5,595.9 460.0,595.9 459.5,595.9 459.0,595.9 458.5,595.9 458.0,595.9 457.5,595.9 457.0,595.9 456.5,595.9 456.0,595.9 455.5,595.9 455.0,595.9 454.5,595.9 454.0,596.0 453.5,596.0 453.0,596.0 452.5,596.0 452.0,596.0 451.5,596.0 451.0,596.0 450.5,596.0 450.0,596.0 449.5,596.0 449.0,596.0 448.5,596.0 448.0,596.0 447.5,596.0 447.0,596.0 446.5,596.0 446.0,596.0 445.5,596.0 445.0,596.0 444.5,596.0 444.0,596.0 443.5,596.0 443.0,596.0 442.5,596.0 442.0,596.0 441.5,596.0 441.0,596.0 440.5,596.0 440.0,596.0 439.5,596.0 439.0,596.0 438.5,596.0 438.0,596.0 437.5,596.0 437.0,596.0 436.5,596.0 436.0,596.0 435.5,596.0 435.0,596.0 434.5,596.0 434.0,596.0 433.5,596.0 433.0,596.0 432.5,596.0 432.0,596.0 431.5,596.0 431.0,596.0 430.5,596.0 430.0,596.0 429.5,596.0 429.0,596.0 428.5,596.0 428.0,596.0 427.5,596.0 427.0,596.0 426.5,596.0 426.0,596.0 425.5,596.0 425.0,596.0 424.5,596.0 424.0,596.0 423.5,596.0 423.0,596.0 422.5,596.0 422.0,596.0 421.5,596.0 421.0,596.0 420.5,596.0 420.0,596.0 419.5,596.0 419.0,596.0 418.5,596.0 418.0,596.0 417.5,596.0 417.0,596.0 416.5,596.0 416.0,596.0 415.5,596.0 415.0,596.0 414.5,596.0 414.0,596.0 413.5,596.0 413.0,596.0 412.5,596.0 412.0,596.0 411.5,596.0 411.0,596.0 410.5,596.0 410.0,596.0 409.5,596.0 409.0,596.0 408.5,596.0 408.0,596.0 407.5,596.0 407.0,596.0 406.5,596.0 406.0,596.0 405.5,596.0 405.0,596.0 404.5,596.0 404.0,596.0 403.5,596.0 403.0,596.0 402.5,596.0 402.0,596.0 401.5,596.0 401.0,596.0 400.5,596.0 400.0,596.0 399.5,596.0 399.0,596.0 398.5,596.0 398.0,596.1 397.5,596.1 397.0,596.1 396.5,596.1 396.0,596.1 395.5,596.1 395.0,596.1 394.5,596.1 394.0,596.1 393.5,596.1 393.0,596.1 392.5,596.1 392.0,596.1 391.5,596.1 391.0,596.1 390.5,596.1 390.0,596.1 389.5,596.1 389.0,596.1 388.5,596.1 388.0,596.1 387.5,596.1 387.0,596.1 386.5,596.1 386.0,596.1 385.5,596.1 385.0,596.1 384.5,596.1 384.0,596.1 383.5,596.1 383.0,596.1 382.5,596.1 382.0,596.1 381.5,596.1 381.0,596.1 380.5,596.1 380.0,596.1 379.5,596.1 379.0,596.1 378.5,596.1 378.0,596.1 377.5,596.1 377.0,596.1 376.5,596.1 376.0,596.1 375.5,596.1 375.0,596.1 374.5,596.1 374.0,596.1 373.5,596.1 373.0,596.1 372.5,596.1 372.0,596.1 371.5,596.1 371.0,596.1 370.5,596.1 370.0,596.1 369.5,596.1 369.0,596.1 368.5,596.1 368.0,596.1 367.5,596.1 367.0,596.1 366.5,596.1 366.0,596.1 365.5,596.1 365.0,596.1 364.5,596.1 364.0,596.1 363.5,596.1 363.0,596.1 362.5,596.1 362.0,596.1 361.5,596.1 361.0,596.1 360.5,596.1 360.0,596.1 359.5,596.1 359.0,596.1 358.5,596.1 358.0,596.1 357.5,596.1 357.0,596.1 356.5,596.1 356.0,596.1 355.5,596.1 355.0,596.1 354.5,596.1 354.0,596.1 353.5,596.1 353.0,596.1 352.5,596.1 352.0,596.1 351.5,596.1 351.0,596.1 350.5,596.1 350.0,596.1 349.5,596.1 349.0,596.1 348.5,596.1 348.0,596.1 347.5,596.1 347.0,596.1 346.5,596.1 346.0,596.1 345.5,596.2 345.0,596.2 344.5,596.2 344.0,596.2 343.5,596.2 343.0,596.2 342.5,596.2 342.0,596.2 341.5,596.2 341.0,596.2 340.5,596.2 340.0,596.2 339.5,596.2 339.0,596.2 338.5,596.2 338.0,596.2 337.5,596.2 337.0,596.2 336.5,596.2 336.0,596.2 335.5,596.2 335.0,596.2 334.5,596.2 334.0,596.2 333.5,596.2 333.0,596.2 332.5,596.2 332.0,596.2 331.5,596.2 331.0,596.2 330.5,596.2 330.0,596.2 329.5,596.2 329.0,596.2 328.5,596.2 328.0,596.2 327.5,596.2 327.0,596.2 326.5,596.2 326.0,596.2 325.5,596.2 325.0,596.2 324.5,596.2 324.0,596.2 323.5,596.2 323.0,596.2 322.5,596.2 322.0,596.2 321.5,596.2 321.0,596.2 320.5,596.2 320.0,596.2 319.5,596.2 319.0,596.2 318.5,596.2 318.0,596.2 317.5,596.2 317.0,596.2 316.5,596.2 316.0,596.2 315.5,596.2 315.0,596.2 314.5,596.2 314.0,596.2 313.5,596.2 313.0,596.2 312.5,596.2 312.0,596.2 311.5,596.2 311.0,596.2 310.5,596.2 310.0,596.2 309.5,596.2 309.0,596.2 308.5,596.2 308.0,596.2 307.5,596.2 307.0,596.2 306.5,596.2 306.0,596.2 305.5,596.2 305.0,596.2 304.5,596.2 304.0,596.2 303.5,596.2 303.0,596.2 302.5,596.2 302.0,596.2 301.5,596.2 301.0,596.2 300.5,596.2 300.0,596.2 299.5,596.2 299.0,596.2 298.5,596.2 298.0,596.2 297.5,596.2 297.0,596.3 296.5,596.3 296.0,596.3 295.5,596.3 295.0,596.3 294.5,596.3 294.0,596.3 293.5,596.3 293.0,596.3 292.5,596.3 292.0,596.3 291.5,596.3 291.0,596.3 290.5,596.3 290.0,596.3 289.5,596.3 289.0,596.3 288.5,596.3 288.0,596.3 287.5,596.3 287.0,596.3 286.5,596.3 286.0,596.3 285.5,596.3 285.0,596.3 284.5,596.3 284.0,596.3 283.5,596.3 283.0,596.3 282.5,596.3 282.0,596.3 281.5,596.3 281.0,596.3 280.5,596.3 280.0,596.3 279.5,596.3 279.0,596.3 278.5,596.3 278.0,596.3 277.5,596.3 277.0,596.3 276.5,596.3 276.0,596.3 275.5,596.3 275.0,596.3 274.5,596.3 274.0,596.3 273.5,596.3 273.0,596.3 272.5,596.4 272.0,596.7 271.5,597.0 271.0,597.3 270.5,597.6 270.0,597.9 269.5,598.2 269.0,598.5 268.5,598.8 268.0,599.1 267.5,599.3 267.0,599.6 266.5,599.9 266.0,600.2 265.5,600.5 265.0,600.6 264.5,600.8 264.0,601.0 263.5,601.2 263.0,601.3 262.5,601.5 262.0,601.7 261.5,601.9 261.0,602.0 260.5,602.2 260.0,602.4 259.5,602.6 259.0,602.7" fill="#cce2c6"/>
<polygon points="799.0,546.6 799.5,548.8 800.0,551.0 800.5,552.4 801.0,553.7 801.5,555.0 802.0,556.4 802.5,559.3 803.0,562.1 803.5,565.0 804.0,567.8 804.5,570.1 805.0,570.1 805.5,570.1 806.0,570.1 806.5,570.1 807.0,570.1 807.5,570.1 808.0,570.1 808.5,570.1 809.0,570.1 809.5,570.1 810.0,570.1 810.5,570.1 811.0,570.1 811.5,570.1 812.0,570.1 812.5,570.1 813.0,570.1 813.5,570.1 814.0,570.1 814.5,570.1 815.0,570.1 815.5,570.1 816.0,570.1 816.5,570.2 817.0,570.4 817.5,570.6 818.0,570.8 818.5,571.0 819.0,571.3 819.5,571.5 820.0,571.7 820.5,571.9 821.0,572.1 821.5,572.3 822.0,572.5 822.5,572.7 823.0,572.9 823.5,573.1 824.0,573.3 824.5,573.4 825.0,573.6 825.5,573.7 826.0,573.9 826.5,574.1 827.0,574.2 827.5,574.4 828.0,574.5 828.5,574.7 829.0,574.9 829.5,575.0 830.0,575.1 830.5,575.2 831.0,575.3 831.5,575.4 832.0,575.5 832.5,575.6 833.0,575.7 833.5,575.8 834.0,575.9 834.5,576.0 835.0,576.1 835.5,576.2 836.0,576.3 836.5,576.4 837.0,576.6 837.5,576.7 838.0,576.8 838.5,576.9 839.0,577.0 839.5,577.2 840.0,577.5 840.5,577.8 841.0,578.2 841.5,578.5 842.0,578.8 842.5,579.2 843.0,579.5 843.5,579.8 844.0,580.1 844.5,580.5 845.0,580.8 845.5,581.1 846.0,581.4 846.5,581.8 847.0,582.1 847.5,582.4 848.0,582.7 848.5,583.1 849.0,583.4 849.5,583.8 850.0,584.2 850.5,584.6 851.0,585.1 851.5,585.5 852.0,585.9 852.5,586.3 853.0,586.7 853.5,587.1 854.0,587.5 854.5,588.0 855.0,588.4 855.5,588.8 856.0,589.2 856.5,589.6 857.0,590.0 857.5,590.5 858.0,590.8 858.5,591.2 859.0,591.5 859.5,591.8 860.0,592.1 860.5,592.4 861.0,592.8 861.5,593.1 862.0,593.4 862.5,593.7 863.0,594.1 863.5,594.4 864.0,594.7 864.5,595.0 865.0,595.2 865.5,595.3 866.0,595.5 866.5,595.6 867.0,595.7 867.5,595.8 868.0,596.0 868.5,596.1 869.0,596.2 869.5,596.3 870.0,596.5 870.5,596.6 871.0,596.6 871.5,596.6 872.0,596.6 872.5,596.6 873.0,596.6 873.5,596.6 874.0,596.6 874.5,596.6 875.0,596.6 875.5,596.6 876.0,596.6 876.5,596.6 877.0,596.6 877.5,596.6 878.0,596.6 878.5,596.6 879.0,596.6 879.5,596.6 880.0,596.6 880.5,596.6 881.0,596.6 881.5,596.6 882.0,596.6 882.5,596.6 883.0,596.6 883.5,596.7 884.0,596.9 884.5,597.1 885.0,597.3 885.5,597.5 886.0,597.7 886.5,597.9 887.0,598.1 887.5,598.3 888.0,598.5 888.5,598.3 889.0,598.1 889.5,597.9 890.0,597.7 890.5,597.5 891.0,597.3 891.5,597.1 892.0,596.9 892.5,596.7 893.0,596.5 893.5,596.3 894.0,596.1 894.5,595.9 895.0,595.7 895.5,595.5 896.0,595.3 896.5,595.1 897.0,594.9 897.5,594.7 898.0,594.5 898.5,594.3 899.0,594.1 899.5,593.9 900.0,593.7 900.5,593.5 901.0,593.3 901.5,593.1 902.0,592.9 902.5,592.7 903.0,592.5 903.5,592.3 904.0,592.2 904.5,592.3 905.0,592.3 905.5,592.3 906.0,592.4 906.5,592.4 907.0,592.5 907.5,592.5 908.0,592.6 908.5,592.6 909.0,592.6 909.5,592.7 910.0,592.7 910.5,592.8 911.0,592.8 911.5,592.8 912.0,592.9 912.5,592.9 913.0,593.0 913.5,593.0 914.0,593.1 914.5,593.1 915.0,593.1 915.5,593.2 916.0,593.2 916.5,593.3 917.0,593.3 917.5,593.4 918.0,593.4 918.5,593.4 919.0,593.5 919.5,593.5 920.0,593.6 920.5,593.6 921.0,593.9 921.5,594.1 922.0,594.3 922.5,594.6 923.0,594.8 923.5,595.0 924.0,595.2 924.5,595.5 925.0,595.7 925.5,595.9 926.0,596.2 926.5,596.4 927.0,596.6 927.5,596.8 928.0,597.1 928.5,597.3 929.0,597.5 929.5,597.7 930.0,598.0 930.5,598.2 931.0,598.4 931.5,598.7 932.0,598.9 932.5,599.1 933.0,599.3 933.5,599.6 934.0,599.8 934.5,600.0 935.0,600.3 935.5,600.2 936.0,600.1 936.5,599.9 937.0,599.8 937.5,599.7 938.0,599.5 938.5,599.4 939.0,599.3 939.5,599.1 940.0,599.0 940.5,598.9 941.0,598.7 941.5,598.6 942.0,598.4 942.5,598.3 943.0,598.2 943.5,598.0 944.0,597.9 944.5,597.8 945.0,597.6 945.5,597.5 946.0,597.3 946.5,597.2 947.0,597.1 947.5,596.9 948.0,596.8 948.5,596.6 949.0,596.5 949.5,596.4 950.0,596.2 950.5,596.1 951.0,596.0 951.5,595.8 952.0,595.7 952.5,595.5 953.0,595.4 953.5,595.3 954.0,595.1 954.5,594.9 955.0,594.7 955.5,594.5 956.0,594.3 956.5,594.1 957.0,593.8 957.5,593.6 958.0,593.4 958.5,593.2 959.0,593.0 959.5,592.8 960.0,592.6 960.5,592.3 961.0,592.1 961.5,591.9 962.0,591.7 962.5,591.5 963.0,591.3 963.5,591.0 964.0,590.8 964.5,590.6 965.0,590.4 965.5,590.2 966.0,590.0 966.5,589.8 967.0,589.5 967.5,589.3 968.0,589.1 968.5,588.9 969.0,588.7 969.5,588.5 970.0,588.2 970.5,588.0 971.0,587.7 971.5,587.5 972.0,587.2 972.5,587.0 973.0,586.7 973.5,586.5 974.0,586.2 974.5,586.0 975.0,585.7 975.5,585.5 976.0,585.2 976.5,585.0 977.0,584.8 977.5,584.5 978.0,584.3 978.5,584.0 979.0,583.8 979.5,583.5 980.0,583.3 980.5,583.0 981.0,582.8 981.5,582.5 982.0,582.3 982.5,582.0 983.0,581.9 983.5,581.9 984.0,581.8 984.5,581.7 985.0,581.6 985.5,581.5 986.0,581.4 986.5,581.4 987.0,581.3 987.5,581.2 988.0,581.1 988.5,581.0 989.0,580.9 989.5,580.9 990.0,580.8 990.5,580.7 991.0,580.6 991.5,580.5 992.0,580.4 992.5,580.4 993.0,580.3 993.5,580.2 994.0,580.1 994.5,580.0 995.0,579.9 995.5,579.9 996.0,579.8 996.5,579.7 997.0,579.6 997.5,579.5 998.0,579.4 998.5,579.4 999.0,579.3 999.5,579.2 1000.0,579.1 1000.5,579.0 1001.0,578.9 1001.5,578.8 1002.0,578.8 1002.5,578.7 1003.0,578.6 1003.5,578.5 1004.0,578.4 1004.5,578.3 1005.0,578.2 1005.5,578.1 1006.0,578.1 1006.5,578.0 1007.0,577.9 1007.5,577.8 1008.0,577.7 1008.5,577.6 1009.0,577.5 1009.5,577.4 1010.0,577.4 1010.5,577.3 1011.0,577.2 1011.5,577.1 1012.0,577.0 1012.5,576.9 1013.0,576.8 1013.5,576.7 1014.0,576.6 1014.5,576.6 1015.0,576.5 1015.5,576.4 1016.0,576.3 1016.5,576.2 1017.0,576.1 1017.5,576.0 1018.0,576.0 1018.5,575.9 1019.0,575.8 1019.5,575.7 1020.0,575.6 1020.5,575.2 1021.0,574.8 1021.5,574.3 1022.0,573.9 1022.5,573.5 1023.0,573.1 1023.5,572.7 1024.0,572.2 1024.5,571.8 1025.0,571.4 1025.5,571.0 1026.0,570.6 1026.5,570.3 1027.0,570.0 1027.5,569.8 1028.0,569.6 1028.5,569.4 1029.0,569.1 1029.5,568.9 1030.0,568.7 1030.5,568.4 1031.0,568.2 1031.5,568.0 1032.0,567.8 1032.5,567.5 1033.0,567.3 1033.5,567.1 1034.0,566.8 1034.5,566.6 1035.0,566.4 1035.5,566.2 1036.0,565.9 1036.5,565.7 1037.0,565.5 1037.5,565.3 1038.0,565.0 1038.5,564.8 1039.0,564.6 1039.5,564.3 1040.0,564.1 1040.5,563.9 1041.0,563.8 1041.5,563.8 1042.0,563.8 1042.5,563.8 1043.0,563.8 1043.0,563.8 1042.5,563.3 1042.0,563.0 1041.5,562.7 1041.0,562.4 1040.5,562.1 1040.0,561.8 1039.5,561.5 1039.0,561.1 1038.5,560.8 1038.0,560.5 1037.5,560.2 1037.0,559.9 1036.5,559.6 1036.0,559.3 1035.5,559.0 1035.0,558.7 1034.5,558.4 1034.0,558.0 1033.5,557.7 1033.0,557.4 1032.5,557.2 1032.0,557.1 1031.5,557.0 1031.0,556.9 1030.5,556.8 1030.0,556.7 1029.5,556.6 1029.0,556.5 1028.5,556.4 1028.0,556.4 1027.5,556.4 1027.0,556.4 1026.5,556.4 1026.0,556.4 1025.5,556.4 1025.0,556.4 1024.5,556.4 1024.0,556.4 1023.5,556.4 1023.0,556.4 1022.5,556.4 1022.0,556.4 1021.5,556.4 1021.0,556.4 1020.5,556.4 1020.0,556.4 1019.5,556.4 1019.0,556.4 1018.5,556.4 1018.0,556.4 1017.5,556.4 1017.0,556.4 1016.5,556.4 1016.0,556.4 1015.5,556.4 1015.0,556.4 1014.5,556.4 1014.0,556.4 1013.5,556.4 1013.0,556.4 1012.5,556.4 1012.0,556.4 1011.5,556.4 1011.0,556.4 1010.5,556.4 1010.0,556.4 1009.5,556.4 1009.0,556.4 1008.5,556.4 1008.0,556.3 1007.5,556.3 1007.0,556.3 1006.5,556.3 1006.0,556.3 1005.5,556.3 1005.0,556.3 1004.5,556.3 1004.0,556.3 1003.5,556.3 1003.0,556.3 1002.5,556.3 1002.0,556.3 1001.5,556.3 1001.0,556.3 1000.5,556.3 1000.0,556.3 999.5,556.3 999.0,556.3 998.5,556.3 998.0,556.3 997.5,556.3 997.0,556.3 996.5,556.3 996.0,556.3 995.5,556.3 995.0,556.3 994.5,556.3 994.0,556.3 993.5,556.3 993.0,556.3 992.5,556.3 992.0,556.3 991.5,556.3 991.0,556.3 990.5,556.3 990.0,556.3 989.5,556.3 989.0,556.3 988.5,556.3 988.0,556.3 987.5,556.3 987.0,556.3 986.5,556.3 986.0,556.3 985.5,556.3 985.0,556.3 984.5,556.3 984.0,556.3 983.5,556.3 983.0,556.3 982.5,556.3 982.0,556.3 981.5,556.3 981.0,556.3 980.5,556.3 980.0,556.3 979.5,556.3 979.0,556.3 978.5,556.3 978.0,556.3 977.5,556.3 977.0,556.3 976.5,556.3 976.0,556.3 975.5,556.3 975.0,556.3 974.5,556.3 974.0,556.3 973.5,556.3 973.0,556.3 972.5,556.3 972.0,556.3 971.5,556.3 971.0,556.3 970.5,556.3 970.0,556.3 969.5,556.3 969.0,556.3 968.5,556.3 968.0,556.3 967.5,556.2 967.0,556.2 966.5,556.2 966.0,556.2 965.5,556.2 965.0,556.2 964.5,556.2 964.0,556.2 963.5,556.2 963.0,556.2 962.5,556.2 962.0,556.2 961.5,556.2 961.0,556.2 960.5,556.2 960.0,556.2 959.5,556.2 959.0,556.2 958.5,556.2 958.0,556.2 957.5,556.2 957.0,556.2 956.5,556.2 956.0,556.2 955.5,556.2 955.0,556.2 954.5,556.2 954.0,556.2 953.5,556.2 953.0,556.2 952.5,556.2 952.0,556.2 951.5,556.2 951.0,556.2 950.5,556.2 950.0,556.2 949.5,556.2 949.0,556.2 948.5,556.2 948.0,556.2 947.5,556.2 947.0,556.2 946.5,556.2 946.0,556.2 945.5,556.2 945.0,556.2 944.5,556.2 944.0,556.2 943.5,556.2 943.0,556.2 942.5,556.2 942.0,556.2 941.5,556.2 941.0,556.2 940.5,556.2 940.0,556.2 939.5,556.2 939.0,556.2 938.5,556.2 938.0,556.2 937.5,556.2 937.0,556.2 936.5,556.2 936.0,556.2 935.5,556.2 935.0,556.2 934.5,556.2 934.0,556.2 933.5,556.2 933.0,556.2 932.5,556.2 932.0,556.2 931.5,556.2 931.0,556.2 930.5,556.2 930.0,556.2 929.5,556.2 929.0,556.2 928.5,556.2 928.0,556.2 927.5,556.1 927.0,556.1 926.5,556.1 926.0,556.1 925.5,556.1 925.0,556.1 924.5,556.1 924.0,556.1 923.5,556.1 923.0,556.1 922.5,556.1 922.0,556.1 921.5,556.1 921.0,556.1 920.5,556.1 920.0,556.1 919.5,556.1 919.0,556.1 918.5,556.1 918.0,556.1 917.5,556.1 917.0,556.1 916.5,556.1 916.0,556.1 915.5,556.1 915.0,556.1 914.5,556.1 914.0,556.1 913.5,556.1 913.0,556.1 912.5,556.1 912.0,556.1 911.5,556.1 911.0,556.1 910.5,556.1 910.0,556.1 909.5,556.1 909.0,556.1 908.5,556.1 908.0,556.1 907.5,556.1 907.0,556.1 906.5,556.1 906.0,556.1 905.5,556.1 905.0,556.1 904.5,556.1 904.0,556.1 903.5,556.1 903.0,556.1 902.5,556.1 902.0,556.1 901.5,556.1 901.0,556.1 900.5,556.1 900.0,556.1 899.5,556.1 899.0,556.1 898.5,556.1 898.0,556.1 897.5,556.1 897.0,556.1 896.5,556.1 896.0,556.1 895.5,556.1 895.0,556.1 894.5,556.1 894.0,556.1 893.5,556.1 893.0,556.1 892.5,556.1 892.0,556.1 891.5,556.1 891.0,556.1 890.5,556.1 890.0,556.1 889.5,556.1 889.0,556.1 888.5,556.1 888.0,556.1 887.5,556.1 887.0,556.0 886.5,556.0 886.0,556.0 885.5,556.0 885.0,556.0 884.5,556.0 884.0,556.0 883.5,556.0 883.0,556.0 882.5,556.0 882.0,556.0 881.5,556.0 881.0,556.0 880.5,556.0 880.0,556.0 879.5,556.0 879.0,556.0 878.5,556.0 878.0,556.0 877.5,556.0 877.0,556.0 876.5,556.0 876.0,556.0 875.5,556.0 875.0,556.0 874.5,556.0 874.0,556.0 873.5,556.0 873.0,556.0 872.5,556.0 872.0,556.0 871.5,556.0 871.0,556.0 870.5,556.0 870.0,556.0 869.5,556.0 869.0,556.0 868.5,556.0 868.0,556.0 867.5,556.0 867.0,556.0 866.5,556.0 866.0,556.0 865.5,556.0 865.0,556.0 864.5,556.0 864.0,556.0 863.5,556.0 863.0,556.0 862.5,556.0 862.0,556.0 861.5,556.0 861.0,556.0 860.5,556.0 860.0,556.0 859.5,556.0 859.0,556.0 858.5,556.0 858.0,556.0 857.5,556.0 857.0,556.0 856.5,556.0 856.0,556.0 855.5,556.0 855.0,556.0 854.5,556.0 854.0,556.0 853.5,556.0 853.0,556.0 852.5,556.0 852.0,556.0 851.5,556.0 851.0,556.0 850.5,556.0 850.0,556.0 849.5,556.0 849.0,556.0 848.5,556.0 848.0,556.0 847.5,556.0 847.0,556.0 846.5,555.9 846.0,555.9 845.5,555.9 845.0,555.9 844.5,555.9 844.0,555.9 843.5,555.9 843.0,555.9 842.5,555.9 842.0,555.9 841.5,555.9 841.0,555.9 840.5,555.9 840.0,555.9 839.5,555.9 839.0,555.9 838.5,555.9 838.0,555.9 837.5,555.9 837.0,555.9 836.5,555.9 836.0,555.9 835.5,555.9 835.0,555.9 834.5,555.9 834.0,555.9 833.5,555.9 833.0,555.9 832.5,555.9 832.0,555.9 831.5,555.9 831.0,555.9 830.5,555.9 830.0,555.9 829.5,555.9 829.0,555.9 828.5,555.9 828.0,555.9 827.5,555.9 827.0,555.9 826.5,555.9 826.0,555.8 825.5,555.8 825.0,555.7 824.5,555.6 824.0,555.6 823.5,555.5 823.0,555.5 822.5,555.4 822.0,555.3 821.5,555.3 821.0,555.2 820.5,555.1 820.0,555.1 819.5,555.0 819.0,554.9 818.5,554.9 818.0,554.8 817.5,554.7 817.0,554.7 816.5,554.6 816.0,554.5 815.5,554.5 815.0,554.4 814.5,554.3 814.0,554.3 813.5,554.2 813.0,554.1 812.5,554.1 812.0,554.0 811.5,553.9 811.0,553.9 810.5,553.8 810.0,553.7 809.5,553.7 809.0,553.6 808.5,553.5 808.0,553.5 807.5,553.4 807.0,553.3 806.5,553.3 806.0,553.2 805.5,553.1 805.0,553.1 804.5,553.0 804.0,552.5 803.5,551.9 803.0,551.3 802.5,550.7 802.0,550.1 801.5,549.4 801.0,548.8 800.5,548.2 800.0,547.6 799.5,547.0 799.0,546.5" fill="#f6d5a2"/>
<polygon points="1043.0,563.8 1043.5,563.8 1044.0,563.7 1044.5,563.7 1045.0,563.7 1045.5,563.7 1046.0,563.7 1046.5,563.7 1047.0,563.7 1047.5,563.7 1048.0,563.7 1048.5,563.7 1049.0,563.7 1049.5,563.7 1050.0,563.6 1050.5,563.6 1051.0,563.6 1051.5,563.6 1052.0,563.6 1052.5,563.6 1053.0,563.6 1053.5,563.6 1054.0,563.6 1054.5,563.6 1055.0,563.6 1055.5,563.6 1056.0,563.5 1056.5,563.5 1057.0,563.5 1057.5,563.5 1058.0,563.5 1058.5,563.5 1059.0,563.4 1059.5,563.1 1060.0,562.9 1060.5,562.7 1061.0,562.4 1061.5,562.2 1062.0,562.0 1062.5,561.8 1063.0,561.5 1063.5,561.3 1064.0,561.1 1064.5,560.8 1065.0,560.6 1065.5,560.6 1066.0,560.5 1066.5,560.5 1067.0,560.5 1067.5,560.4 1068.0,560.4 1068.5,560.3 1069.0,560.3 1069.5,560.3 1070.0,560.2 1070.5,560.2 1071.0,560.2 1071.5,560.1 1072.0,560.1 1072.5,560.0 1073.0,560.0 1073.5,560.0 1074.0,559.9 1074.5,559.9 1075.0,559.9 1075.5,559.8 1076.0,559.8 1076.5,559.7 1077.0,559.7 1077.5,559.7 1078.0,559.6 1078.5,559.6 1079.0,559.6 1079.5,559.5 1080.0,559.5 1080.5,559.5 1081.0,559.4 1081.5,559.4 1082.0,559.3 1082.5,559.3 1083.0,559.3 1083.5,559.2 1084.0,559.2 1084.5,559.2 1085.0,559.1 1085.5,559.1 1086.0,559.0 1086.5,559.0 1087.0,558.9 1087.5,558.7 1088.0,558.5 1088.5,558.3 1089.0,558.1 1089.5,558.0 1090.0,557.8 1090.5,557.6 1091.0,557.4 1091.5,557.2 1092.0,557.0 1092.5,556.9 1093.0,556.7 1093.5,556.5 1094.0,556.3 1094.5,556.1 1095.0,556.0 1095.5,555.8 1096.0,555.6 1096.5,555.4 1097.0,555.2 1097.5,555.1 1098.0,554.9 1098.5,554.7 1099.0,554.5 1099.5,554.3 1100.0,554.2 1100.5,554.0 1101.0,553.8 1101.5,553.6 1102.0,553.4 1102.5,553.5 1103.0,553.7 1103.5,553.9 1104.0,554.0 1104.5,554.2 1105.0,554.4 1105.5,554.5 1106.0,554.7 1106.5,554.9 1107.0,555.0 1107.5,555.2 1108.0,555.4 1108.5,555.5 1109.0,555.7 1109.5,555.9 1110.0,556.0 1110.5,556.2 1111.0,556.4 1111.5,556.5 1112.0,556.4 1112.5,556.4 1113.0,556.3 1113.5,556.3 1114.0,556.2 1114.5,556.2 1115.0,556.2 1115.5,556.1 1116.0,556.1 1116.5,556.0 1117.0,556.0 1117.5,555.9 1118.0,555.9 1118.5,555.8 1119.0,555.8 1119.5,555.7 1120.0,555.7 1120.5,555.6 1121.0,555.6 1121.5,555.5 1122.0,555.5 1122.5,555.4 1123.0,555.4 1123.5,555.3 1124.0,555.3 1124.5,555.2 1125.0,555.2 1125.5,555.1 1126.0,555.1 1126.5,555.0 1127.0,554.9 1127.5,554.6 1128.0,554.2 1128.5,553.9 1129.0,553.6 1129.5,553.2 1130.0,552.9 1130.5,552.5 1131.0,552.2 1131.5,551.8 1132.0,551.5 1132.5,551.1 1133.0,550.8 1133.5,550.5 1134.0,550.1 1134.5,549.8 1135.0,547.7 1135.5,545.2 1136.0,542.7 1136.5,540.2 1137.0,537.7 1137.5,535.2 1138.0,532.8 1138.5,530.3 1139.0,527.8 1139.5,525.3 1140.0,522.8 1140.5,520.3 1141.0,518.8 1141.5,518.8 1142.0,518.8 1142.5,518.8 1143.0,518.8 1143.5,518.8 1144.0,518.8 1144.5,518.8 1145.0,518.8 1145.5,518.8 1146.0,518.8 1146.5,518.8 1147.0,518.8 1147.5,518.8 1148.0,518.8 1148.5,518.8 1149.0,518.8 1149.5,518.8 1150.0,518.8 1150.5,518.6 1151.0,518.4 1151.5,518.2 1152.0,518.0 1152.5,517.8 1153.0,517.6 1153.5,517.4 1154.0,517.2 1154.5,516.9 1155.0,516.7 1155.5,516.5 1156.0,516.3 1156.5,516.1 1157.0,515.9 1157.5,515.7 1158.0,515.5 1158.5,515.3 1159.0,515.1 1159.5,514.8 1160.0,514.6 1160.5,514.4 1161.0,514.2 1161.5,514.0 1162.0,513.8 1162.5,513.6 1163.0,513.4 1163.0,552.1 1162.5,552.3 1162.0,552.6 1161.5,552.8 1161.0,553.0 1160.5,553.3 1160.0,553.5 1159.5,553.7 1159.0,554.0 1158.5,554.2 1158.0,554.4 1157.5,554.7 1157.0,554.9 1156.5,555.2 1156.0,555.3 1155.5,555.3 1155.0,555.3 1154.5,555.3 1154.0,555.3 1153.5,555.3 1153.0,555.3 1152.5,555.3 1152.0,555.3 1151.5,555.3 1151.0,555.3 1150.5,555.3 1150.0,555.3 1149.5,555.3 1149.0,555.3 1148.5,555.3 1148.0,555.3 1147.5,555.3 1147.0,555.3 1146.5,555.3 1146.0,555.3 1145.5,555.3 1145.0,555.3 1144.5,555.3 1144.0,555.3 1143.5,555.3 1143.0,555.3 1142.5,555.3 1142.0,555.3 1141.5,555.3 1141.0,555.3 1140.5,556.5 1140.0,558.4 1139.5,560.3 1139.0,562.2 1138.5,564.1 1138.0,566.1 1137.5,568.0 1137.0,569.9 1136.5,571.8 1136.0,573.8 1135.5,575.7 1135.0,577.6 1134.5,579.5 1134.0,581.5 1133.5,583.4 1133.0,585.3 1132.5,585.3 1132.0,585.2 1131.5,585.2 1131.0,585.1 1130.5,585.1 1130.0,585.0 1129.5,585.0 1129.0,584.9 1128.5,584.9 1128.0,584.9 1127.5,584.8 1127.0,584.8 1126.5,584.7 1126.0,584.7 1125.5,584.6 1125.0,584.6 1124.5,584.5 1124.0,584.5 1123.5,584.5 1123.0,584.4 1122.5,584.4 1122.0,584.3 1121.5,584.3 1121.0,584.2 1120.5,584.2 1120.0,584.1 1119.5,584.1 1119.0,584.1 1118.5,584.0 1118.0,584.0 1117.5,583.9 1117.0,583.9 1116.5,583.8 1116.0,583.8 1115.5,583.7 1115.0,583.7 1114.5,583.7 1114.0,583.6 1113.5,583.6 1113.0,583.5 1112.5,583.5 1112.0,583.4 1111.5,583.4 1111.0,583.3 1110.5,583.3 1110.0,583.3 1109.5,583.2 1109.0,583.2 1108.5,583.1 1108.0,583.1 1107.5,583.0 1107.0,582.9 1106.5,582.9 1106.0,582.8 1105.5,582.8 1105.0,582.7 1104.5,582.6 1104.0,582.6 1103.5,582.5 1103.0,582.5 1102.5,582.4 1102.0,582.3 1101.5,582.3 1101.0,582.2 1100.5,582.2 1100.0,582.1 1099.5,582.0 1099.0,582.0 1098.5,581.9 1098.0,581.9 1097.5,581.8 1097.0,581.8 1096.5,581.7 1096.0,581.6 1095.5,581.6 1095.0,581.5 1094.5,581.5 1094.0,581.4 1093.5,581.3 1093.0,581.3 1092.5,581.2 1092.0,581.2 1091.5,581.1 1091.0,581.0 1090.5,581.0 1090.0,580.9 1089.5,580.9 1089.0,580.8 1088.5,580.7 1088.0,580.6 1087.5,580.4 1087.0,580.1 1086.5,579.9 1086.0,579.7 1085.5,579.4 1085.0,579.2 1084.5,578.9 1084.0,578.7 1083.5,578.5 1083.0,578.2 1082.5,578.0 1082.0,577.8 1081.5,577.5 1081.0,577.3 1080.5,577.0 1080.0,577.0 1079.5,576.9 1079.0,576.9 1078.5,576.9 1078.0,576.8 1077.5,576.8 1077.0,576.8 1076.5,576.7 1076.0,576.7 1075.5,576.6 1075.0,576.6 1074.5,576.6 1074.0,576.5 1073.5,576.5 1073.0,576.5 1072.5,576.4 1072.0,576.4 1071.5,576.4 1071.0,576.3 1070.5,576.3 1070.0,576.3 1069.5,576.2 1069.0,576.2 1068.5,576.1 1068.0,576.1 1067.5,576.1 1067.0,576.0 1066.5,576.0 1066.0,575.8 1065.5,575.5 1065.0,575.2 1064.5,575.0 1064.0,574.8 1063.5,574.5 1063.0,574.2 1062.5,574.0 1062.0,573.8 1061.5,573.5 1061.0,573.2 1060.5,573.0 1060.0,572.8 1059.5,572.5 1059.0,572.2 1058.5,572.1 1058.0,572.1 1057.5,572.1 1057.0,572.1 1056.5,572.1 1056.0,572.1 1055.5,572.1 1055.0,572.1 1054.5,572.1 1054.0,572.1 1053.5,572.1 1053.0,572.1 1052.5,572.1 1052.0,572.1 1051.5,572.1 1051.0,572.1 1050.5,572.1 1050.0,572.1 1049.5,572.1 1049.0,572.1 1048.5,571.4 1048.0,570.7 1047.5,570.0 1047.0,569.3 1046.5,568.6 1046.0,567.9 1045.5,567.2 1045.0,566.6 1044.5,565.9 1044.0,565.2 1043.5,564.5 1043.0,563.8" fill="#cce2c6"/>
</g>
<polyline points="0.0,543.3 14.8,546.0 31.3,550.6 55.3,556.2 60.8,560.8 73.8,561.7 100.0,563.1 105.5,565.2 109.7,572.1 113.8,579.7 119.3,583.1 123.5,587.3 127.6,595.6 131.8,602.5 138.7,608.7 141.4,609.7 167.7,609.7 177.3,613.5 189.8,618.4 196.7,621.1 206.4,621.5 214.0,609.7 245.0,608.7 256.1,603.9 263.0,601.1 269.2,597.7 274.0,588.7 282.3,585.2 290.6,588.0 298.0,591.0 337.4,591.0 343.7,587.6 352.0,592.4 360.3,591.4 366.5,583.0 374.2,579.5 383.4,575.3 406.5,574.4 436.5,573.7 443.4,574.9 452.6,579.5 473.3,579.5 482.6,588.2 490.6,588.2 498.8,579.4 522.8,579.4 536.0,582.7 551.3,572.9 562.2,569.6 575.4,569.6 586.3,565.2 597.2,558.6 608.2,554.3 612.0,553.4 623.5,541.8 635.1,526.4 648.9,523.4 674.2,518.8 689.2,510.7 699.6,511.2 713.4,514.2 720.3,518.1 728.4,515.3 742.0,516.5 750.3,516.1 758.0,522.0 781.0,522.0 789.7,528.2 796.3,534.7 800.0,551.0 802.0,556.4 804.4,570.1 816.2,570.1 823.5,573.1 829.4,575.0 839.2,577.0 849.0,583.4 857.8,590.7 864.6,595.1 870.5,596.6 883.2,596.6 888.1,598.5 903.8,592.2 920.4,593.6 935.1,600.3 940.0,599.0 954.1,595.1 969.4,588.5 982.6,582.0 1000.0,579.1 1020.0,575.6 1026.2,570.4 1040.7,563.8 1058.7,563.5 1065.0,560.6 1086.6,559.0 1102.1,553.4 1111.4,556.5 1126.9,555.0 1134.6,549.7 1140.8,518.8 1150.1,518.8 1163.4,513.2" fill="none" stroke="#c0682e" stroke-width="1.1"/>
<polyline points="0.0,606.0 11.0,602.4 25.8,598.6 36.9,585.7 44.3,573.7 59.0,572.8 72.0,560.8 100.0,560.4 118.0,561.7 122.1,566.6 126.2,574.9 131.8,581.8 140.0,586.2 147.0,587.6 191.2,588.0 196.7,589.4 206.4,592.1 229.8,592.5 238.1,600.4 249.2,602.2 258.8,602.8 265.7,600.4 272.7,596.3 370.0,596.1 538.2,595.8 544.7,587.1 551.3,586.0 612.1,586.3 625.8,576.4 635.1,559.1 642.0,558.0 689.2,558.0 697.3,540.2 742.0,539.5 789.7,539.1 796.3,543.5 800.0,547.6 804.4,553.0 826.4,555.9 1028.6,556.4 1032.8,557.3 1042.8,563.5 1049.0,572.1 1058.7,572.1 1066.5,576.0 1080.4,577.0 1088.2,580.7 1108.3,583.1 1133.0,585.3 1140.8,555.3 1156.2,555.3 1163.4,551.9" fill="none" stroke="#a8e4f4" stroke-width="2.4" opacity="0.7"/>
<polyline points="0.0,606.0 11.0,602.4 25.8,598.6 36.9,585.7 44.3,573.7 59.0,572.8 72.0,560.8 100.0,560.4 118.0,561.7 122.1,566.6 126.2,574.9 131.8,581.8 140.0,586.2 147.0,587.6 191.2,588.0 196.7,589.4 206.4,592.1 229.8,592.5 238.1,600.4 249.2,602.2 258.8,602.8 265.7,600.4 272.7,596.3 370.0,596.1 538.2,595.8 544.7,587.1 551.3,586.0 612.1,586.3 625.8,576.4 635.1,559.1 642.0,558.0 689.2,558.0 697.3,540.2 742.0,539.5 789.7,539.1 796.3,543.5 800.0,547.6 804.4,553.0 826.4,555.9 1028.6,556.4 1032.8,557.3 1042.8,563.5 1049.0,572.1 1058.7,572.1 1066.5,576.0 1080.4,577.0 1088.2,580.7 1108.3,583.1 1133.0,585.3 1140.8,555.3 1156.2,555.3 1163.4,551.9" fill="none" stroke="#2f8aa8" stroke-width="1.1"/>
<rect x="1" y="461.5" width="1366" height="2.4" fill="#050505"/>
<line x1="1" y1="548.6" x2="1367" y2="548.6" stroke="#111" stroke-width="1.2" stroke-dasharray="3,3"/>
<line x1="1337.5" y1="354" x2="1337.5" y2="767" stroke="#111" stroke-width="1.3" stroke-dasharray="3.2,2.6"/>
<line x1="1344.5" y1="354" x2="1344.5" y2="767" stroke="#111" stroke-width="1.3" stroke-dasharray="3.2,2.6"/>
<rect x="6.3" y="594.0" width="1.1" height="8.0" fill="#d8100e"/>
<rect x="4.3" y="594.0" width="5" height="7.8" fill="#d8100e"/>
<rect x="14.0" y="594.0" width="1.1" height="8.4" fill="#1f6fc4"/>
<rect x="12.0" y="598.7" width="5" height="3.7" fill="#1f6fc4"/>
<rect x="21.6" y="597.8" width="1.1" height="17.2" fill="#d8100e"/>
<rect x="19.6" y="597.8" width="5" height="15.6" fill="#d8100e"/>
<rect x="29.3" y="608.0" width="1.1" height="19.3" fill="#d8100e"/>
<rect x="27.3" y="611.6" width="5" height="2.0" fill="#d8100e"/>
<rect x="37.0" y="589.4" width="1.1" height="23.5" fill="#1f6fc4"/>
<rect x="35.0" y="589.4" width="5" height="23.5" fill="#1f6fc4"/>
<rect x="44.6" y="583.0" width="1.1" height="9.0" fill="#1f6fc4"/>
<rect x="42.6" y="589.0" width="5" height="2.0" fill="#1f6fc4"/>
<rect x="52.3" y="572.0" width="1.1" height="22.0" fill="#1f6fc4"/>
<rect x="50.3" y="574.7" width="5" height="16.6" fill="#1f6fc4"/>
<rect x="60.0" y="551.3" width="1.1" height="24.3" fill="#1f6fc4"/>
<rect x="58.0" y="553.9" width="5" height="21.7" fill="#1f6fc4"/>
<rect x="67.6" y="545.2" width="1.1" height="14.8" fill="#d8100e"/>
<rect x="65.6" y="553.5" width="5" height="2.0" fill="#d8100e"/>
<rect x="75.3" y="517.5" width="1.1" height="38.5" fill="#1f6fc4"/>
<rect x="73.3" y="525.8" width="5" height="29.2" fill="#1f6fc4"/>
<rect x="83.0" y="519.0" width="1.1" height="71.0" fill="#d8100e"/>
<rect x="81.0" y="525.8" width="5" height="59.1" fill="#d8100e"/>
<rect x="90.6" y="569.0" width="1.1" height="70.3" fill="#d8100e"/>
<rect x="88.6" y="583.0" width="5" height="49.8" fill="#d8100e"/>
<rect x="98.3" y="598.7" width="1.1" height="57.1" fill="#1f6fc4"/>
<rect x="96.3" y="598.7" width="5" height="34.1" fill="#1f6fc4"/>
<rect x="105.9" y="586.0" width="1.1" height="32.0" fill="#1f6fc4"/>
<rect x="103.9" y="586.7" width="5" height="12.9" fill="#1f6fc4"/>
<rect x="113.6" y="570.0" width="1.1" height="31.4" fill="#d8100e"/>
<rect x="111.6" y="585.2" width="5" height="2.0" fill="#d8100e"/>
<rect x="121.3" y="553.5" width="1.1" height="33.2" fill="#1f6fc4"/>
<rect x="119.3" y="559.0" width="5" height="27.7" fill="#1f6fc4"/>
<rect x="128.9" y="555.0" width="1.1" height="9.7" fill="#d8100e"/>
<rect x="126.9" y="559.7" width="5" height="5.0" fill="#d8100e"/>
<rect x="136.6" y="564.0" width="1.1" height="16.0" fill="#d8100e"/>
<rect x="134.6" y="564.3" width="5" height="11.1" fill="#d8100e"/>
<rect x="144.3" y="560.3" width="1.1" height="21.5" fill="#1f6fc4"/>
<rect x="142.3" y="566.2" width="5" height="10.1" fill="#1f6fc4"/>
<rect x="151.9" y="540.4" width="1.1" height="33.1" fill="#d8100e"/>
<rect x="149.9" y="566.2" width="5" height="5.5" fill="#d8100e"/>
<rect x="159.6" y="563.0" width="1.1" height="18.8" fill="#1f6fc4"/>
<rect x="157.6" y="563.4" width="5" height="8.3" fill="#1f6fc4"/>
<rect x="167.3" y="556.0" width="1.1" height="11.0" fill="#d8100e"/>
<rect x="165.3" y="562.5" width="5" height="2.7" fill="#d8100e"/>
<rect x="174.9" y="562.0" width="1.1" height="8.0" fill="#1f6fc4"/>
<rect x="172.9" y="563.5" width="5" height="2.0" fill="#1f6fc4"/>
<rect x="182.6" y="556.6" width="1.1" height="11.4" fill="#1f6fc4"/>
<rect x="180.6" y="557.9" width="5" height="4.6" fill="#1f6fc4"/>
<rect x="190.3" y="558.0" width="1.1" height="8.0" fill="#d8100e"/>
<rect x="188.3" y="558.8" width="5" height="3.7" fill="#d8100e"/>
<rect x="197.9" y="564.0" width="1.1" height="8.6" fill="#d8100e"/>
<rect x="195.9" y="564.3" width="5" height="2.2" fill="#d8100e"/>
<rect x="205.6" y="556.0" width="1.1" height="23.0" fill="#1f6fc4"/>
<rect x="203.6" y="557.9" width="5" height="8.3" fill="#1f6fc4"/>
<rect x="213.3" y="543.0" width="1.1" height="20.4" fill="#1f6fc4"/>
<rect x="211.3" y="544.0" width="5" height="14.8" fill="#1f6fc4"/>
<rect x="220.9" y="542.0" width="1.1" height="13.0" fill="#d8100e"/>
<rect x="218.9" y="544.0" width="5" height="8.3" fill="#d8100e"/>
<rect x="228.6" y="541.3" width="1.1" height="16.6" fill="#d8100e"/>
<rect x="226.6" y="551.8" width="5" height="2.9" fill="#d8100e"/>
<rect x="236.2" y="542.0" width="1.1" height="12.7" fill="#1f6fc4"/>
<rect x="234.2" y="551.0" width="5" height="3.7" fill="#1f6fc4"/>
<rect x="243.9" y="543.3" width="1.1" height="37.7" fill="#d8100e"/>
<rect x="241.9" y="551.5" width="5" height="25.8" fill="#d8100e"/>
<rect x="251.6" y="561.3" width="1.1" height="39.4" fill="#d8100e"/>
<rect x="249.6" y="576.8" width="5" height="9.4" fill="#d8100e"/>
<rect x="259.2" y="545.3" width="1.1" height="54.4" fill="#1f6fc4"/>
<rect x="257.2" y="569.6" width="5" height="21.8" fill="#1f6fc4"/>
<rect x="266.9" y="549.9" width="1.1" height="44.6" fill="#1f6fc4"/>
<rect x="264.9" y="556.1" width="5" height="13.5" fill="#1f6fc4"/>
<rect x="274.6" y="556.0" width="1.1" height="42.6" fill="#d8100e"/>
<rect x="272.6" y="556.1" width="5" height="29.0" fill="#d8100e"/>
<rect x="282.2" y="587.2" width="1.1" height="30.1" fill="#d8100e"/>
<rect x="280.2" y="590.3" width="5" height="4.2" fill="#d8100e"/>
<rect x="289.9" y="575.8" width="1.1" height="28.0" fill="#1f6fc4"/>
<rect x="287.9" y="580.0" width="5" height="14.5" fill="#1f6fc4"/>
<rect x="297.6" y="565.4" width="1.1" height="12.6" fill="#1f6fc4"/>
<rect x="295.6" y="568.1" width="5" height="9.8" fill="#1f6fc4"/>
<rect x="305.2" y="568.0" width="1.1" height="24.4" fill="#d8100e"/>
<rect x="303.2" y="568.1" width="5" height="14.9" fill="#d8100e"/>
<rect x="312.9" y="581.0" width="1.1" height="10.4" fill="#1f6fc4"/>
<rect x="310.9" y="581.0" width="5" height="2.0" fill="#1f6fc4"/>
<rect x="320.6" y="570.6" width="1.1" height="6.7" fill="#1f6fc4"/>
<rect x="318.6" y="573.3" width="5" height="4.0" fill="#1f6fc4"/>
<rect x="328.2" y="564.0" width="1.1" height="17.0" fill="#1f6fc4"/>
<rect x="326.2" y="569.6" width="5" height="3.5" fill="#1f6fc4"/>
<rect x="335.9" y="557.1" width="1.1" height="13.5" fill="#1f6fc4"/>
<rect x="333.9" y="561.9" width="5" height="8.7" fill="#1f6fc4"/>
<rect x="343.6" y="542.0" width="1.1" height="20.3" fill="#1f6fc4"/>
<rect x="341.6" y="542.0" width="5" height="20.3" fill="#1f6fc4"/>
<rect x="351.2" y="539.5" width="1.1" height="11.5" fill="#d8100e"/>
<rect x="349.2" y="541.6" width="5" height="6.2" fill="#d8100e"/>
<rect x="358.9" y="542.6" width="1.1" height="7.4" fill="#d8100e"/>
<rect x="356.9" y="547.8" width="5" height="2.2" fill="#d8100e"/>
<rect x="366.6" y="547.0" width="1.1" height="7.0" fill="#d8100e"/>
<rect x="364.6" y="547.4" width="5" height="2.6" fill="#d8100e"/>
<rect x="374.2" y="543.8" width="1.1" height="8.0" fill="#1f6fc4"/>
<rect x="372.2" y="543.8" width="5" height="5.7" fill="#1f6fc4"/>
<rect x="381.9" y="532.2" width="1.1" height="25.4" fill="#1f6fc4"/>
<rect x="379.9" y="534.5" width="5" height="10.4" fill="#1f6fc4"/>
<rect x="389.6" y="534.5" width="1.1" height="15.0" fill="#d8100e"/>
<rect x="387.6" y="534.5" width="5" height="15.0" fill="#d8100e"/>
<rect x="397.2" y="528.8" width="1.1" height="19.6" fill="#1f6fc4"/>
<rect x="395.2" y="531.0" width="5" height="17.4" fill="#1f6fc4"/>
<rect x="404.9" y="523.0" width="1.1" height="9.9" fill="#1f6fc4"/>
<rect x="402.9" y="528.8" width="5" height="4.1" fill="#1f6fc4"/>
<rect x="412.5" y="529.0" width="1.1" height="9.0" fill="#d8100e"/>
<rect x="410.5" y="529.2" width="5" height="2.0" fill="#d8100e"/>
<rect x="420.2" y="504.6" width="1.1" height="26.0" fill="#1f6fc4"/>
<rect x="418.2" y="508.5" width="5" height="22.1" fill="#1f6fc4"/>
<rect x="427.9" y="493.0" width="1.1" height="23.0" fill="#1f6fc4"/>
<rect x="425.9" y="494.7" width="5" height="14.5" fill="#1f6fc4"/>
<rect x="435.5" y="464.2" width="1.1" height="32.3" fill="#1f6fc4"/>
<rect x="433.5" y="468.8" width="5" height="27.7" fill="#1f6fc4"/>
<rect x="443.2" y="465.9" width="1.1" height="34.7" fill="#d8100e"/>
<rect x="441.2" y="469.0" width="5" height="18.7" fill="#d8100e"/>
<rect x="450.9" y="476.3" width="1.1" height="50.3" fill="#d8100e"/>
<rect x="448.9" y="487.2" width="5" height="23.3" fill="#d8100e"/>
<rect x="458.5" y="494.9" width="1.1" height="22.9" fill="#1f6fc4"/>
<rect x="456.5" y="498.0" width="5" height="12.5" fill="#1f6fc4"/>
<rect x="466.2" y="493.2" width="1.1" height="27.7" fill="#d8100e"/>
<rect x="464.2" y="498.0" width="5" height="2.1" fill="#d8100e"/>
<rect x="473.9" y="501.2" width="1.1" height="25.4" fill="#d8100e"/>
<rect x="471.9" y="502.2" width="5" height="4.7" fill="#d8100e"/>
<rect x="481.5" y="506.0" width="1.1" height="9.7" fill="#d8100e"/>
<rect x="479.5" y="506.3" width="5" height="2.1" fill="#d8100e"/>
<rect x="489.2" y="502.2" width="1.1" height="18.7" fill="#d8100e"/>
<rect x="487.2" y="515.2" width="5" height="3.6" fill="#d8100e"/>
<rect x="496.9" y="511.0" width="1.1" height="15.6" fill="#d8100e"/>
<rect x="494.9" y="518.3" width="5" height="2.6" fill="#d8100e"/>
<rect x="504.5" y="512.0" width="1.1" height="21.8" fill="#1f6fc4"/>
<rect x="502.5" y="515.2" width="5" height="5.2" fill="#1f6fc4"/>
<rect x="512.2" y="513.6" width="1.1" height="14.0" fill="#d8100e"/>
<rect x="510.2" y="515.2" width="5" height="9.3" fill="#d8100e"/>
<rect x="519.9" y="519.0" width="1.1" height="10.7" fill="#1f6fc4"/>
<rect x="517.9" y="519.3" width="5" height="7.3" fill="#1f6fc4"/>
<rect x="527.5" y="514.1" width="1.1" height="8.9" fill="#1f6fc4"/>
<rect x="525.5" y="515.7" width="5" height="4.1" fill="#1f6fc4"/>
<rect x="535.2" y="516.0" width="1.1" height="22.5" fill="#d8100e"/>
<rect x="533.2" y="516.2" width="5" height="18.7" fill="#d8100e"/>
<rect x="542.8" y="533.9" width="1.1" height="9.4" fill="#d8100e"/>
<rect x="540.8" y="533.9" width="5" height="7.2" fill="#d8100e"/>
<rect x="550.5" y="533.0" width="1.1" height="7.5" fill="#1f6fc4"/>
<rect x="548.5" y="533.0" width="5" height="7.5" fill="#1f6fc4"/>
<rect x="558.2" y="533.0" width="1.1" height="22.0" fill="#d8100e"/>
<rect x="556.2" y="533.4" width="5" height="17.0" fill="#d8100e"/>
<rect x="565.8" y="543.0" width="1.1" height="12.0" fill="#1f6fc4"/>
<rect x="563.8" y="544.9" width="5" height="5.5" fill="#1f6fc4"/>
<rect x="573.5" y="541.2" width="1.1" height="8.3" fill="#d8100e"/>
<rect x="571.5" y="544.9" width="5" height="3.2" fill="#d8100e"/>
<rect x="581.2" y="545.8" width="1.1" height="4.6" fill="#1f6fc4"/>
<rect x="579.2" y="545.8" width="5" height="4.6" fill="#1f6fc4"/>
<rect x="588.8" y="536.1" width="1.1" height="31.8" fill="#d8100e"/>
<rect x="586.8" y="545.8" width="5" height="20.2" fill="#d8100e"/>
<rect x="596.5" y="561.9" width="1.1" height="18.9" fill="#d8100e"/>
<rect x="594.5" y="565.1" width="5" height="10.6" fill="#d8100e"/>
<rect x="604.2" y="575.0" width="1.1" height="70.0" fill="#d8100e"/>
<rect x="602.2" y="575.3" width="5" height="52.3" fill="#d8100e"/>
<rect x="611.8" y="597.0" width="1.1" height="43.7" fill="#1f6fc4"/>
<rect x="609.8" y="621.4" width="5" height="5.7" fill="#1f6fc4"/>
<rect x="619.5" y="608.7" width="1.1" height="37.6" fill="#d8100e"/>
<rect x="617.5" y="622.5" width="5" height="21.9" fill="#d8100e"/>
<rect x="627.2" y="621.4" width="1.1" height="29.9" fill="#1f6fc4"/>
<rect x="625.2" y="635.2" width="5" height="9.2" fill="#1f6fc4"/>
<rect x="634.8" y="597.2" width="1.1" height="41.5" fill="#1f6fc4"/>
<rect x="632.8" y="601.1" width="5" height="35.3" fill="#1f6fc4"/>
<rect x="642.5" y="582.2" width="1.1" height="31.1" fill="#1f6fc4"/>
<rect x="640.5" y="591.4" width="5" height="10.4" fill="#1f6fc4"/>
<rect x="650.2" y="579.0" width="1.1" height="22.8" fill="#1f6fc4"/>
<rect x="648.2" y="579.4" width="5" height="12.5" fill="#1f6fc4"/>
<rect x="657.8" y="578.0" width="1.1" height="12.2" fill="#d8100e"/>
<rect x="655.8" y="579.9" width="5" height="10.3" fill="#d8100e"/>
<rect x="665.5" y="590.2" width="1.1" height="16.2" fill="#d8100e"/>
<rect x="663.5" y="590.2" width="5" height="16.2" fill="#d8100e"/>
<rect x="673.2" y="605.7" width="1.1" height="19.1" fill="#d8100e"/>
<rect x="671.2" y="605.7" width="5" height="19.1" fill="#d8100e"/>
<rect x="680.8" y="612.1" width="1.1" height="15.0" fill="#1f6fc4"/>
<rect x="678.8" y="615.6" width="5" height="9.2" fill="#1f6fc4"/>
<rect x="688.5" y="615.0" width="1.1" height="7.5" fill="#d8100e"/>
<rect x="686.5" y="615.6" width="5" height="4.6" fill="#d8100e"/>
<rect x="696.1" y="613.3" width="1.1" height="6.2" fill="#1f6fc4"/>
<rect x="694.1" y="616.3" width="5" height="3.2" fill="#1f6fc4"/>
<rect x="703.8" y="611.0" width="1.1" height="8.0" fill="#1f6fc4"/>
<rect x="701.8" y="611.0" width="5" height="5.8" fill="#1f6fc4"/>
<rect x="711.5" y="596.0" width="1.1" height="19.6" fill="#1f6fc4"/>
<rect x="709.5" y="597.9" width="5" height="14.2" fill="#1f6fc4"/>
<rect x="719.1" y="591.9" width="1.1" height="10.6" fill="#d8100e"/>
<rect x="717.1" y="597.9" width="5" height="4.6" fill="#d8100e"/>
<rect x="726.8" y="602.9" width="1.1" height="8.1" fill="#d8100e"/>
<rect x="724.8" y="602.9" width="5" height="4.6" fill="#d8100e"/>
<rect x="734.5" y="599.0" width="1.1" height="18.9" fill="#1f6fc4"/>
<rect x="732.5" y="599.3" width="5" height="8.2" fill="#1f6fc4"/>
<rect x="742.1" y="588.4" width="1.1" height="12.0" fill="#1f6fc4"/>
<rect x="740.1" y="589.5" width="5" height="10.9" fill="#1f6fc4"/>
<rect x="749.8" y="581.1" width="1.1" height="10.1" fill="#1f6fc4"/>
<rect x="747.8" y="586.2" width="5" height="5.0" fill="#1f6fc4"/>
<rect x="757.5" y="584.0" width="1.1" height="13.1" fill="#1f6fc4"/>
<rect x="755.5" y="584.0" width="5" height="2.2" fill="#1f6fc4"/>
<rect x="765.1" y="562.0" width="1.1" height="22.0" fill="#1f6fc4"/>
<rect x="763.1" y="563.6" width="5" height="20.4" fill="#1f6fc4"/>
<rect x="772.8" y="558.8" width="1.1" height="9.9" fill="#1f6fc4"/>
<rect x="770.8" y="558.8" width="5" height="5.5" fill="#1f6fc4"/>
<rect x="780.5" y="535.8" width="1.1" height="38.3" fill="#1f6fc4"/>
<rect x="778.5" y="538.7" width="5" height="20.5" fill="#1f6fc4"/>
<rect x="788.1" y="527.1" width="1.1" height="59.1" fill="#d8100e"/>
<rect x="786.1" y="539.6" width="5" height="42.2" fill="#d8100e"/>
<rect x="795.8" y="547.9" width="1.1" height="38.3" fill="#1f6fc4"/>
<rect x="793.8" y="547.9" width="5" height="32.8" fill="#1f6fc4"/>
<rect x="803.5" y="531.5" width="1.1" height="24.0" fill="#d8100e"/>
<rect x="801.5" y="547.9" width="5" height="2.0" fill="#d8100e"/>
<rect x="811.1" y="540.9" width="1.1" height="18.1" fill="#1f6fc4"/>
<rect x="809.1" y="543.0" width="5" height="6.6" fill="#1f6fc4"/>
<rect x="818.8" y="543.0" width="1.1" height="34.0" fill="#d8100e"/>
<rect x="816.8" y="543.0" width="5" height="34.0" fill="#d8100e"/>
<rect x="826.5" y="553.3" width="1.1" height="27.5" fill="#1f6fc4"/>
<rect x="824.5" y="561.0" width="5" height="15.3" fill="#1f6fc4"/>
<rect x="834.1" y="528.2" width="1.1" height="39.8" fill="#1f6fc4"/>
<rect x="832.1" y="532.1" width="5" height="28.9" fill="#1f6fc4"/>
<rect x="841.8" y="519.4" width="1.1" height="16.4" fill="#d8100e"/>
<rect x="839.8" y="520.5" width="5" height="15.3" fill="#d8100e"/>
<rect x="849.4" y="533.9" width="1.1" height="13.3" fill="#d8100e"/>
<rect x="847.4" y="535.6" width="5" height="5.9" fill="#d8100e"/>
<rect x="857.1" y="533.8" width="1.1" height="23.2" fill="#d8100e"/>
<rect x="855.1" y="541.3" width="5" height="2.3" fill="#d8100e"/>
<rect x="864.8" y="540.0" width="1.1" height="8.6" fill="#d8100e"/>
<rect x="862.8" y="543.7" width="5" height="2.1" fill="#d8100e"/>
<rect x="872.4" y="529.4" width="1.1" height="15.1" fill="#1f6fc4"/>
<rect x="870.4" y="533.2" width="5" height="11.3" fill="#1f6fc4"/>
<rect x="880.1" y="529.4" width="1.1" height="9.9" fill="#d8100e"/>
<rect x="878.1" y="533.2" width="5" height="4.2" fill="#d8100e"/>
<rect x="887.8" y="537.0" width="1.1" height="15.4" fill="#d8100e"/>
<rect x="885.8" y="537.0" width="5" height="11.0" fill="#d8100e"/>
<rect x="895.4" y="545.8" width="1.1" height="8.5" fill="#d8100e"/>
<rect x="893.4" y="549.1" width="5" height="3.3" fill="#d8100e"/>
<rect x="903.1" y="546.4" width="1.1" height="12.8" fill="#1f6fc4"/>
<rect x="901.1" y="546.4" width="5" height="6.3" fill="#1f6fc4"/>
<rect x="910.8" y="532.0" width="1.1" height="17.6" fill="#1f6fc4"/>
<rect x="908.8" y="532.0" width="5" height="13.2" fill="#1f6fc4"/>
<rect x="918.4" y="526.1" width="1.1" height="11.6" fill="#1f6fc4"/>
<rect x="916.4" y="530.5" width="5" height="2.1" fill="#1f6fc4"/>
<rect x="926.1" y="527.9" width="1.1" height="7.7" fill="#1f6fc4"/>
<rect x="924.1" y="527.9" width="5" height="2.4" fill="#1f6fc4"/>
<rect x="933.8" y="521.8" width="1.1" height="7.6" fill="#1f6fc4"/>
<rect x="931.8" y="521.8" width="5" height="7.6" fill="#1f6fc4"/>
<rect x="941.4" y="459.0" width="1.1" height="63.9" fill="#1f6fc4"/>
<rect x="939.4" y="478.0" width="5" height="43.8" fill="#1f6fc4"/>
<rect x="949.1" y="470.3" width="1.1" height="18.0" fill="#1f6fc4"/>
<rect x="947.1" y="472.5" width="5" height="7.7" fill="#1f6fc4"/>
<rect x="956.8" y="459.0" width="1.1" height="24.0" fill="#d8100e"/>
<rect x="954.8" y="472.5" width="5" height="10.5" fill="#d8100e"/>
<rect x="964.4" y="452.8" width="1.1" height="35.5" fill="#1f6fc4"/>
<rect x="962.4" y="459.4" width="5" height="23.0" fill="#1f6fc4"/>
<polyline points="0.0,627.0 7.4,627.0 13.8,604.0 22.0,603.3 33.2,602.4 46.0,605.0 55.3,598.7 60.8,588.5 70.0,586.7 77.4,571.0 83.0,572.0 92.2,577.4 99.6,584.8 118.0,585.7 145.8,587.4 153.2,596.6 163.3,596.6 168.0,582.8 175.3,569.9 183.6,561.6 193.8,560.6 223.3,561.6 232.5,559.7 241.7,560.6 251.4,570.2 274.2,570.6 281.5,576.8 299.1,578.9 321.9,579.3 336.4,586.2 343.7,578.9 361.3,564.0 376.5,563.3 392.7,547.2 406.5,542.1 413.4,541.4 423.8,528.8 436.5,509.6 446.2,509.5 452.4,505.8 460.7,505.6 467.0,499.6 475.3,499.6 483.6,494.9 491.9,493.6 497.0,493.6 504.3,498.6 512.6,503.8 519.9,512.6 528.2,513.1 534.9,517.0 541.4,522.1 551.3,522.1 560.0,533.5 577.5,534.6 586.3,540.0 597.2,548.4 601.6,564.1 606.0,588.2 625.8,591.4 639.7,592.5 653.5,593.7 660.4,602.9 667.3,612.1 690.4,612.1 704.2,602.9 715.7,602.5 727.3,607.1 734.2,609.4 754.7,598.2 765.6,590.5 774.4,588.4 781.0,576.3 791.9,570.8 800.0,568.7 804.9,563.8 820.6,563.8 827.4,556.4 839.2,553.0 858.7,551.5 868.5,548.6 890.1,548.1 903.8,539.3 913.6,543.7 934.1,541.3 937.1,530.0 942.1,508.6 961.8,507.5" fill="none" stroke="#c5c199" stroke-width="2.2" stroke-linejoin="round"/>
<polyline points="0.0,614.0 59.0,614.0 68.2,610.3 77.4,595.5 138.4,595.5 145.8,586.5 274.2,586.2 283.5,596.5 290.8,596.5 299.1,577.9 341.6,576.8 345.7,575.8 382.3,573.7 396.1,573.7 401.9,569.8 413.4,568.4 427.2,556.4 436.5,539.1 475.3,538.5 491.3,526.6 506.4,526.6 520.9,522.2 529.2,515.2 544.7,509.4 583.0,509.4 597.2,521.4 604.9,552.7 612.0,552.2 632.7,558.0 642.0,563.7 651.2,571.8 660.4,573.0 678.9,575.3 688.1,579.9 704.2,582.2 725.0,584.0 735.3,591.4 783.2,592.7 789.7,588.4 820.6,588.7 841.1,573.1 877.3,573.1 889.1,567.7 928.3,567.7 935.1,557.4 942.1,529.4 949.7,528.3 956.3,525.1 965.1,520.7" fill="none" stroke="#0b0bc0" stroke-width="2.6" stroke-linejoin="round"/>
<polyline points="0.0,565.4 7.4,559.0 13.8,545.1 22.1,552.1 27.7,554.0 36.0,552.5 44.3,572.8 53.5,590.3 60.0,572.8 68.2,557.1 75.6,591.2 83.0,593.0 92.2,580.1 99.6,569.1 107.0,582.0 114.3,579.2 129.2,570.2 137.5,561.6 144.9,543.1 152.3,547.4 159.6,547.7 167.6,550.1 175.3,544.0 183.6,535.7 191.0,548.7 198.4,532.0 204.8,529.7 214.4,529.7 221.0,510.0 228.8,495.2 237.0,469.4 244.1,483.5 252.4,510.0 260.7,498.7 275.2,506.3 282.5,508.0 290.8,518.4 300.1,519.8 306.3,515.7 313.6,525.0 321.9,518.8 329.2,517.1 336.4,534.3 343.7,540.6 352.0,534.3 359.2,549.9 366.5,545.7 382.3,547.2 390.4,568.0 397.3,574.9 404.2,626.7 413.4,623.3 421.5,642.9 428.4,634.8 436.5,601.4 451.4,580.6 459.5,591.0 473.3,624.4 482.6,616.4 490.6,618.7 496.6,616.6 505.3,611.2 513.0,599.1 519.5,601.3 527.2,606.8 537.1,599.1 544.7,589.3 552.4,585.6 559.6,584.5 565.1,565.1 567.0,563.8 574.3,558.7 578.0,551.8 582.2,540.3 585.4,556.8 589.1,580.3 593.7,565.1 597.0,549.0 604.7,549.0 612.1,544.1 614.9,553.2 620.4,575.3 629.3,559.1 635.1,532.6 651.2,540.7 659.3,543.4 667.3,543.4 674.2,533.8 681.2,536.5 690.4,549.9 696.1,552.2 704.2,547.6 712.3,532.6 720.3,531.5 734.2,522.2 738.3,504.1 742.7,477.8 750.3,473.5 758.0,481.8 763.0,469.1 766.7,459.2" fill="none" stroke="#0a0a0a" stroke-width="2.2" stroke-linejoin="round"/>
<rect x="596.6" y="612.8" width="184.4" height="2" fill="#3e62c8"/>
<linearGradient id="gLbl" x1="0" y1="0" x2="0" y2="1"><stop offset="0" stop-color="#ececec"/><stop offset="1" stop-color="#c4c4c4"/></linearGradient>
<linearGradient id="gArr" x1="0" y1="0" x2="0" y2="1"><stop offset="0" stop-color="#f89050"/><stop offset="1" stop-color="#e01010"/></linearGradient>
<rect x="850" y="426.4" width="141.5" height="12.6" fill="url(#gLbl)"/>
<text x="855.0" y="437.3" font-size="11.5" fill="#111" font-weight="normal" text-anchor="start" textLength="130.8" lengthAdjust="spacingAndGlyphs" stroke="#111" stroke-width="0.18" >short haut de range H1</text>
<path d="M962,434.5 L968.5,434.5 L968.5,440.5 L972,440.5 L965.2,447.5 L958.5,440.5 L962,440.5 Z" fill="url(#gArr)"/>
<path d="M962,507.5 L968.5,507.5 L968.5,501.5 L972,501.5 L965.2,494.5 L958.5,501.5 L962,501.5 Z" fill="#e01818"/>
<text x="950.2" y="517.8" font-size="11.5" fill="#111" font-weight="normal" text-anchor="start" textLength="29.8" lengthAdjust="spacingAndGlyphs" stroke="#111" stroke-width="0.18" >-81,8</text>
<rect x="10" y="360.2" width="234" height="29.3" fill="#dcdcdc" opacity="0.8"/>
<text x="11.5" y="380.6" font-size="15" fill="#3a3a78" font-weight="normal" text-anchor="start" textLength="9.5" lengthAdjust="spacingAndGlyphs" stroke="#3a3a78" stroke-width="0.18" >S</text>
<text x="29.7" y="382.6" font-size="12.5" fill="#a8a8a8" font-weight="normal" text-anchor="start" textLength="19.5" lengthAdjust="spacingAndGlyphs" stroke="#a8a8a8" stroke-width="0.5">248</text>
<text x="58.5" y="382.6" font-size="22" fill="#a8a8a8" font-weight="bold" text-anchor="start" textLength="24.4" lengthAdjust="spacingAndGlyphs" >61</text>
<text x="86.4" y="374.9" font-size="11.5" fill="#ababab" font-weight="normal" text-anchor="start" textLength="13.4" lengthAdjust="spacingAndGlyphs" stroke="#ababab" stroke-width="0.4">40</text>
<rect x="102.8" y="365.7" width="48.7" height="18.3" fill="#ffffff" stroke="#e8e8e8" stroke-width="0.6"/>
<text x="104.0" y="378.8" font-size="11" fill="#cfcfcf" font-weight="normal" text-anchor="start" stroke="none">1</text>
<path d="M143.5,374.5 L147.5,374.5 L145.5,376.5 Z" fill="#c8c8c8"/>
<text x="158.5" y="382.6" font-size="12.5" fill="#3e8ed2" font-weight="normal" text-anchor="start" textLength="20.3" lengthAdjust="spacingAndGlyphs" stroke="#3e8ed2" stroke-width="0.5">248</text>
<text x="187.2" y="382.6" font-size="22" fill="#3e8ed2" font-weight="bold" text-anchor="start" textLength="25.2" lengthAdjust="spacingAndGlyphs" >63</text>
<text x="216.8" y="374.9" font-size="11.5" fill="#3e8ed2" font-weight="normal" text-anchor="start" textLength="12.0" lengthAdjust="spacingAndGlyphs" stroke="#3e8ed2" stroke-width="0.4">10</text>
<text x="232.3" y="380.6" font-size="15" fill="#3a3a78" font-weight="normal" text-anchor="start" textLength="9.5" lengthAdjust="spacingAndGlyphs" stroke="#3a3a78" stroke-width="0.18" >B</text>
<text x="10.0" y="402.0" font-size="11.5" fill="#3c3c78" font-weight="normal" text-anchor="start" textLength="114.4" lengthAdjust="spacingAndGlyphs" stroke="#3c3c78" stroke-width="0.18" >[Modele : Ichimoku]</text>
<text x="10.0" y="415.4" font-size="11.5" fill="#c9c59c" font-weight="normal" text-anchor="start" textLength="119.5" lengthAdjust="spacingAndGlyphs" stroke="#c9c59c" stroke-width="0.18" >ICH(US30, 9, 26, 52)</text>
<text x="138.8" y="415.4" font-size="11.5" fill="#c9c59c" font-weight="normal" text-anchor="start" textLength="77.7" lengthAdjust="spacingAndGlyphs" stroke="#c9c59c" stroke-width="0.18" >TL: 24 729,15</text>
<text x="225.5" y="415.4" font-size="11.5" fill="#2828b8" font-weight="normal" text-anchor="start" textLength="79.7" lengthAdjust="spacingAndGlyphs" stroke="#2828b8" stroke-width="0.18" >KL: 24 688,65</text>
<text x="313.6" y="415.4" font-size="11.5" fill="#111111" font-weight="normal" text-anchor="start" textLength="82.4" lengthAdjust="spacingAndGlyphs" stroke="#111111" stroke-width="0.18" >CS: 24 861,40</text>
<text x="404.2" y="415.4" font-size="11.5" fill="#c8582a" font-weight="normal" text-anchor="start" textLength="81.6" lengthAdjust="spacingAndGlyphs" stroke="#c8582a" stroke-width="0.18" >SA: 24 708,90</text>
<text x="494.5" y="415.4" font-size="11.5" fill="#3a8ab8" font-weight="normal" text-anchor="start" textLength="81.8" lengthAdjust="spacingAndGlyphs" stroke="#3a8ab8" stroke-width="0.18" >SB: 24 598,65</text>
<text x="10.0" y="428.0" font-size="11.5" fill="#111" font-weight="normal" text-anchor="start" textLength="197.0" lengthAdjust="spacingAndGlyphs" stroke="#111" stroke-width="0.18" >SHOWTIMETOEND(US30)(0:10:38)</text>
<rect x="1377" y="358.2" width="5.5" height="1.2" fill="#454550"/>
<rect x="1377" y="367.0" width="5.5" height="1.2" fill="#454550"/>
<rect x="1377" y="375.8" width="5.5" height="1.2" fill="#454550"/>
<rect x="1377" y="384.6" width="5.5" height="1.2" fill="#454550"/>
<rect x="1377" y="393.4" width="5.5" height="1.2" fill="#454550"/>
<rect x="1377" y="402.2" width="5.5" height="1.2" fill="#454550"/>
<rect x="1368" y="411.0" width="15" height="1.2" fill="#454550"/>
<rect x="1377" y="419.8" width="5.5" height="1.2" fill="#454550"/>
<rect x="1377" y="428.6" width="5.5" height="1.2" fill="#454550"/>
<rect x="1377" y="437.4" width="5.5" height="1.2" fill="#454550"/>
<rect x="1377" y="446.2" width="5.5" height="1.2" fill="#454550"/>
<rect x="1377" y="455.0" width="5.5" height="1.2" fill="#454550"/>
<rect x="1377" y="463.8" width="5.5" height="1.2" fill="#454550"/>
<rect x="1377" y="472.6" width="5.5" height="1.2" fill="#454550"/>
<rect x="1377" y="481.3" width="5.5" height="1.2" fill="#454550"/>
<rect x="1377" y="490.1" width="5.5" height="1.2" fill="#454550"/>
<rect x="1368" y="498.9" width="15" height="1.2" fill="#454550"/>
<rect x="1377" y="507.7" width="5.5" height="1.2" fill="#454550"/>
<rect x="1377" y="516.5" width="5.5" height="1.2" fill="#454550"/>
<rect x="1377" y="525.3" width="5.5" height="1.2" fill="#454550"/>
<rect x="1377" y="534.1" width="5.5" height="1.2" fill="#454550"/>
<rect x="1377" y="542.9" width="5.5" height="1.2" fill="#454550"/>
<rect x="1377" y="551.7" width="5.5" height="1.2" fill="#454550"/>
<rect x="1377" y="560.5" width="5.5" height="1.2" fill="#454550"/>
<rect x="1377" y="569.3" width="5.5" height="1.2" fill="#454550"/>
<rect x="1377" y="578.1" width="5.5" height="1.2" fill="#454550"/>
<rect x="1368" y="586.9" width="15" height="1.2" fill="#454550"/>
<rect x="1377" y="595.7" width="5.5" height="1.2" fill="#454550"/>
<rect x="1377" y="604.4" width="5.5" height="1.2" fill="#454550"/>
<rect x="1377" y="613.2" width="5.5" height="1.2" fill="#454550"/>
<rect x="1377" y="622.0" width="5.5" height="1.2" fill="#454550"/>
<rect x="1377" y="630.8" width="5.5" height="1.2" fill="#454550"/>
<rect x="1377" y="639.6" width="5.5" height="1.2" fill="#454550"/>
<rect x="1377" y="648.4" width="5.5" height="1.2" fill="#454550"/>
<rect x="1377" y="657.2" width="5.5" height="1.2" fill="#454550"/>
<rect x="1377" y="666.0" width="5.5" height="1.2" fill="#454550"/>
<rect x="1368" y="674.8" width="15" height="1.2" fill="#454550"/>
<rect x="1377" y="683.6" width="5.5" height="1.2" fill="#454550"/>
<rect x="1377" y="692.4" width="5.5" height="1.2" fill="#454550"/>
<rect x="1377" y="701.2" width="5.5" height="1.2" fill="#454550"/>
<rect x="1377" y="710.0" width="5.5" height="1.2" fill="#454550"/>
<rect x="1377" y="718.8" width="5.5" height="1.2" fill="#454550"/>
<rect x="1377" y="727.5" width="5.5" height="1.2" fill="#454550"/>
<rect x="1377" y="736.3" width="5.5" height="1.2" fill="#454550"/>
<rect x="1377" y="745.1" width="5.5" height="1.2" fill="#454550"/>
<rect x="1377" y="753.9" width="5.5" height="1.2" fill="#454550"/>
<rect x="1368" y="762.7" width="15" height="1.2" fill="#454550"/>
<rect x="1377" y="771.5" width="5.5" height="1.2" fill="#454550"/>
<text x="1385.7" y="415.6" font-size="11.5" fill="#3a3a6a" font-weight="normal" text-anchor="start" textLength="37.5" lengthAdjust="spacingAndGlyphs" stroke="#3a3a6a" stroke-width="0.18" >25 000</text>
<text x="1385.7" y="503.5" font-size="11.5" fill="#3a3a6a" font-weight="normal" text-anchor="start" textLength="37.5" lengthAdjust="spacingAndGlyphs" stroke="#3a3a6a" stroke-width="0.18" >24 750</text>
<text x="1385.7" y="591.5" font-size="11.5" fill="#3a3a6a" font-weight="normal" text-anchor="start" textLength="37.5" lengthAdjust="spacingAndGlyphs" stroke="#3a3a6a" stroke-width="0.18" >24 500</text>
<text x="1385.7" y="679.4" font-size="11.5" fill="#3a3a6a" font-weight="normal" text-anchor="start" textLength="37.5" lengthAdjust="spacingAndGlyphs" stroke="#3a3a6a" stroke-width="0.18" >24 250</text>
<text x="1385.7" y="767.3" font-size="11.5" fill="#3a3a6a" font-weight="normal" text-anchor="start" textLength="37.5" lengthAdjust="spacingAndGlyphs" stroke="#3a3a6a" stroke-width="0.18" >24 000</text>
<clipPath id="cpL"><rect x="1383" y="440" width="56" height="130"/></clipPath><g clip-path="url(#cpL)">
<rect x="1383" y="451.3" width="57" height="16" fill="#5cb8f0"/>
<rect x="1383" y="467.3" width="57" height="3.8" fill="#050505"/>
<text x="1384.0" y="463.6" font-size="11.5" fill="#111" font-weight="normal" text-anchor="start" textLength="57.0" lengthAdjust="spacingAndGlyphs" stroke="#111" stroke-width="0.18" >24 861,40</text>
<rect x="1383" y="540.7" width="57" height="15.5" fill="#f7930c"/>
<text x="1384.0" y="552.6" font-size="11.5" fill="#111" font-weight="normal" text-anchor="start" textLength="57.0" lengthAdjust="spacingAndGlyphs" stroke="#111" stroke-width="0.18" >24 609,90</text>
</g>
<rect x="1" y="779.3" width="1382" height="1.3" fill="#454550"/>
<rect x="1" y="767" width="1.2" height="13" fill="#454550"/>
<rect x="4.1" y="777.0" width="1.2" height="3" fill="#454550"/>
<rect x="18.5" y="774.0" width="1.2" height="6" fill="#454550"/>
<rect x="32.9" y="777.0" width="1.2" height="3" fill="#454550"/>
<rect x="47.2" y="774.0" width="1.2" height="6" fill="#454550"/>
<rect x="61.6" y="777.0" width="1.2" height="3" fill="#454550"/>
<rect x="76.0" y="768.0" width="1.2" height="12" fill="#454550"/>
<rect x="90.4" y="777.0" width="1.2" height="3" fill="#454550"/>
<rect x="104.8" y="774.0" width="1.2" height="6" fill="#454550"/>
<rect x="119.1" y="777.0" width="1.2" height="3" fill="#454550"/>
<rect x="133.5" y="774.0" width="1.2" height="6" fill="#454550"/>
<rect x="147.9" y="777.0" width="1.2" height="3" fill="#454550"/>
<rect x="162.2" y="774.0" width="1.2" height="6" fill="#454550"/>
<rect x="176.6" y="777.0" width="1.2" height="3" fill="#454550"/>
<rect x="191.0" y="768.0" width="1.2" height="12" fill="#454550"/>
<rect x="205.4" y="777.0" width="1.2" height="3" fill="#454550"/>
<rect x="219.8" y="774.0" width="1.2" height="6" fill="#454550"/>
<rect x="234.1" y="777.0" width="1.2" height="3" fill="#454550"/>
<rect x="248.5" y="774.0" width="1.2" height="6" fill="#454550"/>
<rect x="262.9" y="777.0" width="1.2" height="3" fill="#454550"/>
<rect x="277.2" y="774.0" width="1.2" height="6" fill="#454550"/>
<rect x="291.6" y="777.0" width="1.2" height="3" fill="#454550"/>
<rect x="306.0" y="768.0" width="1.2" height="12" fill="#454550"/>
<rect x="320.4" y="777.0" width="1.2" height="3" fill="#454550"/>
<rect x="334.8" y="774.0" width="1.2" height="6" fill="#454550"/>
<rect x="349.1" y="777.0" width="1.2" height="3" fill="#454550"/>
<rect x="363.5" y="774.0" width="1.2" height="6" fill="#454550"/>
<rect x="377.9" y="777.0" width="1.2" height="3" fill="#454550"/>
<rect x="392.2" y="774.0" width="1.2" height="6" fill="#454550"/>
<rect x="406.6" y="777.0" width="1.2" height="3" fill="#454550"/>
<rect x="421.0" y="768.0" width="1.2" height="12" fill="#454550"/>
<rect x="435.4" y="777.0" width="1.2" height="3" fill="#454550"/>
<rect x="449.8" y="774.0" width="1.2" height="6" fill="#454550"/>
<rect x="464.1" y="777.0" width="1.2" height="3" fill="#454550"/>
<rect x="478.5" y="774.0" width="1.2" height="6" fill="#454550"/>
<rect x="492.9" y="777.0" width="1.2" height="3" fill="#454550"/>
<rect x="507.2" y="774.0" width="1.2" height="6" fill="#454550"/>
<rect x="521.6" y="777.0" width="1.2" height="3" fill="#454550"/>
<rect x="536.0" y="768.0" width="1.2" height="12" fill="#454550"/>
<rect x="550.4" y="777.0" width="1.2" height="3" fill="#454550"/>
<rect x="564.8" y="774.0" width="1.2" height="6" fill="#454550"/>
<rect x="579.1" y="777.0" width="1.2" height="3" fill="#454550"/>
<rect x="593.5" y="774.0" width="1.2" height="6" fill="#454550"/>
<rect x="607.9" y="777.0" width="1.2" height="3" fill="#454550"/>
<rect x="622.2" y="774.0" width="1.2" height="6" fill="#454550"/>
<rect x="636.6" y="777.0" width="1.2" height="3" fill="#454550"/>
<rect x="651.0" y="768.0" width="1.2" height="12" fill="#454550"/>
<rect x="665.4" y="777.0" width="1.2" height="3" fill="#454550"/>
<rect x="679.8" y="774.0" width="1.2" height="6" fill="#454550"/>
<rect x="694.1" y="777.0" width="1.2" height="3" fill="#454550"/>
<rect x="708.5" y="774.0" width="1.2" height="6" fill="#454550"/>
<rect x="722.9" y="777.0" width="1.2" height="3" fill="#454550"/>
<rect x="737.2" y="774.0" width="1.2" height="6" fill="#454550"/>
<rect x="751.6" y="777.0" width="1.2" height="3" fill="#454550"/>
<rect x="766.0" y="768.0" width="1.2" height="12" fill="#454550"/>
<rect x="780.4" y="777.0" width="1.2" height="3" fill="#454550"/>
<rect x="794.8" y="774.0" width="1.2" height="6" fill="#454550"/>
<rect x="809.1" y="777.0" width="1.2" height="3" fill="#454550"/>
<rect x="823.5" y="774.0" width="1.2" height="6" fill="#454550"/>
<rect x="837.9" y="777.0" width="1.2" height="3" fill="#454550"/>
<rect x="852.2" y="774.0" width="1.2" height="6" fill="#454550"/>
<rect x="866.6" y="777.0" width="1.2" height="3" fill="#454550"/>
<rect x="881.0" y="768.0" width="1.2" height="12" fill="#454550"/>
<rect x="895.4" y="777.0" width="1.2" height="3" fill="#454550"/>
<rect x="909.8" y="774.0" width="1.2" height="6" fill="#454550"/>
<rect x="924.1" y="777.0" width="1.2" height="3" fill="#454550"/>
<rect x="938.5" y="774.0" width="1.2" height="6" fill="#454550"/>
<rect x="952.9" y="777.0" width="1.2" height="3" fill="#454550"/>
<rect x="967.2" y="774.0" width="1.2" height="6" fill="#454550"/>
<rect x="981.6" y="777.0" width="1.2" height="3" fill="#454550"/>
<rect x="996.0" y="768.0" width="1.2" height="12" fill="#454550"/>
<rect x="1010.4" y="777.0" width="1.2" height="3" fill="#454550"/>
<rect x="1024.8" y="774.0" width="1.2" height="6" fill="#454550"/>
<rect x="1039.1" y="777.0" width="1.2" height="3" fill="#454550"/>
<rect x="1053.5" y="774.0" width="1.2" height="6" fill="#454550"/>
<rect x="1067.9" y="777.0" width="1.2" height="3" fill="#454550"/>
<rect x="1082.2" y="774.0" width="1.2" height="6" fill="#454550"/>
<rect x="1096.6" y="777.0" width="1.2" height="3" fill="#454550"/>
<rect x="1111.0" y="768.0" width="1.2" height="12" fill="#454550"/>
<rect x="1125.4" y="777.0" width="1.2" height="3" fill="#454550"/>
<rect x="1139.8" y="774.0" width="1.2" height="6" fill="#454550"/>
<rect x="1154.1" y="777.0" width="1.2" height="3" fill="#454550"/>
<rect x="1168.5" y="774.0" width="1.2" height="6" fill="#454550"/>
<rect x="1182.9" y="777.0" width="1.2" height="3" fill="#454550"/>
<rect x="1197.2" y="774.0" width="1.2" height="6" fill="#454550"/>
<rect x="1211.6" y="777.0" width="1.2" height="3" fill="#454550"/>
<rect x="1226.0" y="768.0" width="1.2" height="12" fill="#454550"/>
<rect x="1240.4" y="777.0" width="1.2" height="3" fill="#454550"/>
<rect x="1254.8" y="774.0" width="1.2" height="6" fill="#454550"/>
<rect x="1269.1" y="777.0" width="1.2" height="3" fill="#454550"/>
<rect x="1283.5" y="774.0" width="1.2" height="6" fill="#454550"/>
<rect x="1297.9" y="777.0" width="1.2" height="3" fill="#454550"/>
<rect x="1312.2" y="774.0" width="1.2" height="6" fill="#454550"/>
<rect x="1326.6" y="777.0" width="1.2" height="3" fill="#454550"/>
<rect x="1341.0" y="768.0" width="1.2" height="12" fill="#454550"/>
<rect x="1355.4" y="777.0" width="1.2" height="3" fill="#454550"/>
<text x="1.6" y="797.9" font-size="11.5" fill="#3a3a6a" font-weight="normal" text-anchor="start" textLength="101.7" lengthAdjust="spacingAndGlyphs" stroke="#3a3a6a" stroke-width="0.18" >23/01/2019 05:00</text>
<text x="190.0" y="797.9" font-size="11.5" fill="#3a3a6a" font-weight="normal" text-anchor="middle" textLength="69.6" lengthAdjust="spacingAndGlyphs" stroke="#3a3a6a" stroke-width="0.18" >24/01 07:00</text>
<text x="305.0" y="797.9" font-size="11.5" fill="#3a3a6a" font-weight="normal" text-anchor="middle" textLength="32.4" lengthAdjust="spacingAndGlyphs" stroke="#3a3a6a" stroke-width="0.18" >22:00</text>
<text x="420.0" y="797.9" font-size="11.5" fill="#3a3a6a" font-weight="normal" text-anchor="middle" textLength="69.0" lengthAdjust="spacingAndGlyphs" stroke="#3a3a6a" stroke-width="0.18" >25/01 14:00</text>
<text x="535.0" y="797.9" font-size="11.5" fill="#3a3a6a" font-weight="normal" text-anchor="middle" textLength="69.0" lengthAdjust="spacingAndGlyphs" stroke="#3a3a6a" stroke-width="0.18" >28/01 06:00</text>
<text x="650.0" y="797.9" font-size="11.5" fill="#3a3a6a" font-weight="normal" text-anchor="middle" textLength="32.4" lengthAdjust="spacingAndGlyphs" stroke="#3a3a6a" stroke-width="0.18" >21:00</text>
<text x="765.0" y="797.9" font-size="11.5" fill="#3a3a6a" font-weight="normal" text-anchor="middle" textLength="69.0" lengthAdjust="spacingAndGlyphs" stroke="#3a3a6a" stroke-width="0.18" >29/01 13:00</text>
<text x="880.0" y="797.9" font-size="11.5" fill="#3a3a6a" font-weight="normal" text-anchor="middle" textLength="69.0" lengthAdjust="spacingAndGlyphs" stroke="#3a3a6a" stroke-width="0.18" >30/01 05:00</text>
<text x="995.0" y="797.9" font-size="11.5" fill="#3a3a6a" font-weight="normal" text-anchor="middle" textLength="32.4" lengthAdjust="spacingAndGlyphs" stroke="#3a3a6a" stroke-width="0.18" >20:00</text>
<text x="1110.0" y="797.9" font-size="11.5" fill="#3a3a6a" font-weight="normal" text-anchor="middle" textLength="69.0" lengthAdjust="spacingAndGlyphs" stroke="#3a3a6a" stroke-width="0.18" >31/01 11:00</text>
<text x="1225.0" y="797.9" font-size="11.5" fill="#3a3a6a" font-weight="normal" text-anchor="middle" textLength="69.0" lengthAdjust="spacingAndGlyphs" stroke="#3a3a6a" stroke-width="0.18" >01/02 02:00</text>
<rect x="1289.1" y="785" width="105.6" height="15.8" fill="#f7960e"/>
<text x="1291.0" y="797.7" font-size="11.5" fill="#111" font-weight="normal" text-anchor="start" textLength="101.0" lengthAdjust="spacingAndGlyphs" stroke="#111" stroke-width="0.18" >01/02/2019 17:00</text>
<rect x="0" y="806.3" width="1440" height="3.6" fill="#c3cbd8"/>
<rect x="0" y="812.5" width="1369" height="1.5" fill="#d8dce4"/>
<rect x="76.0" y="814" width="1" height="54" fill="#dedede"/>
<rect x="191.0" y="814" width="1" height="54" fill="#dedede"/>
<rect x="306.0" y="814" width="1" height="54" fill="#dedede"/>
<rect x="421.0" y="814" width="1" height="54" fill="#dedede"/>
<rect x="536.0" y="814" width="1" height="54" fill="#dedede"/>
<rect x="651.0" y="814" width="1" height="54" fill="#dedede"/>
<rect x="766.0" y="814" width="1" height="54" fill="#dedede"/>
<rect x="881.0" y="814" width="1" height="54" fill="#dedede"/>
<rect x="996.0" y="814" width="1" height="54" fill="#dedede"/>
<rect x="1111.0" y="814" width="1" height="54" fill="#dedede"/>
<rect x="1226.0" y="814" width="1" height="54" fill="#dedede"/>
<rect x="1341.0" y="814" width="1" height="54" fill="#dedede"/>
<rect x="1366.8" y="812.5" width="2" height="56" fill="#c9ccd6"/>
<rect x="1" y="848.8" width="1366" height="1.2" fill="#e06a6a"/>
<rect x="1" y="813" width="1.5" height="55" fill="#c9ccd6"/>
<text x="9.5" y="824.5" font-size="11.5" fill="#c8582a" font-weight="normal" text-anchor="start" textLength="159.0" lengthAdjust="spacingAndGlyphs" stroke="#c8582a" stroke-width="0.18" >RSI(US30.Close, 21): 67,17</text>
<rect x="1" y="816.8" width="1366" height="1.2" fill="#111"/>
<polyline points="0.0,850.4 10.4,849.7 27.6,852.5 38.0,848.7 48.3,847.3 60.4,843.5 76.0,840.4 91.5,853.9 103.6,849.7 117.4,848.7 124.3,846.3 138.1,848.0 158.8,846.6 172.7,846.3 193.4,846.6 214.1,844.5 234.8,845.2 252.1,851.4 265.9,846.3 276.2,850.7 293.5,848.7 310.8,849.0 331.5,848.0 345.3,844.5 366.0,845.6 383.3,844.5 393.6,845.9 414.4,842.8 436.8,836.9 452.3,844.2 462.7,842.1 476.5,844.5 490.4,845.6 504.2,844.5 514.5,846.3 531.8,845.9 537.0,848.7 550.8,848.3 561.1,850.7 583.6,850.1 590.5,852.8 600.9,854.9 607.8,860.1 618.1,861.1 628.5,859.0 638.8,854.2 652.6,851.4 673.4,855.9 687.2,854.2 707.9,852.5 721.7,853.5 742.4,849.7 759.7,848.7 766.6,846.3 780.4,843.5 790.8,848.7 797.7,845.2 814.9,845.2 820.1,848.7 835.7,844.5 863.3,845.9 873.7,844.5 890.9,846.9 911.6,844.5 928.9,843.8 946.1,839.0 956.5,840.4 965.1,838.3" fill="none" stroke="#c0602a" stroke-width="1.2"/>
<line x1="1337.5" y1="813" x2="1337.5" y2="868" stroke="#111" stroke-width="1.3" stroke-dasharray="3.2,2.6"/>
<line x1="1344.5" y1="813" x2="1344.5" y2="868" stroke="#111" stroke-width="1.3" stroke-dasharray="3.2,2.6"/>
<rect x="1382" y="814.5" width="1.2" height="54" fill="#454550"/>
<rect x="1368.0" y="816.7" width="15" height="1.2" fill="#454550"/>
<rect x="1376.0" y="822.7" width="7" height="1.2" fill="#454550"/>
<rect x="1376.0" y="828.6" width="7" height="1.2" fill="#454550"/>
<rect x="1376.0" y="836.0" width="7" height="1.2" fill="#454550"/>
<rect x="1376.0" y="841.6" width="7" height="1.2" fill="#454550"/>
<rect x="1375.0" y="848.8" width="8" height="1.2" fill="#454550"/>
<rect x="1376.0" y="853.7" width="7" height="1.2" fill="#454550"/>
<rect x="1376.0" y="860.6" width="7" height="1.2" fill="#454550"/>
<rect x="1385" y="812.3" width="20.8" height="12.5" fill="#a6a6a6"/>
<text x="1386.0" y="823.6" font-size="11.5" fill="#111" font-weight="normal" text-anchor="start" textLength="19.0" lengthAdjust="spacingAndGlyphs" stroke="#111" stroke-width="0.18" >100</text>
<rect x="1385" y="844" width="13.7" height="12.8" fill="#a6a6a6"/>
<text x="1385.5" y="855.5" font-size="11.5" fill="#111" font-weight="normal" text-anchor="start" textLength="12.7" lengthAdjust="spacingAndGlyphs" stroke="#111" stroke-width="0.18" >50</text>
</svg></body></html>
